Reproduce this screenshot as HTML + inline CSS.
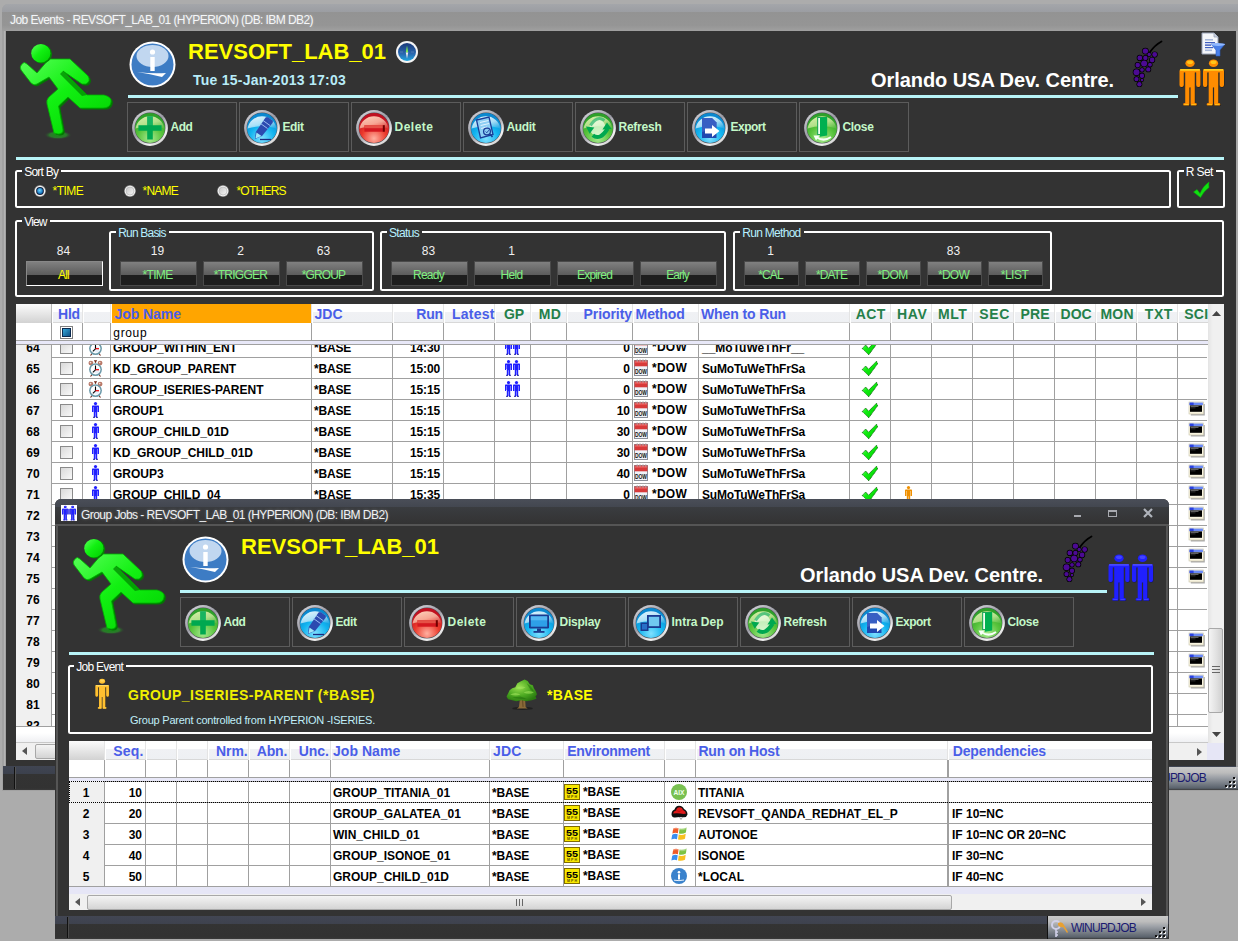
<!DOCTYPE html>
<html><head><meta charset="utf-8"><style>
html,body{margin:0;padding:0;}
body{width:1238px;height:941px;position:relative;overflow:hidden;background:#acacac;font-family:"Liberation Sans",sans-serif;}
svg{overflow:visible}
</style></head><body>
<div style="position:absolute;left:2px;top:4px;width:1240px;height:787px;background:#a2a2a2;border-radius:6px 6px 0 0;"></div>
<div style="position:absolute;left:2px;top:4px;width:1240px;height:9px;background:linear-gradient(#a4a6aa,#9a9ca1);border-radius:6px 6px 0 0;"></div>
<div style="position:absolute;left:2px;top:12px;width:1238px;height:19px;background:linear-gradient(#939393,#959595 70%,#a0a0a0);"></div>
<div style="position:absolute;left:4px;top:31px;width:1px;height:735px;background:#b4b4b4;"></div>
<div style="position:absolute;left:6px;top:31px;width:1230px;height:735px;background:#333333;"></div>
<div style="position:absolute;left:1236px;top:31px;width:2px;height:735px;background:#a8a8a8;"></div>
<div style="position:absolute;left:10.00px;top:19.84px;font:normal 12px 'Liberation Sans';line-height:0;white-space:pre;color:#f4f6f8;letter-spacing:-0.572px;text-shadow:0 0 3px rgba(255,255,255,0.35);">Job Events - REVSOFT_LAB_01 (HYPERION) (DB: IBM DB2)</div>
<svg style="position:absolute;left:16px;top:40px;" width="100" height="100" viewBox="0 0 100 100"><defs><linearGradient id="g1" x1="0" y1="0" x2="1" y2="1"><stop offset="0" stop-color="#5aff5a"/><stop offset="0.45" stop-color="#12f012"/><stop offset="1" stop-color="#00d000"/></linearGradient>
<radialGradient id="g2" cx="0.5" cy="0.5" r="0.5"><stop offset="0" stop-color="#1a8a1a"/><stop offset="0.6" stop-color="#2a7a2a"/><stop offset="1" stop-color="#333" stop-opacity="0"/></radialGradient></defs>
<ellipse cx="42" cy="95" rx="14" ry="4.5" fill="url(#g2)"/>
<path d="M6 24 Q8 21 11 24 L21 33 L33 19 L54 19 L72 36 Q75 41 70 44 L66 44 L47 31 L71 55 L88 55 Q96 57 95 62 Q94 68 87 68 L64 68 L52 57 L42.5 66 L47 90 Q47 94 42 94 L38 93 L31 64 Q30 60 33 57 L42 49 L33 37 L21 44 Q18 46 15 43 L5 30 Q3 27 6 24 Z" fill="#007a00" transform="translate(1.8,1.5)"/>
<path d="M6 24 Q8 21 11 24 L21 33 L33 19 L54 19 L72 36 Q75 41 70 44 L66 44 L47 31 L71 55 L88 55 Q96 57 95 62 Q94 68 87 68 L64 68 L52 57 L42.5 66 L47 90 Q47 94 42 94 L38 93 L31 64 Q30 60 33 57 L42 49 L33 37 L21 44 Q18 46 15 43 L5 30 Q3 27 6 24 Z" fill="url(#g1)" stroke="#00b000" stroke-width="0.8"/>
<path d="M47 31 L71 55 L66 56 L44 34 Z" fill="#008800" opacity="0.75"/>
<ellipse cx="26" cy="14" rx="10" ry="9.6" fill="#008a00"/><ellipse cx="24.8" cy="13.2" rx="9.6" ry="9.2" fill="url(#g1)"/></svg>
<svg style="position:absolute;left:128.5px;top:40.5px;" width="47" height="47" viewBox="0 0 47 47"><defs><radialGradient id="g3" cx="0.5" cy="0.3" r="0.7"><stop offset="0" stop-color="#cfe3f5"/><stop offset="0.45" stop-color="#6fa3d8"/><stop offset="1" stop-color="#2a6ab8"/></radialGradient></defs>
<circle cx="23.5" cy="23.5" r="23" fill="#fff"/><circle cx="23.5" cy="23.5" r="21" fill="#3d7cc4"/>
<ellipse cx="23.5" cy="15" rx="16" ry="11" fill="#d8e8f8" opacity="0.85"/>
<circle cx="23.5" cy="11" r="2.6" fill="#fff"/><rect x="21.3" y="16" width="4.4" height="14" fill="#fff"/>
<path d="M8 31 Q24 33 37 32 L33 36 Q22 33 8 31 Z" fill="#fff"/></svg>
<div style="position:absolute;left:188.00px;top:52.38px;font:bold 22px 'Liberation Sans';line-height:0;white-space:pre;color:#ffff00;">REVSOFT_LAB_01</div>
<svg style="position:absolute;left:396px;top:41px;" width="22" height="22" viewBox="0 0 22 22"><defs><linearGradient id="g4" x1="0" y1="0" x2="0" y2="1"><stop offset="0" stop-color="#1a3a78"/><stop offset="0.6" stop-color="#2a68b0"/><stop offset="1" stop-color="#20a8e0"/></linearGradient></defs>
<circle cx="11" cy="11" r="11" fill="#f4f4f4"/><circle cx="11" cy="11" r="9" fill="url(#g4)"/>
<path d="M4 11 H7 M15 11 H18" stroke="#6a90c0" stroke-width="0.6"/>
<path d="M11 4.5 L12.2 11.5 L9.8 11.5 Z" fill="#80f050"/><path d="M9.8 11.5 L12.2 11.5 L11 17.5 Z" fill="#f0f0f0"/></svg>
<div style="position:absolute;left:193.00px;top:80.15px;font:bold 14px 'Liberation Sans';line-height:0;white-space:pre;color:#b8ecf8;letter-spacing:0.257px;">Tue 15-Jan-2013 17:03</div>
<div style="position:absolute;left:871.00px;top:80.07px;font:bold 20px 'Liberation Sans';line-height:0;white-space:pre;color:#ffffff;letter-spacing:-0.062px;">Orlando USA Dev. Centre.</div>
<svg style="position:absolute;left:1125px;top:35px;" width="40" height="55" viewBox="0 0 40 55"><path d="M25 17 Q30 10 36.5 6.5" stroke="#000" stroke-width="1.8" fill="none" stroke-linecap="round"/><circle cx="20.4" cy="16.1" r="3.4" fill="#000"/><circle cx="24.2" cy="19.5" r="2.4" fill="#000"/><circle cx="29.7" cy="19.5" r="3.1" fill="#000"/><circle cx="14.8" cy="22.9" r="3.1" fill="#000"/><circle cx="20.4" cy="22.9" r="2.9" fill="#000"/><circle cx="27.1" cy="25" r="3.1" fill="#000"/><circle cx="12.7" cy="30.1" r="3.0" fill="#000"/><circle cx="19.1" cy="28.4" r="3.6999999999999997" fill="#000"/><circle cx="25" cy="29.7" r="2.6" fill="#000"/><circle cx="11.5" cy="37.3" r="3.6999999999999997" fill="#000"/><circle cx="17" cy="34.8" r="2.6" fill="#000"/><circle cx="23.3" cy="34.4" r="2.9" fill="#000"/><circle cx="17" cy="40.7" r="2.9" fill="#000"/><circle cx="11.5" cy="44.1" r="2.9" fill="#000"/><circle cx="17" cy="45" r="1.9" fill="#000"/><circle cx="14.4" cy="49.2" r="2.9" fill="#000"/><circle cx="20.4" cy="16.1" r="2.7" fill="#4c0a94"/><circle cx="24.2" cy="19.5" r="1.7" fill="#4c0a94"/><circle cx="29.7" cy="19.5" r="2.4000000000000004" fill="#4c0a94"/><circle cx="14.8" cy="22.9" r="2.4000000000000004" fill="#4c0a94"/><circle cx="20.4" cy="22.9" r="2.2" fill="#4c0a94"/><circle cx="27.1" cy="25" r="2.4000000000000004" fill="#4c0a94"/><circle cx="12.7" cy="30.1" r="2.3000000000000003" fill="#4c0a94"/><circle cx="19.1" cy="28.4" r="3.0" fill="#4c0a94"/><circle cx="25" cy="29.7" r="1.9000000000000001" fill="#4c0a94"/><circle cx="11.5" cy="37.3" r="3.0" fill="#4c0a94"/><circle cx="17" cy="34.8" r="1.9000000000000001" fill="#4c0a94"/><circle cx="23.3" cy="34.4" r="2.2" fill="#4c0a94"/><circle cx="17" cy="40.7" r="2.2" fill="#4c0a94"/><circle cx="11.5" cy="44.1" r="2.2" fill="#4c0a94"/><circle cx="17" cy="45" r="1.2" fill="#4c0a94"/><circle cx="14.4" cy="49.2" r="2.2" fill="#4c0a94"/></svg>
<svg style="position:absolute;left:1178.5px;top:59px;" width="46" height="47" viewBox="0 0 46 47"><g><ellipse cx="11" cy="4.2" rx="4.6" ry="3.8" fill="#ff8c00"/><ellipse cx="11" cy="3.2" rx="3" ry="1.8" fill="#ffd020" opacity="0.85"/>
<path d="M0.5 12 Q0.5 10 2.5 10 L19.5 10 Q21.5 10 21.5 12 L21.5 26 Q21.5 28 19.8 28 L19 28 Q17.2 28 17.2 26 L17.2 13.5 L15.8 13.5 L15.8 44 L17.5 44.2 Q18.5 46.5 16.5 46.5 L12 46.5 L11.6 45 L11.6 28.5 L10.4 28.5 L10.4 45 L10 46.5 L5.5 46.5 Q3.5 46.5 4.5 44.2 L6.2 44 L6.2 13.5 L4.8 13.5 L4.8 26 Q4.8 28 3 28 L2.2 28 Q0.5 28 0.5 26 Z" fill="#000" opacity="0.55" transform="translate(0.4,0.6)"/>
<path d="M0.5 12 Q0.5 10 2.5 10 L19.5 10 Q21.5 10 21.5 12 L21.5 26 Q21.5 28 19.8 28 L19 28 Q17.2 28 17.2 26 L17.2 13.5 L15.8 13.5 L15.8 44 L17.5 44.2 Q18.5 46.5 16.5 46.5 L12 46.5 L11.6 45 L11.6 28.5 L10.4 28.5 L10.4 45 L10 46.5 L5.5 46.5 Q3.5 46.5 4.5 44.2 L6.2 44 L6.2 13.5 L4.8 13.5 L4.8 26 Q4.8 28 3 28 L2.2 28 Q0.5 28 0.5 26 Z" fill="#ff8c00"/>
<path d="M1.2 10.9 L20.8 10.9" stroke="#ffd020" stroke-width="1.7"/>
<path d="M5.2 45.6 L9.5 45.6 M12.5 45.6 L16.8 45.6" stroke="#ffd020" stroke-width="1" opacity="0.8"/></g><g transform="translate(23.5,0)"><ellipse cx="11" cy="4.2" rx="4.6" ry="3.8" fill="#ff8c00"/><ellipse cx="11" cy="3.2" rx="3" ry="1.8" fill="#ffd020" opacity="0.85"/>
<path d="M0.5 12 Q0.5 10 2.5 10 L19.5 10 Q21.5 10 21.5 12 L21.5 26 Q21.5 28 19.8 28 L19 28 Q17.2 28 17.2 26 L17.2 13.5 L15.8 13.5 L15.8 44 L17.5 44.2 Q18.5 46.5 16.5 46.5 L12 46.5 L11.6 45 L11.6 28.5 L10.4 28.5 L10.4 45 L10 46.5 L5.5 46.5 Q3.5 46.5 4.5 44.2 L6.2 44 L6.2 13.5 L4.8 13.5 L4.8 26 Q4.8 28 3 28 L2.2 28 Q0.5 28 0.5 26 Z" fill="#000" opacity="0.55" transform="translate(0.4,0.6)"/>
<path d="M0.5 12 Q0.5 10 2.5 10 L19.5 10 Q21.5 10 21.5 12 L21.5 26 Q21.5 28 19.8 28 L19 28 Q17.2 28 17.2 26 L17.2 13.5 L15.8 13.5 L15.8 44 L17.5 44.2 Q18.5 46.5 16.5 46.5 L12 46.5 L11.6 45 L11.6 28.5 L10.4 28.5 L10.4 45 L10 46.5 L5.5 46.5 Q3.5 46.5 4.5 44.2 L6.2 44 L6.2 13.5 L4.8 13.5 L4.8 26 Q4.8 28 3 28 L2.2 28 Q0.5 28 0.5 26 Z" fill="#ff8c00"/>
<path d="M1.2 10.9 L20.8 10.9" stroke="#ffd020" stroke-width="1.7"/>
<path d="M5.2 45.6 L9.5 45.6 M12.5 45.6 L16.8 45.6" stroke="#ffd020" stroke-width="1" opacity="0.8"/></g></svg>
<svg style="position:absolute;left:1201px;top:32px;" width="25" height="25" viewBox="0 0 25 25"><path d="M1 1 L13 1 L17 5 L17 22 L1 22 Z" fill="#f4f6fa" stroke="#9aa4b8" stroke-width="1"/>
<path d="M13 1 L13 5 L17 5" fill="#c8d0e0" stroke="#9aa4b8" stroke-width="0.8"/>
<rect x="4" y="7" width="8" height="1.6" fill="#a8b8d8"/><rect x="4" y="10" width="10" height="1.2" fill="#4060c0"/><rect x="4" y="12.5" width="6" height="1.2" fill="#2040b0"/><rect x="4" y="15" width="8" height="1.2" fill="#4060c0"/><rect x="4" y="17.5" width="7" height="1.6" fill="#a8b8d8"/>
<path d="M10 12 L24 12 L19 18 L19 24 L15 24 L15 18 Z" fill="#4a80e8" stroke="#2a5ac0" stroke-width="0.6"/><ellipse cx="17" cy="12.5" rx="7" ry="1.5" fill="#90b8ff"/></svg>
<div style="position:absolute;left:128px;top:95px;width:1050px;height:3px;background:#b8f4f8;"></div>
<div style="position:absolute;left:127px;top:102px;width:110px;height:50px;box-sizing:border-box;border:1px solid #5c5c5c;"></div>
<svg style="position:absolute;left:132px;top:110px;" width="36" height="36" viewBox="0 0 36 36"><defs><linearGradient id="g5" x1="0.15" y1="0" x2="0.85" y2="1"><stop offset="0" stop-color="#d4d4da"/><stop offset="0.45" stop-color="#9c9ca6"/><stop offset="0.8" stop-color="#f4f4f4"/><stop offset="1" stop-color="#b8b8b8"/></linearGradient>
<radialGradient id="g6" cx="0.5" cy="0.85" r="0.75"><stop offset="0" stop-color="#a8e890"/><stop offset="0.55" stop-color="#58c43c"/><stop offset="1" stop-color="#2ea02a"/></radialGradient>
<linearGradient id="g7" x1="0.2" y1="0" x2="0.8" y2="1"><stop offset="0" stop-color="#d8f0a8" stop-opacity="1"/><stop offset="0.55" stop-color="#d8f0a8" stop-opacity="0.75"/><stop offset="1" stop-color="#d8f0a8" stop-opacity="0.15"/></linearGradient></defs>
<circle cx="18" cy="18" r="17.9" fill="url(#g5)"/><circle cx="18" cy="18" r="15.4" fill="#505058"/><circle cx="18" cy="18" r="15" fill="url(#g6)"/>
<path d="M3.6 18.5 A14.6 14.6 0 0 1 32.4 18.5 Q18 14 3.6 18.5 Z" fill="url(#g7)"/><path d="M15.2 6.2 H20.8 V15.2 H29.6 V20.8 H20.8 V29.6 H15.2 V20.8 H6.4 V15.2 H15.2 Z" fill="#00a850"/><path d="M15.2 6.2 H20.8 V15.2 H15.2 Z" fill="#30c070" opacity="0.5"/></svg>
<div style="position:absolute;left:170.50px;top:126.84px;font:bold 12px 'Liberation Sans';line-height:0;white-space:pre;color:#c4f8c8;letter-spacing:-0.443px;">Add</div>
<div style="position:absolute;left:239px;top:102px;width:110px;height:50px;box-sizing:border-box;border:1px solid #5c5c5c;"></div>
<svg style="position:absolute;left:244px;top:110px;" width="36" height="36" viewBox="0 0 36 36"><defs><linearGradient id="g9" x1="0.15" y1="0" x2="0.85" y2="1"><stop offset="0" stop-color="#d4d4da"/><stop offset="0.45" stop-color="#9c9ca6"/><stop offset="0.8" stop-color="#f4f4f4"/><stop offset="1" stop-color="#b8b8b8"/></linearGradient>
<radialGradient id="g10" cx="0.5" cy="0.85" r="0.75"><stop offset="0" stop-color="#80e0ff"/><stop offset="0.55" stop-color="#12b4f0"/><stop offset="1" stop-color="#0a88d0"/></radialGradient>
<linearGradient id="g11" x1="0.2" y1="0" x2="0.8" y2="1"><stop offset="0" stop-color="#e0f6ff" stop-opacity="1"/><stop offset="0.55" stop-color="#e0f6ff" stop-opacity="0.75"/><stop offset="1" stop-color="#e0f6ff" stop-opacity="0.15"/></linearGradient></defs>
<circle cx="18" cy="18" r="17.9" fill="url(#g9)"/><circle cx="18" cy="18" r="15.4" fill="#505058"/><circle cx="18" cy="18" r="15" fill="url(#g10)"/>
<path d="M3.6 18.5 A14.6 14.6 0 0 1 32.4 18.5 Q18 14 3.6 18.5 Z" fill="url(#g11)"/><path d="M21.5 7.5 Q23 6.5 24.5 7.5 L28.5 10.5 Q29.5 11.5 28.5 13 L18 26 L11 29 L11.8 22 Z" fill="#2c4ab0"/><path d="M19 10.5 L26 15.5 M16.5 13.5 L23.5 18.5" stroke="#a8c8f8" stroke-width="0.9"/><path d="M12.5 22.5 L17.5 26 L11.5 28.5 Z" fill="#9ee8f8"/><path d="M16 29.5 H27" stroke="#1a2a80" stroke-width="1.3"/></svg>
<div style="position:absolute;left:282.50px;top:126.84px;font:bold 12px 'Liberation Sans';line-height:0;white-space:pre;color:#c4f8c8;letter-spacing:-0.418px;">Edit</div>
<div style="position:absolute;left:351px;top:102px;width:110px;height:50px;box-sizing:border-box;border:1px solid #5c5c5c;"></div>
<svg style="position:absolute;left:356px;top:110px;" width="36" height="36" viewBox="0 0 36 36"><defs><linearGradient id="g13" x1="0.15" y1="0" x2="0.85" y2="1"><stop offset="0" stop-color="#d4d4da"/><stop offset="0.45" stop-color="#9c9ca6"/><stop offset="0.8" stop-color="#f4f4f4"/><stop offset="1" stop-color="#b8b8b8"/></linearGradient>
<radialGradient id="g14" cx="0.5" cy="0.85" r="0.75"><stop offset="0" stop-color="#ffb0a0"/><stop offset="0.55" stop-color="#ec3a2c"/><stop offset="1" stop-color="#c01020"/></radialGradient>
<linearGradient id="g15" x1="0.2" y1="0" x2="0.8" y2="1"><stop offset="0" stop-color="#ffd0b8" stop-opacity="1"/><stop offset="0.55" stop-color="#ffd0b8" stop-opacity="0.75"/><stop offset="1" stop-color="#ffd0b8" stop-opacity="0.15"/></linearGradient></defs>
<circle cx="18" cy="18" r="17.9" fill="url(#g13)"/><circle cx="18" cy="18" r="15.4" fill="#505058"/><circle cx="18" cy="18" r="15" fill="url(#g14)"/>
<path d="M3.6 18.5 A14.6 14.6 0 0 1 32.4 18.5 Q18 14 3.6 18.5 Z" fill="url(#g15)"/><rect x="8.4" y="15.2" width="20.4" height="6.5" fill="#d41820"/><rect x="8.4" y="15.2" width="20.4" height="3" fill="#e86050" opacity="0.8"/><rect x="26.8" y="15.2" width="2" height="6.5" fill="#700000"/></svg>
<div style="position:absolute;left:394.50px;top:126.84px;font:bold 12px 'Liberation Sans';line-height:0;white-space:pre;color:#c4f8c8;letter-spacing:0.495px;">Delete</div>
<div style="position:absolute;left:463px;top:102px;width:110px;height:50px;box-sizing:border-box;border:1px solid #5c5c5c;"></div>
<svg style="position:absolute;left:468px;top:110px;" width="36" height="36" viewBox="0 0 36 36"><defs><linearGradient id="g17" x1="0.15" y1="0" x2="0.85" y2="1"><stop offset="0" stop-color="#d4d4da"/><stop offset="0.45" stop-color="#9c9ca6"/><stop offset="0.8" stop-color="#f4f4f4"/><stop offset="1" stop-color="#b8b8b8"/></linearGradient>
<radialGradient id="g18" cx="0.5" cy="0.85" r="0.75"><stop offset="0" stop-color="#80e0ff"/><stop offset="0.55" stop-color="#12b4f0"/><stop offset="1" stop-color="#0a88d0"/></radialGradient>
<linearGradient id="g19" x1="0.2" y1="0" x2="0.8" y2="1"><stop offset="0" stop-color="#e0f6ff" stop-opacity="1"/><stop offset="0.55" stop-color="#e0f6ff" stop-opacity="0.75"/><stop offset="1" stop-color="#e0f6ff" stop-opacity="0.15"/></linearGradient></defs>
<circle cx="18" cy="18" r="17.9" fill="url(#g17)"/><circle cx="18" cy="18" r="15.4" fill="#505058"/><circle cx="18" cy="18" r="15" fill="url(#g18)"/>
<path d="M3.6 18.5 A14.6 14.6 0 0 1 32.4 18.5 Q18 14 3.6 18.5 Z" fill="url(#g19)"/><path d="M8.5 10 L21 7 L25 24.5 L12.5 28 Z" fill="#8ecff4" stroke="#1a3c98" stroke-width="1.3"/><path d="M12 12.5 L20.5 10.5 M12.6 15.5 L21.2 13.5 M13.2 18.5 L19 17" stroke="#e4f4ff" stroke-width="1"/><circle cx="19" cy="21.5" r="3.4" fill="#8ecff4" stroke="#1a3c98" stroke-width="1.3"/><path d="M17.6 21.5 L18.8 22.8 L20.8 20.2" stroke="#1a3c98" stroke-width="0.9" fill="none"/><path d="M21.8 24 L24.5 27" stroke="#1a3c98" stroke-width="1.6"/></svg>
<div style="position:absolute;left:506.50px;top:126.84px;font:bold 12px 'Liberation Sans';line-height:0;white-space:pre;color:#c4f8c8;letter-spacing:-0.331px;">Audit</div>
<div style="position:absolute;left:575px;top:102px;width:110px;height:50px;box-sizing:border-box;border:1px solid #5c5c5c;"></div>
<svg style="position:absolute;left:580px;top:110px;" width="36" height="36" viewBox="0 0 36 36"><defs><linearGradient id="g21" x1="0.15" y1="0" x2="0.85" y2="1"><stop offset="0" stop-color="#d4d4da"/><stop offset="0.45" stop-color="#9c9ca6"/><stop offset="0.8" stop-color="#f4f4f4"/><stop offset="1" stop-color="#b8b8b8"/></linearGradient>
<radialGradient id="g22" cx="0.5" cy="0.85" r="0.75"><stop offset="0" stop-color="#a8e890"/><stop offset="0.55" stop-color="#58c43c"/><stop offset="1" stop-color="#2ea02a"/></radialGradient>
<linearGradient id="g23" x1="0.2" y1="0" x2="0.8" y2="1"><stop offset="0" stop-color="#d8f0a8" stop-opacity="1"/><stop offset="0.55" stop-color="#d8f0a8" stop-opacity="0.75"/><stop offset="1" stop-color="#d8f0a8" stop-opacity="0.15"/></linearGradient></defs>
<circle cx="18" cy="18" r="17.9" fill="url(#g21)"/><circle cx="18" cy="18" r="15.4" fill="#505058"/><circle cx="18" cy="18" r="15" fill="url(#g22)"/>
<path d="M3.6 18.5 A14.6 14.6 0 0 1 32.4 18.5 Q18 14 3.6 18.5 Z" fill="url(#g23)"/><circle cx="17.5" cy="17.5" r="8" fill="#f4fff0" opacity="0.7"/><path d="M24.5 10.5 Q17 5 10.5 15.5" stroke="#30b870" stroke-width="3" fill="none" opacity="0.75"/><path d="M5.9 16.6 L14.3 17.6 L9.7 23.7 Z" fill="#00a850"/><path d="M12.8 25.3 Q20 31 27.6 18.6" stroke="#00a850" stroke-width="4" fill="none"/><path d="M22.4 19.6 L31.6 19.1 L27 12.5 Z" fill="#00a850"/></svg>
<div style="position:absolute;left:618.50px;top:126.84px;font:bold 12px 'Liberation Sans';line-height:0;white-space:pre;color:#c4f8c8;letter-spacing:-0.241px;">Refresh</div>
<div style="position:absolute;left:687px;top:102px;width:110px;height:50px;box-sizing:border-box;border:1px solid #5c5c5c;"></div>
<svg style="position:absolute;left:692px;top:110px;" width="36" height="36" viewBox="0 0 36 36"><defs><linearGradient id="g25" x1="0.15" y1="0" x2="0.85" y2="1"><stop offset="0" stop-color="#d4d4da"/><stop offset="0.45" stop-color="#9c9ca6"/><stop offset="0.8" stop-color="#f4f4f4"/><stop offset="1" stop-color="#b8b8b8"/></linearGradient>
<radialGradient id="g26" cx="0.5" cy="0.85" r="0.75"><stop offset="0" stop-color="#80e0ff"/><stop offset="0.55" stop-color="#12b4f0"/><stop offset="1" stop-color="#0a88d0"/></radialGradient>
<linearGradient id="g27" x1="0.2" y1="0" x2="0.8" y2="1"><stop offset="0" stop-color="#e0f6ff" stop-opacity="1"/><stop offset="0.55" stop-color="#e0f6ff" stop-opacity="0.75"/><stop offset="1" stop-color="#e0f6ff" stop-opacity="0.15"/></linearGradient></defs>
<circle cx="18" cy="18" r="17.9" fill="url(#g25)"/><circle cx="18" cy="18" r="15.4" fill="#505058"/><circle cx="18" cy="18" r="15" fill="url(#g26)"/>
<path d="M3.6 18.5 A14.6 14.6 0 0 1 32.4 18.5 Q18 14 3.6 18.5 Z" fill="url(#g27)"/><path d="M10 8 L20 8 L24.5 12.5 L24.5 28 L10 28 Z" fill="#2048b0"/><path d="M10 8 L20 8 L24.5 12.5 L24.5 18 L10 22 Z" fill="#4a70d0" opacity="0.6"/><path d="M13 18.5 L20 18.5 L20 15 L27.5 21 L20 27 L20 23.5 L13 23.5 Z" fill="#fff"/></svg>
<div style="position:absolute;left:730.50px;top:126.84px;font:bold 12px 'Liberation Sans';line-height:0;white-space:pre;color:#c4f8c8;letter-spacing:-0.503px;">Export</div>
<div style="position:absolute;left:799px;top:102px;width:110px;height:50px;box-sizing:border-box;border:1px solid #5c5c5c;"></div>
<svg style="position:absolute;left:804px;top:110px;" width="36" height="36" viewBox="0 0 36 36"><defs><linearGradient id="g29" x1="0.15" y1="0" x2="0.85" y2="1"><stop offset="0" stop-color="#d4d4da"/><stop offset="0.45" stop-color="#9c9ca6"/><stop offset="0.8" stop-color="#f4f4f4"/><stop offset="1" stop-color="#b8b8b8"/></linearGradient>
<radialGradient id="g30" cx="0.5" cy="0.85" r="0.75"><stop offset="0" stop-color="#a8e890"/><stop offset="0.55" stop-color="#58c43c"/><stop offset="1" stop-color="#2ea02a"/></radialGradient>
<linearGradient id="g31" x1="0.2" y1="0" x2="0.8" y2="1"><stop offset="0" stop-color="#d8f0a8" stop-opacity="1"/><stop offset="0.55" stop-color="#d8f0a8" stop-opacity="0.75"/><stop offset="1" stop-color="#d8f0a8" stop-opacity="0.15"/></linearGradient></defs>
<circle cx="18" cy="18" r="17.9" fill="url(#g29)"/><circle cx="18" cy="18" r="15.4" fill="#505058"/><circle cx="18" cy="18" r="15" fill="url(#g30)"/>
<path d="M3.6 18.5 A14.6 14.6 0 0 1 32.4 18.5 Q18 14 3.6 18.5 Z" fill="url(#g31)"/><path d="M13.1 7 L23.1 7 L23.1 25 L13.1 25 Z" fill="#20a858"/><path d="M14.2 8 L16 8 L16 24 L14.2 24 Z" fill="#f0fff0"/><path d="M16 7.8 L23.1 7 L23.1 25.5 L16 26.8 Z" fill="#00b050"/><path d="M27 27 Q20 32 13 27.5" stroke="#f8fff8" stroke-width="2" fill="none"/><path d="M9.5 25.5 L15.5 25.5 L12 30.5 Z" fill="#f8fff8"/></svg>
<div style="position:absolute;left:842.50px;top:126.84px;font:bold 12px 'Liberation Sans';line-height:0;white-space:pre;color:#c4f8c8;letter-spacing:-0.338px;">Close</div>
<div style="position:absolute;left:16px;top:157px;width:1208px;height:3px;background:#b8f4f8;"></div>
<div style="position:absolute;left:15px;top:170px;width:1156px;height:38px;box-sizing:border-box;border:2px solid #fff;border-radius:2.5px;"></div>
<div style="position:absolute;left:22.2px;top:169px;width:39.0px;height:4px;background:#333333;"></div>
<div style="position:absolute;left:24.20px;top:171.84px;font:normal 12px 'Liberation Sans';line-height:0;white-space:pre;color:#ffffff;letter-spacing:-0.766px;">Sort By</div>
<svg style="position:absolute;left:34px;top:185px;" width="12" height="12" viewBox="0 0 12 12"><defs><radialGradient id="g33" cx="0.45" cy="0.4" r="0.6"><stop offset="0" stop-color="#70d8ff"/><stop offset="1" stop-color="#0a68b8"/></radialGradient></defs>
<circle cx="6" cy="6" r="5.9" fill="#8a8a8a"/><circle cx="6" cy="6" r="5.3" fill="#f4f4f4"/><circle cx="6" cy="6" r="3.9" fill="#16243e"/><circle cx="6" cy="6" r="2.9" fill="url(#g33)"/></svg>
<div style="position:absolute;left:52.60px;top:191.24px;font:normal 12px 'Liberation Sans';line-height:0;white-space:pre;color:#ffff00;letter-spacing:-0.569px;">*TIME</div>
<svg style="position:absolute;left:123.6px;top:185px;" width="12" height="12" viewBox="0 0 12 12"><defs><linearGradient id="g34" x1="0" y1="0" x2="1" y2="1"><stop offset="0" stop-color="#c4c4c4"/><stop offset="1" stop-color="#f8f8f8"/></linearGradient></defs>
<circle cx="6" cy="6" r="5.9" fill="#8a8a8a"/><circle cx="6" cy="6" r="5.3" fill="#f4f4f4"/><circle cx="6" cy="6" r="4" fill="url(#g34)" stroke="#b0b0b0" stroke-width="0.6"/></svg>
<div style="position:absolute;left:142.50px;top:191.24px;font:normal 12px 'Liberation Sans';line-height:0;white-space:pre;color:#ffff00;letter-spacing:-0.769px;">*NAME</div>
<svg style="position:absolute;left:217.2px;top:185px;" width="12" height="12" viewBox="0 0 12 12"><defs><linearGradient id="g35" x1="0" y1="0" x2="1" y2="1"><stop offset="0" stop-color="#c4c4c4"/><stop offset="1" stop-color="#f8f8f8"/></linearGradient></defs>
<circle cx="6" cy="6" r="5.9" fill="#8a8a8a"/><circle cx="6" cy="6" r="5.3" fill="#f4f4f4"/><circle cx="6" cy="6" r="4" fill="url(#g35)" stroke="#b0b0b0" stroke-width="0.6"/></svg>
<div style="position:absolute;left:236.40px;top:191.24px;font:normal 12px 'Liberation Sans';line-height:0;white-space:pre;color:#ffff00;letter-spacing:-0.741px;">*OTHERS</div>
<div style="position:absolute;left:1177px;top:170px;width:48px;height:38px;box-sizing:border-box;border:2px solid #fff;border-radius:2.5px;"></div>
<div style="position:absolute;left:1183.7px;top:169px;width:32.0px;height:4px;background:#333333;"></div>
<div style="position:absolute;left:1185.70px;top:171.84px;font:normal 12px 'Liberation Sans';line-height:0;white-space:pre;color:#ffffff;letter-spacing:-0.603px;">R Set</div>
<svg style="position:absolute;left:1192px;top:181px;" width="18" height="17" viewBox="0 0 18 17"><path d="M1.5 11 L5 8.5 L8 12.5 Q11 5 17 1 Q16.5 4 17 6.5 Q12 10 8.5 16.5 Z" fill="#10e010" stroke="#08b008" stroke-width="0.5"/></svg>
<div style="position:absolute;left:15px;top:220px;width:1209px;height:77px;box-sizing:border-box;border:2px solid #fff;border-radius:2.5px;"></div>
<div style="position:absolute;left:22.2px;top:219px;width:27.500000000000004px;height:4px;background:#333333;"></div>
<div style="position:absolute;left:24.20px;top:221.84px;font:normal 12px 'Liberation Sans';line-height:0;white-space:pre;color:#ffffff;letter-spacing:-0.824px;">View</div>
<div style="position:absolute;left:109px;top:231px;width:265px;height:60px;box-sizing:border-box;border:2px solid #fff;border-radius:2.5px;"></div>
<div style="position:absolute;left:116.2px;top:230px;width:52.499999999999986px;height:4px;background:#333333;"></div>
<div style="position:absolute;left:118.20px;top:232.84px;font:normal 12px 'Liberation Sans';line-height:0;white-space:pre;color:#b8f0ff;letter-spacing:-0.800px;">Run Basis</div>
<div style="position:absolute;left:380px;top:231px;width:346px;height:60px;box-sizing:border-box;border:2px solid #fff;border-radius:2.5px;"></div>
<div style="position:absolute;left:387px;top:230px;width:35px;height:4px;background:#333333;"></div>
<div style="position:absolute;left:389.00px;top:232.84px;font:normal 12px 'Liberation Sans';line-height:0;white-space:pre;color:#b8f0ff;letter-spacing:-0.672px;">Status</div>
<div style="position:absolute;left:733px;top:231px;width:319px;height:60px;box-sizing:border-box;border:2px solid #fff;border-radius:2.5px;"></div>
<div style="position:absolute;left:740.3px;top:230px;width:63.299999999999955px;height:4px;background:#333333;"></div>
<div style="position:absolute;left:742.30px;top:232.84px;font:normal 12px 'Liberation Sans';line-height:0;white-space:pre;color:#b8f0ff;letter-spacing:-0.708px;">Run Method</div>
<div style="position:absolute;left:26px;top:261px;width:77px;height:25px;box-sizing:border-box;border:1px solid #fff;border-left-color:#888;border-top-color:#888;background:linear-gradient(#808080,#5c5c5c 56%,#1e1e1e 56%,#1e1e1e);"></div>
<div style="position:absolute;left:58.00px;top:274.84px;font:normal 12px 'Liberation Sans';line-height:0;white-space:pre;color:#ffff00;letter-spacing:-0.781px;">All</div>
<div style="position:absolute;left:56.82px;top:250.84px;font:normal 12px 'Liberation Sans';line-height:0;white-space:pre;color:#f0f0f0;">84</div>
<div style="position:absolute;left:120px;top:261px;width:77px;height:25px;box-sizing:border-box;border:1px solid #4a4a4a;background:linear-gradient(#808080,#5c5c5c 56%,#1e1e1e 56%,#1e1e1e);"></div>
<div style="position:absolute;left:142.50px;top:274.84px;font:normal 12px 'Liberation Sans';line-height:0;white-space:pre;color:#80f080;letter-spacing:-0.669px;">*TIME</div>
<div style="position:absolute;left:150.82px;top:250.84px;font:normal 12px 'Liberation Sans';line-height:0;white-space:pre;color:#f0f0f0;">19</div>
<div style="position:absolute;left:203px;top:261px;width:77px;height:25px;box-sizing:border-box;border:1px solid #4a4a4a;background:linear-gradient(#808080,#5c5c5c 56%,#1e1e1e 56%,#1e1e1e);"></div>
<div style="position:absolute;left:213.75px;top:274.84px;font:normal 12px 'Liberation Sans';line-height:0;white-space:pre;color:#80f080;letter-spacing:-0.730px;">*TRIGGER</div>
<div style="position:absolute;left:237.16px;top:250.84px;font:normal 12px 'Liberation Sans';line-height:0;white-space:pre;color:#f0f0f0;">2</div>
<div style="position:absolute;left:286px;top:261px;width:77px;height:25px;box-sizing:border-box;border:1px solid #4a4a4a;background:linear-gradient(#808080,#5c5c5c 56%,#1e1e1e 56%,#1e1e1e);"></div>
<div style="position:absolute;left:301.75px;top:274.84px;font:normal 12px 'Liberation Sans';line-height:0;white-space:pre;color:#80f080;letter-spacing:-0.865px;">*GROUP</div>
<div style="position:absolute;left:316.82px;top:250.84px;font:normal 12px 'Liberation Sans';line-height:0;white-space:pre;color:#f0f0f0;">63</div>
<div style="position:absolute;left:391px;top:261px;width:77px;height:25px;box-sizing:border-box;border:1px solid #4a4a4a;background:linear-gradient(#808080,#5c5c5c 56%,#1e1e1e 56%,#1e1e1e);"></div>
<div style="position:absolute;left:413.00px;top:274.84px;font:normal 12px 'Liberation Sans';line-height:0;white-space:pre;color:#80f080;letter-spacing:-0.738px;">Ready</div>
<div style="position:absolute;left:421.82px;top:250.84px;font:normal 12px 'Liberation Sans';line-height:0;white-space:pre;color:#f0f0f0;">83</div>
<div style="position:absolute;left:474px;top:261px;width:77px;height:25px;box-sizing:border-box;border:1px solid #4a4a4a;background:linear-gradient(#808080,#5c5c5c 56%,#1e1e1e 56%,#1e1e1e);"></div>
<div style="position:absolute;left:500.50px;top:274.84px;font:normal 12px 'Liberation Sans';line-height:0;white-space:pre;color:#80f080;letter-spacing:-0.672px;">Held</div>
<div style="position:absolute;left:508.16px;top:250.84px;font:normal 12px 'Liberation Sans';line-height:0;white-space:pre;color:#f0f0f0;">1</div>
<div style="position:absolute;left:557px;top:261px;width:77px;height:25px;box-sizing:border-box;border:1px solid #4a4a4a;background:linear-gradient(#808080,#5c5c5c 56%,#1e1e1e 56%,#1e1e1e);"></div>
<div style="position:absolute;left:577.00px;top:274.84px;font:normal 12px 'Liberation Sans';line-height:0;white-space:pre;color:#80f080;letter-spacing:-0.812px;">Expired</div>
<div style="position:absolute;left:640px;top:261px;width:77px;height:25px;box-sizing:border-box;border:1px solid #4a4a4a;background:linear-gradient(#808080,#5c5c5c 56%,#1e1e1e 56%,#1e1e1e);"></div>
<div style="position:absolute;left:666.25px;top:274.84px;font:normal 12px 'Liberation Sans';line-height:0;white-space:pre;color:#80f080;letter-spacing:-0.969px;">Early</div>
<div style="position:absolute;left:744px;top:261px;width:55px;height:25px;box-sizing:border-box;border:1px solid #4a4a4a;background:linear-gradient(#808080,#5c5c5c 56%,#1e1e1e 56%,#1e1e1e);"></div>
<div style="position:absolute;left:758.25px;top:274.84px;font:normal 12px 'Liberation Sans';line-height:0;white-space:pre;color:#80f080;letter-spacing:-0.879px;">*CAL</div>
<div style="position:absolute;left:767.16px;top:250.84px;font:normal 12px 'Liberation Sans';line-height:0;white-space:pre;color:#f0f0f0;">1</div>
<div style="position:absolute;left:805px;top:261px;width:55px;height:25px;box-sizing:border-box;border:1px solid #4a4a4a;background:linear-gradient(#808080,#5c5c5c 56%,#1e1e1e 56%,#1e1e1e);"></div>
<div style="position:absolute;left:816.00px;top:274.84px;font:normal 12px 'Liberation Sans';line-height:0;white-space:pre;color:#80f080;letter-spacing:-0.959px;">*DATE</div>
<div style="position:absolute;left:866px;top:261px;width:55px;height:25px;box-sizing:border-box;border:1px solid #4a4a4a;background:linear-gradient(#808080,#5c5c5c 56%,#1e1e1e 56%,#1e1e1e);"></div>
<div style="position:absolute;left:877.50px;top:274.84px;font:normal 12px 'Liberation Sans';line-height:0;white-space:pre;color:#80f080;letter-spacing:-0.668px;">*DOM</div>
<div style="position:absolute;left:927px;top:261px;width:55px;height:25px;box-sizing:border-box;border:1px solid #4a4a4a;background:linear-gradient(#808080,#5c5c5c 56%,#1e1e1e 56%,#1e1e1e);"></div>
<div style="position:absolute;left:938.00px;top:274.84px;font:normal 12px 'Liberation Sans';line-height:0;white-space:pre;color:#80f080;letter-spacing:-0.750px;">*DOW</div>
<div style="position:absolute;left:946.82px;top:250.84px;font:normal 12px 'Liberation Sans';line-height:0;white-space:pre;color:#f0f0f0;">83</div>
<div style="position:absolute;left:988px;top:261px;width:55px;height:25px;box-sizing:border-box;border:1px solid #4a4a4a;background:linear-gradient(#808080,#5c5c5c 56%,#1e1e1e 56%,#1e1e1e);"></div>
<div style="position:absolute;left:1000.75px;top:274.84px;font:normal 12px 'Liberation Sans';line-height:0;white-space:pre;color:#80f080;letter-spacing:-0.503px;">*LIST</div>
<div style="position:absolute;left:16px;top:304px;width:1208px;height:456px;background:#ffffff;"></div>
<div style="position:absolute;left:16px;top:304px;width:1192px;height:19px;background:linear-gradient(#ffffff,#ffffff 40%,#f0f1f4 42%,#eef0f3);"></div>
<div style="position:absolute;left:16px;top:322px;width:1192px;height:1px;background:#d8d8d8;"></div>
<div style="position:absolute;left:16px;top:304px;width:35px;height:19px;background:linear-gradient(#fbfbfb,#d2d2d2);"></div>
<div style="position:absolute;left:111px;top:304px;width:200px;height:19px;background:#ffa500;"></div>
<div style="position:absolute;left:51px;top:304px;width:1px;height:19px;background:#e4e4e4;"></div>
<div style="position:absolute;left:52px;top:304px;width:1px;height:19px;background:#ffffff;"></div>
<div style="position:absolute;left:82px;top:304px;width:1px;height:19px;background:#e4e4e4;"></div>
<div style="position:absolute;left:83px;top:304px;width:1px;height:19px;background:#ffffff;"></div>
<div style="position:absolute;left:110px;top:304px;width:1px;height:19px;background:#e4e4e4;"></div>
<div style="position:absolute;left:111px;top:304px;width:1px;height:19px;background:#ffffff;"></div>
<div style="position:absolute;left:311px;top:304px;width:1px;height:19px;background:#e4e4e4;"></div>
<div style="position:absolute;left:312px;top:304px;width:1px;height:19px;background:#ffffff;"></div>
<div style="position:absolute;left:392px;top:304px;width:1px;height:19px;background:#e4e4e4;"></div>
<div style="position:absolute;left:393px;top:304px;width:1px;height:19px;background:#ffffff;"></div>
<div style="position:absolute;left:443px;top:304px;width:1px;height:19px;background:#e4e4e4;"></div>
<div style="position:absolute;left:444px;top:304px;width:1px;height:19px;background:#ffffff;"></div>
<div style="position:absolute;left:494px;top:304px;width:1px;height:19px;background:#e4e4e4;"></div>
<div style="position:absolute;left:495px;top:304px;width:1px;height:19px;background:#ffffff;"></div>
<div style="position:absolute;left:530px;top:304px;width:1px;height:19px;background:#e4e4e4;"></div>
<div style="position:absolute;left:531px;top:304px;width:1px;height:19px;background:#ffffff;"></div>
<div style="position:absolute;left:566px;top:304px;width:1px;height:19px;background:#e4e4e4;"></div>
<div style="position:absolute;left:567px;top:304px;width:1px;height:19px;background:#ffffff;"></div>
<div style="position:absolute;left:632px;top:304px;width:1px;height:19px;background:#e4e4e4;"></div>
<div style="position:absolute;left:633px;top:304px;width:1px;height:19px;background:#ffffff;"></div>
<div style="position:absolute;left:698px;top:304px;width:1px;height:19px;background:#e4e4e4;"></div>
<div style="position:absolute;left:699px;top:304px;width:1px;height:19px;background:#ffffff;"></div>
<div style="position:absolute;left:849px;top:304px;width:1px;height:19px;background:#e4e4e4;"></div>
<div style="position:absolute;left:850px;top:304px;width:1px;height:19px;background:#ffffff;"></div>
<div style="position:absolute;left:890px;top:304px;width:1px;height:19px;background:#e4e4e4;"></div>
<div style="position:absolute;left:891px;top:304px;width:1px;height:19px;background:#ffffff;"></div>
<div style="position:absolute;left:931px;top:304px;width:1px;height:19px;background:#e4e4e4;"></div>
<div style="position:absolute;left:932px;top:304px;width:1px;height:19px;background:#ffffff;"></div>
<div style="position:absolute;left:972px;top:304px;width:1px;height:19px;background:#e4e4e4;"></div>
<div style="position:absolute;left:973px;top:304px;width:1px;height:19px;background:#ffffff;"></div>
<div style="position:absolute;left:1013px;top:304px;width:1px;height:19px;background:#e4e4e4;"></div>
<div style="position:absolute;left:1014px;top:304px;width:1px;height:19px;background:#ffffff;"></div>
<div style="position:absolute;left:1054px;top:304px;width:1px;height:19px;background:#e4e4e4;"></div>
<div style="position:absolute;left:1055px;top:304px;width:1px;height:19px;background:#ffffff;"></div>
<div style="position:absolute;left:1095px;top:304px;width:1px;height:19px;background:#e4e4e4;"></div>
<div style="position:absolute;left:1096px;top:304px;width:1px;height:19px;background:#ffffff;"></div>
<div style="position:absolute;left:1136px;top:304px;width:1px;height:19px;background:#e4e4e4;"></div>
<div style="position:absolute;left:1137px;top:304px;width:1px;height:19px;background:#ffffff;"></div>
<div style="position:absolute;left:1177px;top:304px;width:1px;height:19px;background:#e4e4e4;"></div>
<div style="position:absolute;left:1178px;top:304px;width:1px;height:19px;background:#ffffff;"></div>
<div style="position:absolute;left:51px;top:304px;width:1px;height:19px;background:#b8b8b8;"></div>
<div style="position:absolute;left:58.00px;top:314.15px;font:bold 14px 'Liberation Sans';line-height:0;white-space:pre;color:#4a5ee8;letter-spacing:-0.188px;">Hld</div>
<div style="position:absolute;left:114.50px;top:314.15px;font:bold 14px 'Liberation Sans';line-height:0;white-space:pre;color:#4a5ee8;letter-spacing:-0.053px;">Job Name</div>
<div style="position:absolute;left:314.50px;top:314.15px;font:bold 14px 'Liberation Sans';line-height:0;white-space:pre;color:#4a5ee8;">JDC</div>
<div style="position:absolute;left:416.30px;top:314.15px;font:bold 14px 'Liberation Sans';line-height:0;white-space:pre;color:#4a5ee8;letter-spacing:-0.240px;">Run</div>
<div style="position:absolute;left:452.00px;top:314.15px;font:bold 14px 'Liberation Sans';line-height:0;white-space:pre;color:#4a5ee8;letter-spacing:0.211px;">Latest</div>
<div style="position:absolute;left:504.00px;top:314.15px;font:bold 14px 'Liberation Sans';line-height:0;white-space:pre;color:#25804a;letter-spacing:-0.117px;">GP</div>
<div style="position:absolute;left:538.70px;top:314.15px;font:bold 14px 'Liberation Sans';line-height:0;white-space:pre;color:#25804a;letter-spacing:0.509px;">MD</div>
<div style="position:absolute;left:583.50px;top:314.15px;font:bold 14px 'Liberation Sans';line-height:0;white-space:pre;color:#4a5ee8;letter-spacing:-0.064px;">Priority</div>
<div style="position:absolute;left:635.60px;top:314.15px;font:bold 14px 'Liberation Sans';line-height:0;white-space:pre;color:#4a5ee8;letter-spacing:-0.128px;">Method</div>
<div style="position:absolute;left:701.00px;top:314.15px;font:bold 14px 'Liberation Sans';line-height:0;white-space:pre;color:#4a5ee8;letter-spacing:-0.119px;">When to Run</div>
<div style="position:absolute;left:855.80px;top:314.15px;font:bold 14px 'Liberation Sans';line-height:0;white-space:pre;color:#25804a;letter-spacing:0.406px;">ACT</div>
<div style="position:absolute;left:897.00px;top:314.15px;font:bold 14px 'Liberation Sans';line-height:0;white-space:pre;color:#25804a;letter-spacing:0.656px;">HAV</div>
<div style="position:absolute;left:938.00px;top:314.15px;font:bold 14px 'Liberation Sans';line-height:0;white-space:pre;color:#25804a;letter-spacing:0.589px;">MLT</div>
<div style="position:absolute;left:979.30px;top:314.15px;font:bold 14px 'Liberation Sans';line-height:0;white-space:pre;color:#25804a;letter-spacing:0.601px;">SEC</div>
<div style="position:absolute;left:1020.50px;top:314.15px;font:bold 14px 'Liberation Sans';line-height:0;white-space:pre;color:#25804a;letter-spacing:0.201px;">PRE</div>
<div style="position:absolute;left:1060.50px;top:314.15px;font:bold 14px 'Liberation Sans';line-height:0;white-space:pre;color:#25804a;letter-spacing:0.058px;">DOC</div>
<div style="position:absolute;left:1100.50px;top:314.15px;font:bold 14px 'Liberation Sans';line-height:0;white-space:pre;color:#25804a;letter-spacing:0.176px;">MON</div>
<div style="position:absolute;left:1144.80px;top:314.15px;font:bold 14px 'Liberation Sans';line-height:0;white-space:pre;color:#25804a;letter-spacing:0.582px;">TXT</div>
<div style="position:absolute;left:1184.30px;top:314.15px;font:bold 14px 'Liberation Sans';line-height:0;white-space:pre;color:#25804a;letter-spacing:0.219px;">SCI</div>
<div style="position:absolute;left:16px;top:323px;width:1192px;height:17px;background:#ffffff;"></div>
<div style="position:absolute;left:51px;top:323px;width:1px;height:17px;background:#a0a0a0;"></div>
<div style="position:absolute;left:82px;top:323px;width:1px;height:17px;background:#a0a0a0;"></div>
<div style="position:absolute;left:110px;top:323px;width:1px;height:17px;background:#a0a0a0;"></div>
<div style="position:absolute;left:311px;top:323px;width:1px;height:17px;background:#a0a0a0;"></div>
<div style="position:absolute;left:392px;top:323px;width:1px;height:17px;background:#a0a0a0;"></div>
<div style="position:absolute;left:443px;top:323px;width:1px;height:17px;background:#a0a0a0;"></div>
<div style="position:absolute;left:494px;top:323px;width:1px;height:17px;background:#a0a0a0;"></div>
<div style="position:absolute;left:530px;top:323px;width:1px;height:17px;background:#a0a0a0;"></div>
<div style="position:absolute;left:566px;top:323px;width:1px;height:17px;background:#a0a0a0;"></div>
<div style="position:absolute;left:632px;top:323px;width:1px;height:17px;background:#a0a0a0;"></div>
<div style="position:absolute;left:698px;top:323px;width:1px;height:17px;background:#a0a0a0;"></div>
<div style="position:absolute;left:849px;top:323px;width:1px;height:17px;background:#a0a0a0;"></div>
<div style="position:absolute;left:890px;top:323px;width:1px;height:17px;background:#a0a0a0;"></div>
<div style="position:absolute;left:931px;top:323px;width:1px;height:17px;background:#a0a0a0;"></div>
<div style="position:absolute;left:972px;top:323px;width:1px;height:17px;background:#a0a0a0;"></div>
<div style="position:absolute;left:1013px;top:323px;width:1px;height:17px;background:#a0a0a0;"></div>
<div style="position:absolute;left:1054px;top:323px;width:1px;height:17px;background:#a0a0a0;"></div>
<div style="position:absolute;left:1095px;top:323px;width:1px;height:17px;background:#a0a0a0;"></div>
<div style="position:absolute;left:1136px;top:323px;width:1px;height:17px;background:#a0a0a0;"></div>
<div style="position:absolute;left:1177px;top:323px;width:1px;height:17px;background:#a0a0a0;"></div>
<svg style="position:absolute;left:60px;top:326px;" width="13" height="13" viewBox="0 0 13 13"><defs><linearGradient id="g36" x1="0" y1="0" x2="1" y2="1"><stop offset="0" stop-color="#3ab0e0"/><stop offset="1" stop-color="#0a4a80"/></linearGradient></defs>
<rect x="0.5" y="0.5" width="12" height="12" fill="#fff" stroke="#808080"/><rect x="2.5" y="2.5" width="8" height="8" fill="url(#g36)" stroke="#0a2a50" stroke-width="1"/></svg>
<div style="position:absolute;left:113.30px;top:332.84px;font:normal 12px 'Liberation Sans';line-height:0;white-space:pre;color:#000;letter-spacing:0.659px;">group</div>
<div style="position:absolute;left:16px;top:340px;width:1192px;height:1px;background:#a0a0a0;"></div>
<div style="position:absolute;left:16px;top:341px;width:1192px;height:3px;background:#e8e8f8;"></div>
<div style="position:absolute;left:16px;top:344px;width:1192px;height:1px;background:#a0a0a0;"></div>
<div style="position:absolute;left:16px;top:345px;width:1192px;height:382px;overflow:hidden">
<div style="position:absolute;left:0px;top:-9px;width:35px;height:21px;background:#f0f0f0;"></div>
<div style="position:absolute;left:0px;top:12px;width:1191px;height:1px;background:#a0a0a0;"></div>
<div style="position:absolute;left:35px;top:-9px;width:1px;height:21px;background:#a0a0a0;"></div>
<div style="position:absolute;left:66px;top:-9px;width:1px;height:21px;background:#a0a0a0;"></div>
<div style="position:absolute;left:94px;top:-9px;width:1px;height:21px;background:#a0a0a0;"></div>
<div style="position:absolute;left:295px;top:-9px;width:1px;height:21px;background:#a0a0a0;"></div>
<div style="position:absolute;left:376px;top:-9px;width:1px;height:21px;background:#a0a0a0;"></div>
<div style="position:absolute;left:427px;top:-9px;width:1px;height:21px;background:#a0a0a0;"></div>
<div style="position:absolute;left:478px;top:-9px;width:1px;height:21px;background:#a0a0a0;"></div>
<div style="position:absolute;left:514px;top:-9px;width:1px;height:21px;background:#a0a0a0;"></div>
<div style="position:absolute;left:550px;top:-9px;width:1px;height:21px;background:#a0a0a0;"></div>
<div style="position:absolute;left:616px;top:-9px;width:1px;height:21px;background:#a0a0a0;"></div>
<div style="position:absolute;left:682px;top:-9px;width:1px;height:21px;background:#a0a0a0;"></div>
<div style="position:absolute;left:833px;top:-9px;width:1px;height:21px;background:#a0a0a0;"></div>
<div style="position:absolute;left:874px;top:-9px;width:1px;height:21px;background:#a0a0a0;"></div>
<div style="position:absolute;left:915px;top:-9px;width:1px;height:21px;background:#a0a0a0;"></div>
<div style="position:absolute;left:956px;top:-9px;width:1px;height:21px;background:#a0a0a0;"></div>
<div style="position:absolute;left:997px;top:-9px;width:1px;height:21px;background:#a0a0a0;"></div>
<div style="position:absolute;left:1038px;top:-9px;width:1px;height:21px;background:#a0a0a0;"></div>
<div style="position:absolute;left:1079px;top:-9px;width:1px;height:21px;background:#a0a0a0;"></div>
<div style="position:absolute;left:1120px;top:-9px;width:1px;height:21px;background:#a0a0a0;"></div>
<div style="position:absolute;left:1161px;top:-9px;width:1px;height:21px;background:#a0a0a0;"></div>
<div style="position:absolute;left:10.32px;top:2.84px;font:bold 12px 'Liberation Sans';line-height:0;white-space:pre;color:#000;">64</div>
<svg style="position:absolute;left:44px;top:-4px;" width="13" height="13" viewBox="0 0 13 13"><defs><linearGradient id="g37" x1="0" y1="0" x2="1" y2="1"><stop offset="0" stop-color="#d8d8d8"/><stop offset="1" stop-color="#fafafa"/></linearGradient></defs>
<rect x="0.5" y="0.5" width="12" height="12" fill="url(#g37)" stroke="#8a8a8a"/></svg>
<svg style="position:absolute;left:72px;top:-6px;" width="15" height="17" viewBox="0 0 15 17"><circle cx="2.9" cy="3.1" r="2.4" fill="#b87868"/><circle cx="12.1" cy="3.1" r="2.4" fill="#b87868"/><circle cx="2.5" cy="2.6" r="0.8" fill="#f0e0d8"/><circle cx="11.7" cy="2.6" r="0.8" fill="#f0e0d8"/>
<rect x="6.9" y="0.8" width="1.2" height="2" fill="#702818"/><rect x="6" y="0.3" width="3" height="1" fill="#702818"/>
<path d="M4.5 14 L2.5 16.5 M10.5 14 L12.5 16.5" stroke="#702010" stroke-width="1.1"/>
<circle cx="7.5" cy="9.6" r="6.4" fill="#6a98a8"/><circle cx="7.5" cy="9.6" r="4.9" fill="#fff"/><circle cx="8.5" cy="10.5" r="3" fill="#d8e8f8" opacity="0.6"/>
<path d="M7.5 9.8 V5.6 M7.5 9.8 L4.8 12.3" stroke="#000" stroke-width="1.1"/><path d="M7.5 9.7 H11" stroke="#f00000" stroke-width="1.2"/></svg>
<div style="position:absolute;left:97.00px;top:2.84px;font:bold 12px 'Liberation Sans';line-height:0;white-space:pre;color:#000;">GROUP_WITHIN_ENT</div>
<div style="position:absolute;left:298.00px;top:2.84px;font:bold 12px 'Liberation Sans';line-height:0;white-space:pre;color:#000;letter-spacing:-0.203px;">*BASE</div>
<div style="position:absolute;left:394.00px;top:2.84px;font:bold 12px 'Liberation Sans';line-height:0;white-space:pre;color:#000;letter-spacing:-0.141px;">14:30</div>
<svg style="position:absolute;left:489px;top:-6.5px;" width="15" height="16" viewBox="0 0 15 16"><g><circle cx="3.5" cy="1.6" r="1.6" fill="#2020ff"/>
<path d="M0 4.2 Q0 3.6 0.6 3.6 L6.4 3.6 Q7 3.6 7 4.2 L7 10 L5.6 10 L5.6 5 L5.2 5 L5.2 14.8 L6 15.6 L4 15.6 L3.7 14.8 L3.7 10.2 L3.3 10.2 L3.3 14.8 L3 15.6 L1 15.6 L1.8 14.8 L1.8 5 L1.4 5 L1.4 10 L0 10 Z" fill="#2020ff"/>
<path d="M1 15.3 H3 M4 15.3 H6" stroke="#000070" stroke-width="0.7"/></g><g transform="translate(8,0)"><circle cx="3.5" cy="1.6" r="1.6" fill="#2020ff"/>
<path d="M0 4.2 Q0 3.6 0.6 3.6 L6.4 3.6 Q7 3.6 7 4.2 L7 10 L5.6 10 L5.6 5 L5.2 5 L5.2 14.8 L6 15.6 L4 15.6 L3.7 14.8 L3.7 10.2 L3.3 10.2 L3.3 14.8 L3 15.6 L1 15.6 L1.8 14.8 L1.8 5 L1.4 5 L1.4 10 L0 10 Z" fill="#2020ff"/>
<path d="M1 15.3 H3 M4 15.3 H6" stroke="#000070" stroke-width="0.7"/></g></svg>
<div style="position:absolute;left:607.31px;top:2.84px;font:bold 12px 'Liberation Sans';line-height:0;white-space:pre;color:#000;">0</div>
<svg style="position:absolute;left:618px;top:-7px;" width="14" height="17" viewBox="0 0 14 17"><rect x="0.5" y="1.5" width="13" height="15" fill="#f0f2f8" stroke="#8a8e98" stroke-width="1"/>
<rect x="0.5" y="1.5" width="13" height="5.8" fill="#d83a3a"/><rect x="1" y="2" width="12" height="2" fill="#f06060" opacity="0.7"/>
<path d="M3.2 0 V3 M6 0 V3 M9 0 V3 M11.8 0 V3" stroke="#b0b0b0" stroke-width="0.8"/>
<text x="7" y="15.3" font-family="Liberation Sans" font-weight="bold" font-size="7.8" text-anchor="middle" fill="#111" textLength="12" lengthAdjust="spacingAndGlyphs">DOW</text></svg>
<div style="position:absolute;left:636.00px;top:1.84px;font:bold 12px 'Liberation Sans';line-height:0;white-space:pre;color:#000;letter-spacing:0.250px;">*DOW</div>
<div style="position:absolute;left:686.00px;top:2.84px;font:bold 12px 'Liberation Sans';line-height:0;white-space:pre;color:#000;">__MoTuWeThFr__</div>
<svg style="position:absolute;left:846px;top:-5px;" width="16" height="15" viewBox="0 0 16 15"><defs><linearGradient id="g38" x1="0" y1="0" x2="1" y2="1"><stop offset="0" stop-color="#a0ffa0"/><stop offset="0.4" stop-color="#10f010"/><stop offset="1" stop-color="#00c000"/></linearGradient></defs>
<path d="M0.3 8.5 L3.6 5 L6.6 8.3 L14.5 0.2 L15.6 2.8 L6.8 14.8 Z" fill="url(#g38)" stroke="#005a00" stroke-width="0.9" stroke-dasharray="1 0.6"/></svg>
<div style="position:absolute;left:0px;top:12px;width:35px;height:21px;background:#f0f0f0;"></div>
<div style="position:absolute;left:0px;top:33px;width:1191px;height:1px;background:#a0a0a0;"></div>
<div style="position:absolute;left:35px;top:12px;width:1px;height:21px;background:#a0a0a0;"></div>
<div style="position:absolute;left:66px;top:12px;width:1px;height:21px;background:#a0a0a0;"></div>
<div style="position:absolute;left:94px;top:12px;width:1px;height:21px;background:#a0a0a0;"></div>
<div style="position:absolute;left:295px;top:12px;width:1px;height:21px;background:#a0a0a0;"></div>
<div style="position:absolute;left:376px;top:12px;width:1px;height:21px;background:#a0a0a0;"></div>
<div style="position:absolute;left:427px;top:12px;width:1px;height:21px;background:#a0a0a0;"></div>
<div style="position:absolute;left:478px;top:12px;width:1px;height:21px;background:#a0a0a0;"></div>
<div style="position:absolute;left:514px;top:12px;width:1px;height:21px;background:#a0a0a0;"></div>
<div style="position:absolute;left:550px;top:12px;width:1px;height:21px;background:#a0a0a0;"></div>
<div style="position:absolute;left:616px;top:12px;width:1px;height:21px;background:#a0a0a0;"></div>
<div style="position:absolute;left:682px;top:12px;width:1px;height:21px;background:#a0a0a0;"></div>
<div style="position:absolute;left:833px;top:12px;width:1px;height:21px;background:#a0a0a0;"></div>
<div style="position:absolute;left:874px;top:12px;width:1px;height:21px;background:#a0a0a0;"></div>
<div style="position:absolute;left:915px;top:12px;width:1px;height:21px;background:#a0a0a0;"></div>
<div style="position:absolute;left:956px;top:12px;width:1px;height:21px;background:#a0a0a0;"></div>
<div style="position:absolute;left:997px;top:12px;width:1px;height:21px;background:#a0a0a0;"></div>
<div style="position:absolute;left:1038px;top:12px;width:1px;height:21px;background:#a0a0a0;"></div>
<div style="position:absolute;left:1079px;top:12px;width:1px;height:21px;background:#a0a0a0;"></div>
<div style="position:absolute;left:1120px;top:12px;width:1px;height:21px;background:#a0a0a0;"></div>
<div style="position:absolute;left:1161px;top:12px;width:1px;height:21px;background:#a0a0a0;"></div>
<div style="position:absolute;left:10.32px;top:23.84px;font:bold 12px 'Liberation Sans';line-height:0;white-space:pre;color:#000;">65</div>
<svg style="position:absolute;left:44px;top:17px;" width="13" height="13" viewBox="0 0 13 13"><defs><linearGradient id="g39" x1="0" y1="0" x2="1" y2="1"><stop offset="0" stop-color="#d8d8d8"/><stop offset="1" stop-color="#fafafa"/></linearGradient></defs>
<rect x="0.5" y="0.5" width="12" height="12" fill="url(#g39)" stroke="#8a8a8a"/></svg>
<svg style="position:absolute;left:72px;top:15px;" width="15" height="17" viewBox="0 0 15 17"><circle cx="2.9" cy="3.1" r="2.4" fill="#b87868"/><circle cx="12.1" cy="3.1" r="2.4" fill="#b87868"/><circle cx="2.5" cy="2.6" r="0.8" fill="#f0e0d8"/><circle cx="11.7" cy="2.6" r="0.8" fill="#f0e0d8"/>
<rect x="6.9" y="0.8" width="1.2" height="2" fill="#702818"/><rect x="6" y="0.3" width="3" height="1" fill="#702818"/>
<path d="M4.5 14 L2.5 16.5 M10.5 14 L12.5 16.5" stroke="#702010" stroke-width="1.1"/>
<circle cx="7.5" cy="9.6" r="6.4" fill="#6a98a8"/><circle cx="7.5" cy="9.6" r="4.9" fill="#fff"/><circle cx="8.5" cy="10.5" r="3" fill="#d8e8f8" opacity="0.6"/>
<path d="M7.5 9.8 V5.6 M7.5 9.8 L4.8 12.3" stroke="#000" stroke-width="1.1"/><path d="M7.5 9.7 H11" stroke="#f00000" stroke-width="1.2"/></svg>
<div style="position:absolute;left:97.00px;top:23.84px;font:bold 12px 'Liberation Sans';line-height:0;white-space:pre;color:#000;">KD_GROUP_PARENT</div>
<div style="position:absolute;left:298.00px;top:23.84px;font:bold 12px 'Liberation Sans';line-height:0;white-space:pre;color:#000;letter-spacing:-0.203px;">*BASE</div>
<div style="position:absolute;left:394.00px;top:23.84px;font:bold 12px 'Liberation Sans';line-height:0;white-space:pre;color:#000;letter-spacing:-0.141px;">15:00</div>
<svg style="position:absolute;left:489px;top:14.5px;" width="15" height="16" viewBox="0 0 15 16"><g><circle cx="3.5" cy="1.6" r="1.6" fill="#2020ff"/>
<path d="M0 4.2 Q0 3.6 0.6 3.6 L6.4 3.6 Q7 3.6 7 4.2 L7 10 L5.6 10 L5.6 5 L5.2 5 L5.2 14.8 L6 15.6 L4 15.6 L3.7 14.8 L3.7 10.2 L3.3 10.2 L3.3 14.8 L3 15.6 L1 15.6 L1.8 14.8 L1.8 5 L1.4 5 L1.4 10 L0 10 Z" fill="#2020ff"/>
<path d="M1 15.3 H3 M4 15.3 H6" stroke="#000070" stroke-width="0.7"/></g><g transform="translate(8,0)"><circle cx="3.5" cy="1.6" r="1.6" fill="#2020ff"/>
<path d="M0 4.2 Q0 3.6 0.6 3.6 L6.4 3.6 Q7 3.6 7 4.2 L7 10 L5.6 10 L5.6 5 L5.2 5 L5.2 14.8 L6 15.6 L4 15.6 L3.7 14.8 L3.7 10.2 L3.3 10.2 L3.3 14.8 L3 15.6 L1 15.6 L1.8 14.8 L1.8 5 L1.4 5 L1.4 10 L0 10 Z" fill="#2020ff"/>
<path d="M1 15.3 H3 M4 15.3 H6" stroke="#000070" stroke-width="0.7"/></g></svg>
<div style="position:absolute;left:607.31px;top:23.84px;font:bold 12px 'Liberation Sans';line-height:0;white-space:pre;color:#000;">0</div>
<svg style="position:absolute;left:618px;top:14px;" width="14" height="17" viewBox="0 0 14 17"><rect x="0.5" y="1.5" width="13" height="15" fill="#f0f2f8" stroke="#8a8e98" stroke-width="1"/>
<rect x="0.5" y="1.5" width="13" height="5.8" fill="#d83a3a"/><rect x="1" y="2" width="12" height="2" fill="#f06060" opacity="0.7"/>
<path d="M3.2 0 V3 M6 0 V3 M9 0 V3 M11.8 0 V3" stroke="#b0b0b0" stroke-width="0.8"/>
<text x="7" y="15.3" font-family="Liberation Sans" font-weight="bold" font-size="7.8" text-anchor="middle" fill="#111" textLength="12" lengthAdjust="spacingAndGlyphs">DOW</text></svg>
<div style="position:absolute;left:636.00px;top:22.84px;font:bold 12px 'Liberation Sans';line-height:0;white-space:pre;color:#000;letter-spacing:0.250px;">*DOW</div>
<div style="position:absolute;left:686.00px;top:23.84px;font:bold 12px 'Liberation Sans';line-height:0;white-space:pre;color:#000;letter-spacing:-0.183px;">SuMoTuWeThFrSa</div>
<svg style="position:absolute;left:846px;top:16px;" width="16" height="15" viewBox="0 0 16 15"><defs><linearGradient id="g40" x1="0" y1="0" x2="1" y2="1"><stop offset="0" stop-color="#a0ffa0"/><stop offset="0.4" stop-color="#10f010"/><stop offset="1" stop-color="#00c000"/></linearGradient></defs>
<path d="M0.3 8.5 L3.6 5 L6.6 8.3 L14.5 0.2 L15.6 2.8 L6.8 14.8 Z" fill="url(#g40)" stroke="#005a00" stroke-width="0.9" stroke-dasharray="1 0.6"/></svg>
<div style="position:absolute;left:0px;top:33px;width:35px;height:21px;background:#f0f0f0;"></div>
<div style="position:absolute;left:0px;top:54px;width:1191px;height:1px;background:#a0a0a0;"></div>
<div style="position:absolute;left:35px;top:33px;width:1px;height:21px;background:#a0a0a0;"></div>
<div style="position:absolute;left:66px;top:33px;width:1px;height:21px;background:#a0a0a0;"></div>
<div style="position:absolute;left:94px;top:33px;width:1px;height:21px;background:#a0a0a0;"></div>
<div style="position:absolute;left:295px;top:33px;width:1px;height:21px;background:#a0a0a0;"></div>
<div style="position:absolute;left:376px;top:33px;width:1px;height:21px;background:#a0a0a0;"></div>
<div style="position:absolute;left:427px;top:33px;width:1px;height:21px;background:#a0a0a0;"></div>
<div style="position:absolute;left:478px;top:33px;width:1px;height:21px;background:#a0a0a0;"></div>
<div style="position:absolute;left:514px;top:33px;width:1px;height:21px;background:#a0a0a0;"></div>
<div style="position:absolute;left:550px;top:33px;width:1px;height:21px;background:#a0a0a0;"></div>
<div style="position:absolute;left:616px;top:33px;width:1px;height:21px;background:#a0a0a0;"></div>
<div style="position:absolute;left:682px;top:33px;width:1px;height:21px;background:#a0a0a0;"></div>
<div style="position:absolute;left:833px;top:33px;width:1px;height:21px;background:#a0a0a0;"></div>
<div style="position:absolute;left:874px;top:33px;width:1px;height:21px;background:#a0a0a0;"></div>
<div style="position:absolute;left:915px;top:33px;width:1px;height:21px;background:#a0a0a0;"></div>
<div style="position:absolute;left:956px;top:33px;width:1px;height:21px;background:#a0a0a0;"></div>
<div style="position:absolute;left:997px;top:33px;width:1px;height:21px;background:#a0a0a0;"></div>
<div style="position:absolute;left:1038px;top:33px;width:1px;height:21px;background:#a0a0a0;"></div>
<div style="position:absolute;left:1079px;top:33px;width:1px;height:21px;background:#a0a0a0;"></div>
<div style="position:absolute;left:1120px;top:33px;width:1px;height:21px;background:#a0a0a0;"></div>
<div style="position:absolute;left:1161px;top:33px;width:1px;height:21px;background:#a0a0a0;"></div>
<div style="position:absolute;left:10.32px;top:44.84px;font:bold 12px 'Liberation Sans';line-height:0;white-space:pre;color:#000;">66</div>
<svg style="position:absolute;left:44px;top:38px;" width="13" height="13" viewBox="0 0 13 13"><defs><linearGradient id="g41" x1="0" y1="0" x2="1" y2="1"><stop offset="0" stop-color="#d8d8d8"/><stop offset="1" stop-color="#fafafa"/></linearGradient></defs>
<rect x="0.5" y="0.5" width="12" height="12" fill="url(#g41)" stroke="#8a8a8a"/></svg>
<svg style="position:absolute;left:72px;top:36px;" width="15" height="17" viewBox="0 0 15 17"><circle cx="2.9" cy="3.1" r="2.4" fill="#b87868"/><circle cx="12.1" cy="3.1" r="2.4" fill="#b87868"/><circle cx="2.5" cy="2.6" r="0.8" fill="#f0e0d8"/><circle cx="11.7" cy="2.6" r="0.8" fill="#f0e0d8"/>
<rect x="6.9" y="0.8" width="1.2" height="2" fill="#702818"/><rect x="6" y="0.3" width="3" height="1" fill="#702818"/>
<path d="M4.5 14 L2.5 16.5 M10.5 14 L12.5 16.5" stroke="#702010" stroke-width="1.1"/>
<circle cx="7.5" cy="9.6" r="6.4" fill="#6a98a8"/><circle cx="7.5" cy="9.6" r="4.9" fill="#fff"/><circle cx="8.5" cy="10.5" r="3" fill="#d8e8f8" opacity="0.6"/>
<path d="M7.5 9.8 V5.6 M7.5 9.8 L4.8 12.3" stroke="#000" stroke-width="1.1"/><path d="M7.5 9.7 H11" stroke="#f00000" stroke-width="1.2"/></svg>
<div style="position:absolute;left:97.00px;top:44.84px;font:bold 12px 'Liberation Sans';line-height:0;white-space:pre;color:#000;">GROUP_ISERIES-PARENT</div>
<div style="position:absolute;left:298.00px;top:44.84px;font:bold 12px 'Liberation Sans';line-height:0;white-space:pre;color:#000;letter-spacing:-0.203px;">*BASE</div>
<div style="position:absolute;left:394.00px;top:44.84px;font:bold 12px 'Liberation Sans';line-height:0;white-space:pre;color:#000;letter-spacing:-0.141px;">15:15</div>
<svg style="position:absolute;left:489px;top:35.5px;" width="15" height="16" viewBox="0 0 15 16"><g><circle cx="3.5" cy="1.6" r="1.6" fill="#2020ff"/>
<path d="M0 4.2 Q0 3.6 0.6 3.6 L6.4 3.6 Q7 3.6 7 4.2 L7 10 L5.6 10 L5.6 5 L5.2 5 L5.2 14.8 L6 15.6 L4 15.6 L3.7 14.8 L3.7 10.2 L3.3 10.2 L3.3 14.8 L3 15.6 L1 15.6 L1.8 14.8 L1.8 5 L1.4 5 L1.4 10 L0 10 Z" fill="#2020ff"/>
<path d="M1 15.3 H3 M4 15.3 H6" stroke="#000070" stroke-width="0.7"/></g><g transform="translate(8,0)"><circle cx="3.5" cy="1.6" r="1.6" fill="#2020ff"/>
<path d="M0 4.2 Q0 3.6 0.6 3.6 L6.4 3.6 Q7 3.6 7 4.2 L7 10 L5.6 10 L5.6 5 L5.2 5 L5.2 14.8 L6 15.6 L4 15.6 L3.7 14.8 L3.7 10.2 L3.3 10.2 L3.3 14.8 L3 15.6 L1 15.6 L1.8 14.8 L1.8 5 L1.4 5 L1.4 10 L0 10 Z" fill="#2020ff"/>
<path d="M1 15.3 H3 M4 15.3 H6" stroke="#000070" stroke-width="0.7"/></g></svg>
<div style="position:absolute;left:607.31px;top:44.84px;font:bold 12px 'Liberation Sans';line-height:0;white-space:pre;color:#000;">0</div>
<svg style="position:absolute;left:618px;top:35px;" width="14" height="17" viewBox="0 0 14 17"><rect x="0.5" y="1.5" width="13" height="15" fill="#f0f2f8" stroke="#8a8e98" stroke-width="1"/>
<rect x="0.5" y="1.5" width="13" height="5.8" fill="#d83a3a"/><rect x="1" y="2" width="12" height="2" fill="#f06060" opacity="0.7"/>
<path d="M3.2 0 V3 M6 0 V3 M9 0 V3 M11.8 0 V3" stroke="#b0b0b0" stroke-width="0.8"/>
<text x="7" y="15.3" font-family="Liberation Sans" font-weight="bold" font-size="7.8" text-anchor="middle" fill="#111" textLength="12" lengthAdjust="spacingAndGlyphs">DOW</text></svg>
<div style="position:absolute;left:636.00px;top:43.84px;font:bold 12px 'Liberation Sans';line-height:0;white-space:pre;color:#000;letter-spacing:0.250px;">*DOW</div>
<div style="position:absolute;left:686.00px;top:44.84px;font:bold 12px 'Liberation Sans';line-height:0;white-space:pre;color:#000;letter-spacing:-0.183px;">SuMoTuWeThFrSa</div>
<svg style="position:absolute;left:846px;top:37px;" width="16" height="15" viewBox="0 0 16 15"><defs><linearGradient id="g42" x1="0" y1="0" x2="1" y2="1"><stop offset="0" stop-color="#a0ffa0"/><stop offset="0.4" stop-color="#10f010"/><stop offset="1" stop-color="#00c000"/></linearGradient></defs>
<path d="M0.3 8.5 L3.6 5 L6.6 8.3 L14.5 0.2 L15.6 2.8 L6.8 14.8 Z" fill="url(#g42)" stroke="#005a00" stroke-width="0.9" stroke-dasharray="1 0.6"/></svg>
<div style="position:absolute;left:0px;top:54px;width:35px;height:21px;background:#f0f0f0;"></div>
<div style="position:absolute;left:0px;top:75px;width:1191px;height:1px;background:#a0a0a0;"></div>
<div style="position:absolute;left:35px;top:54px;width:1px;height:21px;background:#a0a0a0;"></div>
<div style="position:absolute;left:66px;top:54px;width:1px;height:21px;background:#a0a0a0;"></div>
<div style="position:absolute;left:94px;top:54px;width:1px;height:21px;background:#a0a0a0;"></div>
<div style="position:absolute;left:295px;top:54px;width:1px;height:21px;background:#a0a0a0;"></div>
<div style="position:absolute;left:376px;top:54px;width:1px;height:21px;background:#a0a0a0;"></div>
<div style="position:absolute;left:427px;top:54px;width:1px;height:21px;background:#a0a0a0;"></div>
<div style="position:absolute;left:478px;top:54px;width:1px;height:21px;background:#a0a0a0;"></div>
<div style="position:absolute;left:514px;top:54px;width:1px;height:21px;background:#a0a0a0;"></div>
<div style="position:absolute;left:550px;top:54px;width:1px;height:21px;background:#a0a0a0;"></div>
<div style="position:absolute;left:616px;top:54px;width:1px;height:21px;background:#a0a0a0;"></div>
<div style="position:absolute;left:682px;top:54px;width:1px;height:21px;background:#a0a0a0;"></div>
<div style="position:absolute;left:833px;top:54px;width:1px;height:21px;background:#a0a0a0;"></div>
<div style="position:absolute;left:874px;top:54px;width:1px;height:21px;background:#a0a0a0;"></div>
<div style="position:absolute;left:915px;top:54px;width:1px;height:21px;background:#a0a0a0;"></div>
<div style="position:absolute;left:956px;top:54px;width:1px;height:21px;background:#a0a0a0;"></div>
<div style="position:absolute;left:997px;top:54px;width:1px;height:21px;background:#a0a0a0;"></div>
<div style="position:absolute;left:1038px;top:54px;width:1px;height:21px;background:#a0a0a0;"></div>
<div style="position:absolute;left:1079px;top:54px;width:1px;height:21px;background:#a0a0a0;"></div>
<div style="position:absolute;left:1120px;top:54px;width:1px;height:21px;background:#a0a0a0;"></div>
<div style="position:absolute;left:1161px;top:54px;width:1px;height:21px;background:#a0a0a0;"></div>
<div style="position:absolute;left:10.32px;top:65.84px;font:bold 12px 'Liberation Sans';line-height:0;white-space:pre;color:#000;">67</div>
<svg style="position:absolute;left:44px;top:59px;" width="13" height="13" viewBox="0 0 13 13"><defs><linearGradient id="g43" x1="0" y1="0" x2="1" y2="1"><stop offset="0" stop-color="#d8d8d8"/><stop offset="1" stop-color="#fafafa"/></linearGradient></defs>
<rect x="0.5" y="0.5" width="12" height="12" fill="url(#g43)" stroke="#8a8a8a"/></svg>
<svg style="position:absolute;left:76px;top:56.5px;" width="7" height="16" viewBox="0 0 7 16"><circle cx="3.5" cy="1.6" r="1.6" fill="#2020ff"/>
<path d="M0 4.2 Q0 3.6 0.6 3.6 L6.4 3.6 Q7 3.6 7 4.2 L7 10 L5.6 10 L5.6 5 L5.2 5 L5.2 14.8 L6 15.6 L4 15.6 L3.7 14.8 L3.7 10.2 L3.3 10.2 L3.3 14.8 L3 15.6 L1 15.6 L1.8 14.8 L1.8 5 L1.4 5 L1.4 10 L0 10 Z" fill="#2020ff"/>
<path d="M1 15.3 H3 M4 15.3 H6" stroke="#000070" stroke-width="0.7"/></svg>
<div style="position:absolute;left:97.00px;top:65.84px;font:bold 12px 'Liberation Sans';line-height:0;white-space:pre;color:#000;">GROUP1</div>
<div style="position:absolute;left:298.00px;top:65.84px;font:bold 12px 'Liberation Sans';line-height:0;white-space:pre;color:#000;letter-spacing:-0.203px;">*BASE</div>
<div style="position:absolute;left:394.00px;top:65.84px;font:bold 12px 'Liberation Sans';line-height:0;white-space:pre;color:#000;letter-spacing:-0.141px;">15:15</div>
<div style="position:absolute;left:600.64px;top:65.84px;font:bold 12px 'Liberation Sans';line-height:0;white-space:pre;color:#000;">10</div>
<svg style="position:absolute;left:618px;top:56px;" width="14" height="17" viewBox="0 0 14 17"><rect x="0.5" y="1.5" width="13" height="15" fill="#f0f2f8" stroke="#8a8e98" stroke-width="1"/>
<rect x="0.5" y="1.5" width="13" height="5.8" fill="#d83a3a"/><rect x="1" y="2" width="12" height="2" fill="#f06060" opacity="0.7"/>
<path d="M3.2 0 V3 M6 0 V3 M9 0 V3 M11.8 0 V3" stroke="#b0b0b0" stroke-width="0.8"/>
<text x="7" y="15.3" font-family="Liberation Sans" font-weight="bold" font-size="7.8" text-anchor="middle" fill="#111" textLength="12" lengthAdjust="spacingAndGlyphs">DOW</text></svg>
<div style="position:absolute;left:636.00px;top:64.84px;font:bold 12px 'Liberation Sans';line-height:0;white-space:pre;color:#000;letter-spacing:0.250px;">*DOW</div>
<div style="position:absolute;left:686.00px;top:65.84px;font:bold 12px 'Liberation Sans';line-height:0;white-space:pre;color:#000;letter-spacing:-0.183px;">SuMoTuWeThFrSa</div>
<svg style="position:absolute;left:846px;top:58px;" width="16" height="15" viewBox="0 0 16 15"><defs><linearGradient id="g44" x1="0" y1="0" x2="1" y2="1"><stop offset="0" stop-color="#a0ffa0"/><stop offset="0.4" stop-color="#10f010"/><stop offset="1" stop-color="#00c000"/></linearGradient></defs>
<path d="M0.3 8.5 L3.6 5 L6.6 8.3 L14.5 0.2 L15.6 2.8 L6.8 14.8 Z" fill="url(#g44)" stroke="#005a00" stroke-width="0.9" stroke-dasharray="1 0.6"/></svg>
<svg style="position:absolute;left:1173px;top:57px;" width="16" height="14" viewBox="0 0 16 14"><rect x="1.8" y="2" width="14" height="11.5" fill="#888" opacity="0.7"/>
<rect x="0" y="0" width="14.5" height="12" fill="#f8f4e0" stroke="#c8c4a8" stroke-width="0.6"/>
<rect x="0.6" y="0.6" width="13.3" height="2.6" fill="#6a8af8"/><rect x="0.6" y="0.6" width="4" height="2.6" fill="#2a40e0"/>
<rect x="1" y="3.4" width="12" height="6.4" fill="#000"/><rect x="1.5" y="4.2" width="8" height="0.8" fill="#777"/><rect x="1.5" y="5.6" width="5" height="0.6" fill="#555"/></svg>
<div style="position:absolute;left:0px;top:75px;width:35px;height:21px;background:#f0f0f0;"></div>
<div style="position:absolute;left:0px;top:96px;width:1191px;height:1px;background:#a0a0a0;"></div>
<div style="position:absolute;left:35px;top:75px;width:1px;height:21px;background:#a0a0a0;"></div>
<div style="position:absolute;left:66px;top:75px;width:1px;height:21px;background:#a0a0a0;"></div>
<div style="position:absolute;left:94px;top:75px;width:1px;height:21px;background:#a0a0a0;"></div>
<div style="position:absolute;left:295px;top:75px;width:1px;height:21px;background:#a0a0a0;"></div>
<div style="position:absolute;left:376px;top:75px;width:1px;height:21px;background:#a0a0a0;"></div>
<div style="position:absolute;left:427px;top:75px;width:1px;height:21px;background:#a0a0a0;"></div>
<div style="position:absolute;left:478px;top:75px;width:1px;height:21px;background:#a0a0a0;"></div>
<div style="position:absolute;left:514px;top:75px;width:1px;height:21px;background:#a0a0a0;"></div>
<div style="position:absolute;left:550px;top:75px;width:1px;height:21px;background:#a0a0a0;"></div>
<div style="position:absolute;left:616px;top:75px;width:1px;height:21px;background:#a0a0a0;"></div>
<div style="position:absolute;left:682px;top:75px;width:1px;height:21px;background:#a0a0a0;"></div>
<div style="position:absolute;left:833px;top:75px;width:1px;height:21px;background:#a0a0a0;"></div>
<div style="position:absolute;left:874px;top:75px;width:1px;height:21px;background:#a0a0a0;"></div>
<div style="position:absolute;left:915px;top:75px;width:1px;height:21px;background:#a0a0a0;"></div>
<div style="position:absolute;left:956px;top:75px;width:1px;height:21px;background:#a0a0a0;"></div>
<div style="position:absolute;left:997px;top:75px;width:1px;height:21px;background:#a0a0a0;"></div>
<div style="position:absolute;left:1038px;top:75px;width:1px;height:21px;background:#a0a0a0;"></div>
<div style="position:absolute;left:1079px;top:75px;width:1px;height:21px;background:#a0a0a0;"></div>
<div style="position:absolute;left:1120px;top:75px;width:1px;height:21px;background:#a0a0a0;"></div>
<div style="position:absolute;left:1161px;top:75px;width:1px;height:21px;background:#a0a0a0;"></div>
<div style="position:absolute;left:10.32px;top:86.84px;font:bold 12px 'Liberation Sans';line-height:0;white-space:pre;color:#000;">68</div>
<svg style="position:absolute;left:44px;top:80px;" width="13" height="13" viewBox="0 0 13 13"><defs><linearGradient id="g45" x1="0" y1="0" x2="1" y2="1"><stop offset="0" stop-color="#d8d8d8"/><stop offset="1" stop-color="#fafafa"/></linearGradient></defs>
<rect x="0.5" y="0.5" width="12" height="12" fill="url(#g45)" stroke="#8a8a8a"/></svg>
<svg style="position:absolute;left:76px;top:77.5px;" width="7" height="16" viewBox="0 0 7 16"><circle cx="3.5" cy="1.6" r="1.6" fill="#2020ff"/>
<path d="M0 4.2 Q0 3.6 0.6 3.6 L6.4 3.6 Q7 3.6 7 4.2 L7 10 L5.6 10 L5.6 5 L5.2 5 L5.2 14.8 L6 15.6 L4 15.6 L3.7 14.8 L3.7 10.2 L3.3 10.2 L3.3 14.8 L3 15.6 L1 15.6 L1.8 14.8 L1.8 5 L1.4 5 L1.4 10 L0 10 Z" fill="#2020ff"/>
<path d="M1 15.3 H3 M4 15.3 H6" stroke="#000070" stroke-width="0.7"/></svg>
<div style="position:absolute;left:97.00px;top:86.84px;font:bold 12px 'Liberation Sans';line-height:0;white-space:pre;color:#000;">GROUP_CHILD_01D</div>
<div style="position:absolute;left:298.00px;top:86.84px;font:bold 12px 'Liberation Sans';line-height:0;white-space:pre;color:#000;letter-spacing:-0.203px;">*BASE</div>
<div style="position:absolute;left:394.00px;top:86.84px;font:bold 12px 'Liberation Sans';line-height:0;white-space:pre;color:#000;letter-spacing:-0.141px;">15:15</div>
<div style="position:absolute;left:600.64px;top:86.84px;font:bold 12px 'Liberation Sans';line-height:0;white-space:pre;color:#000;">30</div>
<svg style="position:absolute;left:618px;top:77px;" width="14" height="17" viewBox="0 0 14 17"><rect x="0.5" y="1.5" width="13" height="15" fill="#f0f2f8" stroke="#8a8e98" stroke-width="1"/>
<rect x="0.5" y="1.5" width="13" height="5.8" fill="#d83a3a"/><rect x="1" y="2" width="12" height="2" fill="#f06060" opacity="0.7"/>
<path d="M3.2 0 V3 M6 0 V3 M9 0 V3 M11.8 0 V3" stroke="#b0b0b0" stroke-width="0.8"/>
<text x="7" y="15.3" font-family="Liberation Sans" font-weight="bold" font-size="7.8" text-anchor="middle" fill="#111" textLength="12" lengthAdjust="spacingAndGlyphs">DOW</text></svg>
<div style="position:absolute;left:636.00px;top:85.84px;font:bold 12px 'Liberation Sans';line-height:0;white-space:pre;color:#000;letter-spacing:0.250px;">*DOW</div>
<div style="position:absolute;left:686.00px;top:86.84px;font:bold 12px 'Liberation Sans';line-height:0;white-space:pre;color:#000;letter-spacing:-0.183px;">SuMoTuWeThFrSa</div>
<svg style="position:absolute;left:846px;top:79px;" width="16" height="15" viewBox="0 0 16 15"><defs><linearGradient id="g46" x1="0" y1="0" x2="1" y2="1"><stop offset="0" stop-color="#a0ffa0"/><stop offset="0.4" stop-color="#10f010"/><stop offset="1" stop-color="#00c000"/></linearGradient></defs>
<path d="M0.3 8.5 L3.6 5 L6.6 8.3 L14.5 0.2 L15.6 2.8 L6.8 14.8 Z" fill="url(#g46)" stroke="#005a00" stroke-width="0.9" stroke-dasharray="1 0.6"/></svg>
<svg style="position:absolute;left:1173px;top:78px;" width="16" height="14" viewBox="0 0 16 14"><rect x="1.8" y="2" width="14" height="11.5" fill="#888" opacity="0.7"/>
<rect x="0" y="0" width="14.5" height="12" fill="#f8f4e0" stroke="#c8c4a8" stroke-width="0.6"/>
<rect x="0.6" y="0.6" width="13.3" height="2.6" fill="#6a8af8"/><rect x="0.6" y="0.6" width="4" height="2.6" fill="#2a40e0"/>
<rect x="1" y="3.4" width="12" height="6.4" fill="#000"/><rect x="1.5" y="4.2" width="8" height="0.8" fill="#777"/><rect x="1.5" y="5.6" width="5" height="0.6" fill="#555"/></svg>
<div style="position:absolute;left:0px;top:96px;width:35px;height:21px;background:#f0f0f0;"></div>
<div style="position:absolute;left:0px;top:117px;width:1191px;height:1px;background:#a0a0a0;"></div>
<div style="position:absolute;left:35px;top:96px;width:1px;height:21px;background:#a0a0a0;"></div>
<div style="position:absolute;left:66px;top:96px;width:1px;height:21px;background:#a0a0a0;"></div>
<div style="position:absolute;left:94px;top:96px;width:1px;height:21px;background:#a0a0a0;"></div>
<div style="position:absolute;left:295px;top:96px;width:1px;height:21px;background:#a0a0a0;"></div>
<div style="position:absolute;left:376px;top:96px;width:1px;height:21px;background:#a0a0a0;"></div>
<div style="position:absolute;left:427px;top:96px;width:1px;height:21px;background:#a0a0a0;"></div>
<div style="position:absolute;left:478px;top:96px;width:1px;height:21px;background:#a0a0a0;"></div>
<div style="position:absolute;left:514px;top:96px;width:1px;height:21px;background:#a0a0a0;"></div>
<div style="position:absolute;left:550px;top:96px;width:1px;height:21px;background:#a0a0a0;"></div>
<div style="position:absolute;left:616px;top:96px;width:1px;height:21px;background:#a0a0a0;"></div>
<div style="position:absolute;left:682px;top:96px;width:1px;height:21px;background:#a0a0a0;"></div>
<div style="position:absolute;left:833px;top:96px;width:1px;height:21px;background:#a0a0a0;"></div>
<div style="position:absolute;left:874px;top:96px;width:1px;height:21px;background:#a0a0a0;"></div>
<div style="position:absolute;left:915px;top:96px;width:1px;height:21px;background:#a0a0a0;"></div>
<div style="position:absolute;left:956px;top:96px;width:1px;height:21px;background:#a0a0a0;"></div>
<div style="position:absolute;left:997px;top:96px;width:1px;height:21px;background:#a0a0a0;"></div>
<div style="position:absolute;left:1038px;top:96px;width:1px;height:21px;background:#a0a0a0;"></div>
<div style="position:absolute;left:1079px;top:96px;width:1px;height:21px;background:#a0a0a0;"></div>
<div style="position:absolute;left:1120px;top:96px;width:1px;height:21px;background:#a0a0a0;"></div>
<div style="position:absolute;left:1161px;top:96px;width:1px;height:21px;background:#a0a0a0;"></div>
<div style="position:absolute;left:10.32px;top:107.84px;font:bold 12px 'Liberation Sans';line-height:0;white-space:pre;color:#000;">69</div>
<svg style="position:absolute;left:44px;top:101px;" width="13" height="13" viewBox="0 0 13 13"><defs><linearGradient id="g47" x1="0" y1="0" x2="1" y2="1"><stop offset="0" stop-color="#d8d8d8"/><stop offset="1" stop-color="#fafafa"/></linearGradient></defs>
<rect x="0.5" y="0.5" width="12" height="12" fill="url(#g47)" stroke="#8a8a8a"/></svg>
<svg style="position:absolute;left:76px;top:98.5px;" width="7" height="16" viewBox="0 0 7 16"><circle cx="3.5" cy="1.6" r="1.6" fill="#2020ff"/>
<path d="M0 4.2 Q0 3.6 0.6 3.6 L6.4 3.6 Q7 3.6 7 4.2 L7 10 L5.6 10 L5.6 5 L5.2 5 L5.2 14.8 L6 15.6 L4 15.6 L3.7 14.8 L3.7 10.2 L3.3 10.2 L3.3 14.8 L3 15.6 L1 15.6 L1.8 14.8 L1.8 5 L1.4 5 L1.4 10 L0 10 Z" fill="#2020ff"/>
<path d="M1 15.3 H3 M4 15.3 H6" stroke="#000070" stroke-width="0.7"/></svg>
<div style="position:absolute;left:97.00px;top:107.84px;font:bold 12px 'Liberation Sans';line-height:0;white-space:pre;color:#000;">KD_GROUP_CHILD_01D</div>
<div style="position:absolute;left:298.00px;top:107.84px;font:bold 12px 'Liberation Sans';line-height:0;white-space:pre;color:#000;letter-spacing:-0.203px;">*BASE</div>
<div style="position:absolute;left:394.00px;top:107.84px;font:bold 12px 'Liberation Sans';line-height:0;white-space:pre;color:#000;letter-spacing:-0.141px;">15:15</div>
<div style="position:absolute;left:600.64px;top:107.84px;font:bold 12px 'Liberation Sans';line-height:0;white-space:pre;color:#000;">30</div>
<svg style="position:absolute;left:618px;top:98px;" width="14" height="17" viewBox="0 0 14 17"><rect x="0.5" y="1.5" width="13" height="15" fill="#f0f2f8" stroke="#8a8e98" stroke-width="1"/>
<rect x="0.5" y="1.5" width="13" height="5.8" fill="#d83a3a"/><rect x="1" y="2" width="12" height="2" fill="#f06060" opacity="0.7"/>
<path d="M3.2 0 V3 M6 0 V3 M9 0 V3 M11.8 0 V3" stroke="#b0b0b0" stroke-width="0.8"/>
<text x="7" y="15.3" font-family="Liberation Sans" font-weight="bold" font-size="7.8" text-anchor="middle" fill="#111" textLength="12" lengthAdjust="spacingAndGlyphs">DOW</text></svg>
<div style="position:absolute;left:636.00px;top:106.84px;font:bold 12px 'Liberation Sans';line-height:0;white-space:pre;color:#000;letter-spacing:0.250px;">*DOW</div>
<div style="position:absolute;left:686.00px;top:107.84px;font:bold 12px 'Liberation Sans';line-height:0;white-space:pre;color:#000;letter-spacing:-0.183px;">SuMoTuWeThFrSa</div>
<svg style="position:absolute;left:846px;top:100px;" width="16" height="15" viewBox="0 0 16 15"><defs><linearGradient id="g48" x1="0" y1="0" x2="1" y2="1"><stop offset="0" stop-color="#a0ffa0"/><stop offset="0.4" stop-color="#10f010"/><stop offset="1" stop-color="#00c000"/></linearGradient></defs>
<path d="M0.3 8.5 L3.6 5 L6.6 8.3 L14.5 0.2 L15.6 2.8 L6.8 14.8 Z" fill="url(#g48)" stroke="#005a00" stroke-width="0.9" stroke-dasharray="1 0.6"/></svg>
<svg style="position:absolute;left:1173px;top:99px;" width="16" height="14" viewBox="0 0 16 14"><rect x="1.8" y="2" width="14" height="11.5" fill="#888" opacity="0.7"/>
<rect x="0" y="0" width="14.5" height="12" fill="#f8f4e0" stroke="#c8c4a8" stroke-width="0.6"/>
<rect x="0.6" y="0.6" width="13.3" height="2.6" fill="#6a8af8"/><rect x="0.6" y="0.6" width="4" height="2.6" fill="#2a40e0"/>
<rect x="1" y="3.4" width="12" height="6.4" fill="#000"/><rect x="1.5" y="4.2" width="8" height="0.8" fill="#777"/><rect x="1.5" y="5.6" width="5" height="0.6" fill="#555"/></svg>
<div style="position:absolute;left:0px;top:117px;width:35px;height:21px;background:#f0f0f0;"></div>
<div style="position:absolute;left:0px;top:138px;width:1191px;height:1px;background:#a0a0a0;"></div>
<div style="position:absolute;left:35px;top:117px;width:1px;height:21px;background:#a0a0a0;"></div>
<div style="position:absolute;left:66px;top:117px;width:1px;height:21px;background:#a0a0a0;"></div>
<div style="position:absolute;left:94px;top:117px;width:1px;height:21px;background:#a0a0a0;"></div>
<div style="position:absolute;left:295px;top:117px;width:1px;height:21px;background:#a0a0a0;"></div>
<div style="position:absolute;left:376px;top:117px;width:1px;height:21px;background:#a0a0a0;"></div>
<div style="position:absolute;left:427px;top:117px;width:1px;height:21px;background:#a0a0a0;"></div>
<div style="position:absolute;left:478px;top:117px;width:1px;height:21px;background:#a0a0a0;"></div>
<div style="position:absolute;left:514px;top:117px;width:1px;height:21px;background:#a0a0a0;"></div>
<div style="position:absolute;left:550px;top:117px;width:1px;height:21px;background:#a0a0a0;"></div>
<div style="position:absolute;left:616px;top:117px;width:1px;height:21px;background:#a0a0a0;"></div>
<div style="position:absolute;left:682px;top:117px;width:1px;height:21px;background:#a0a0a0;"></div>
<div style="position:absolute;left:833px;top:117px;width:1px;height:21px;background:#a0a0a0;"></div>
<div style="position:absolute;left:874px;top:117px;width:1px;height:21px;background:#a0a0a0;"></div>
<div style="position:absolute;left:915px;top:117px;width:1px;height:21px;background:#a0a0a0;"></div>
<div style="position:absolute;left:956px;top:117px;width:1px;height:21px;background:#a0a0a0;"></div>
<div style="position:absolute;left:997px;top:117px;width:1px;height:21px;background:#a0a0a0;"></div>
<div style="position:absolute;left:1038px;top:117px;width:1px;height:21px;background:#a0a0a0;"></div>
<div style="position:absolute;left:1079px;top:117px;width:1px;height:21px;background:#a0a0a0;"></div>
<div style="position:absolute;left:1120px;top:117px;width:1px;height:21px;background:#a0a0a0;"></div>
<div style="position:absolute;left:1161px;top:117px;width:1px;height:21px;background:#a0a0a0;"></div>
<div style="position:absolute;left:10.32px;top:128.84px;font:bold 12px 'Liberation Sans';line-height:0;white-space:pre;color:#000;">70</div>
<svg style="position:absolute;left:44px;top:122px;" width="13" height="13" viewBox="0 0 13 13"><defs><linearGradient id="g49" x1="0" y1="0" x2="1" y2="1"><stop offset="0" stop-color="#d8d8d8"/><stop offset="1" stop-color="#fafafa"/></linearGradient></defs>
<rect x="0.5" y="0.5" width="12" height="12" fill="url(#g49)" stroke="#8a8a8a"/></svg>
<svg style="position:absolute;left:76px;top:119.5px;" width="7" height="16" viewBox="0 0 7 16"><circle cx="3.5" cy="1.6" r="1.6" fill="#2020ff"/>
<path d="M0 4.2 Q0 3.6 0.6 3.6 L6.4 3.6 Q7 3.6 7 4.2 L7 10 L5.6 10 L5.6 5 L5.2 5 L5.2 14.8 L6 15.6 L4 15.6 L3.7 14.8 L3.7 10.2 L3.3 10.2 L3.3 14.8 L3 15.6 L1 15.6 L1.8 14.8 L1.8 5 L1.4 5 L1.4 10 L0 10 Z" fill="#2020ff"/>
<path d="M1 15.3 H3 M4 15.3 H6" stroke="#000070" stroke-width="0.7"/></svg>
<div style="position:absolute;left:97.00px;top:128.84px;font:bold 12px 'Liberation Sans';line-height:0;white-space:pre;color:#000;">GROUP3</div>
<div style="position:absolute;left:298.00px;top:128.84px;font:bold 12px 'Liberation Sans';line-height:0;white-space:pre;color:#000;letter-spacing:-0.203px;">*BASE</div>
<div style="position:absolute;left:394.00px;top:128.84px;font:bold 12px 'Liberation Sans';line-height:0;white-space:pre;color:#000;letter-spacing:-0.141px;">15:15</div>
<div style="position:absolute;left:600.64px;top:128.84px;font:bold 12px 'Liberation Sans';line-height:0;white-space:pre;color:#000;">40</div>
<svg style="position:absolute;left:618px;top:119px;" width="14" height="17" viewBox="0 0 14 17"><rect x="0.5" y="1.5" width="13" height="15" fill="#f0f2f8" stroke="#8a8e98" stroke-width="1"/>
<rect x="0.5" y="1.5" width="13" height="5.8" fill="#d83a3a"/><rect x="1" y="2" width="12" height="2" fill="#f06060" opacity="0.7"/>
<path d="M3.2 0 V3 M6 0 V3 M9 0 V3 M11.8 0 V3" stroke="#b0b0b0" stroke-width="0.8"/>
<text x="7" y="15.3" font-family="Liberation Sans" font-weight="bold" font-size="7.8" text-anchor="middle" fill="#111" textLength="12" lengthAdjust="spacingAndGlyphs">DOW</text></svg>
<div style="position:absolute;left:636.00px;top:127.84px;font:bold 12px 'Liberation Sans';line-height:0;white-space:pre;color:#000;letter-spacing:0.250px;">*DOW</div>
<div style="position:absolute;left:686.00px;top:128.84px;font:bold 12px 'Liberation Sans';line-height:0;white-space:pre;color:#000;letter-spacing:-0.183px;">SuMoTuWeThFrSa</div>
<svg style="position:absolute;left:846px;top:121px;" width="16" height="15" viewBox="0 0 16 15"><defs><linearGradient id="g50" x1="0" y1="0" x2="1" y2="1"><stop offset="0" stop-color="#a0ffa0"/><stop offset="0.4" stop-color="#10f010"/><stop offset="1" stop-color="#00c000"/></linearGradient></defs>
<path d="M0.3 8.5 L3.6 5 L6.6 8.3 L14.5 0.2 L15.6 2.8 L6.8 14.8 Z" fill="url(#g50)" stroke="#005a00" stroke-width="0.9" stroke-dasharray="1 0.6"/></svg>
<svg style="position:absolute;left:1173px;top:120px;" width="16" height="14" viewBox="0 0 16 14"><rect x="1.8" y="2" width="14" height="11.5" fill="#888" opacity="0.7"/>
<rect x="0" y="0" width="14.5" height="12" fill="#f8f4e0" stroke="#c8c4a8" stroke-width="0.6"/>
<rect x="0.6" y="0.6" width="13.3" height="2.6" fill="#6a8af8"/><rect x="0.6" y="0.6" width="4" height="2.6" fill="#2a40e0"/>
<rect x="1" y="3.4" width="12" height="6.4" fill="#000"/><rect x="1.5" y="4.2" width="8" height="0.8" fill="#777"/><rect x="1.5" y="5.6" width="5" height="0.6" fill="#555"/></svg>
<div style="position:absolute;left:0px;top:138px;width:35px;height:21px;background:#f0f0f0;"></div>
<div style="position:absolute;left:0px;top:159px;width:1191px;height:1px;background:#a0a0a0;"></div>
<div style="position:absolute;left:35px;top:138px;width:1px;height:21px;background:#a0a0a0;"></div>
<div style="position:absolute;left:66px;top:138px;width:1px;height:21px;background:#a0a0a0;"></div>
<div style="position:absolute;left:94px;top:138px;width:1px;height:21px;background:#a0a0a0;"></div>
<div style="position:absolute;left:295px;top:138px;width:1px;height:21px;background:#a0a0a0;"></div>
<div style="position:absolute;left:376px;top:138px;width:1px;height:21px;background:#a0a0a0;"></div>
<div style="position:absolute;left:427px;top:138px;width:1px;height:21px;background:#a0a0a0;"></div>
<div style="position:absolute;left:478px;top:138px;width:1px;height:21px;background:#a0a0a0;"></div>
<div style="position:absolute;left:514px;top:138px;width:1px;height:21px;background:#a0a0a0;"></div>
<div style="position:absolute;left:550px;top:138px;width:1px;height:21px;background:#a0a0a0;"></div>
<div style="position:absolute;left:616px;top:138px;width:1px;height:21px;background:#a0a0a0;"></div>
<div style="position:absolute;left:682px;top:138px;width:1px;height:21px;background:#a0a0a0;"></div>
<div style="position:absolute;left:833px;top:138px;width:1px;height:21px;background:#a0a0a0;"></div>
<div style="position:absolute;left:874px;top:138px;width:1px;height:21px;background:#a0a0a0;"></div>
<div style="position:absolute;left:915px;top:138px;width:1px;height:21px;background:#a0a0a0;"></div>
<div style="position:absolute;left:956px;top:138px;width:1px;height:21px;background:#a0a0a0;"></div>
<div style="position:absolute;left:997px;top:138px;width:1px;height:21px;background:#a0a0a0;"></div>
<div style="position:absolute;left:1038px;top:138px;width:1px;height:21px;background:#a0a0a0;"></div>
<div style="position:absolute;left:1079px;top:138px;width:1px;height:21px;background:#a0a0a0;"></div>
<div style="position:absolute;left:1120px;top:138px;width:1px;height:21px;background:#a0a0a0;"></div>
<div style="position:absolute;left:1161px;top:138px;width:1px;height:21px;background:#a0a0a0;"></div>
<div style="position:absolute;left:10.32px;top:149.84px;font:bold 12px 'Liberation Sans';line-height:0;white-space:pre;color:#000;">71</div>
<svg style="position:absolute;left:44px;top:143px;" width="13" height="13" viewBox="0 0 13 13"><defs><linearGradient id="g51" x1="0" y1="0" x2="1" y2="1"><stop offset="0" stop-color="#d8d8d8"/><stop offset="1" stop-color="#fafafa"/></linearGradient></defs>
<rect x="0.5" y="0.5" width="12" height="12" fill="url(#g51)" stroke="#8a8a8a"/></svg>
<svg style="position:absolute;left:76px;top:140.5px;" width="7" height="16" viewBox="0 0 7 16"><circle cx="3.5" cy="1.6" r="1.6" fill="#2020ff"/>
<path d="M0 4.2 Q0 3.6 0.6 3.6 L6.4 3.6 Q7 3.6 7 4.2 L7 10 L5.6 10 L5.6 5 L5.2 5 L5.2 14.8 L6 15.6 L4 15.6 L3.7 14.8 L3.7 10.2 L3.3 10.2 L3.3 14.8 L3 15.6 L1 15.6 L1.8 14.8 L1.8 5 L1.4 5 L1.4 10 L0 10 Z" fill="#2020ff"/>
<path d="M1 15.3 H3 M4 15.3 H6" stroke="#000070" stroke-width="0.7"/></svg>
<div style="position:absolute;left:97.00px;top:149.84px;font:bold 12px 'Liberation Sans';line-height:0;white-space:pre;color:#000;">GROUP_CHILD_04</div>
<div style="position:absolute;left:298.00px;top:149.84px;font:bold 12px 'Liberation Sans';line-height:0;white-space:pre;color:#000;letter-spacing:-0.203px;">*BASE</div>
<div style="position:absolute;left:394.00px;top:149.84px;font:bold 12px 'Liberation Sans';line-height:0;white-space:pre;color:#000;letter-spacing:-0.141px;">15:35</div>
<div style="position:absolute;left:607.31px;top:149.84px;font:bold 12px 'Liberation Sans';line-height:0;white-space:pre;color:#000;">0</div>
<svg style="position:absolute;left:618px;top:140px;" width="14" height="17" viewBox="0 0 14 17"><rect x="0.5" y="1.5" width="13" height="15" fill="#f0f2f8" stroke="#8a8e98" stroke-width="1"/>
<rect x="0.5" y="1.5" width="13" height="5.8" fill="#d83a3a"/><rect x="1" y="2" width="12" height="2" fill="#f06060" opacity="0.7"/>
<path d="M3.2 0 V3 M6 0 V3 M9 0 V3 M11.8 0 V3" stroke="#b0b0b0" stroke-width="0.8"/>
<text x="7" y="15.3" font-family="Liberation Sans" font-weight="bold" font-size="7.8" text-anchor="middle" fill="#111" textLength="12" lengthAdjust="spacingAndGlyphs">DOW</text></svg>
<div style="position:absolute;left:636.00px;top:148.84px;font:bold 12px 'Liberation Sans';line-height:0;white-space:pre;color:#000;letter-spacing:0.250px;">*DOW</div>
<div style="position:absolute;left:686.00px;top:149.84px;font:bold 12px 'Liberation Sans';line-height:0;white-space:pre;color:#000;letter-spacing:-0.183px;">SuMoTuWeThFrSa</div>
<svg style="position:absolute;left:846px;top:142px;" width="16" height="15" viewBox="0 0 16 15"><defs><linearGradient id="g52" x1="0" y1="0" x2="1" y2="1"><stop offset="0" stop-color="#a0ffa0"/><stop offset="0.4" stop-color="#10f010"/><stop offset="1" stop-color="#00c000"/></linearGradient></defs>
<path d="M0.3 8.5 L3.6 5 L6.6 8.3 L14.5 0.2 L15.6 2.8 L6.8 14.8 Z" fill="url(#g52)" stroke="#005a00" stroke-width="0.9" stroke-dasharray="1 0.6"/></svg>
<svg style="position:absolute;left:889px;top:140.5px;" width="7" height="16" viewBox="0 0 7 16"><circle cx="3.5" cy="1.6" r="1.6" fill="#f09000"/>
<path d="M0 4.2 Q0 3.6 0.6 3.6 L6.4 3.6 Q7 3.6 7 4.2 L7 10 L5.6 10 L5.6 5 L5.2 5 L5.2 14.8 L6 15.6 L4 15.6 L3.7 14.8 L3.7 10.2 L3.3 10.2 L3.3 14.8 L3 15.6 L1 15.6 L1.8 14.8 L1.8 5 L1.4 5 L1.4 10 L0 10 Z" fill="#f09000"/>
<path d="M1 15.3 H3 M4 15.3 H6" stroke="#000070" stroke-width="0.7"/></svg>
<svg style="position:absolute;left:1173px;top:141px;" width="16" height="14" viewBox="0 0 16 14"><rect x="1.8" y="2" width="14" height="11.5" fill="#888" opacity="0.7"/>
<rect x="0" y="0" width="14.5" height="12" fill="#f8f4e0" stroke="#c8c4a8" stroke-width="0.6"/>
<rect x="0.6" y="0.6" width="13.3" height="2.6" fill="#6a8af8"/><rect x="0.6" y="0.6" width="4" height="2.6" fill="#2a40e0"/>
<rect x="1" y="3.4" width="12" height="6.4" fill="#000"/><rect x="1.5" y="4.2" width="8" height="0.8" fill="#777"/><rect x="1.5" y="5.6" width="5" height="0.6" fill="#555"/></svg>
<div style="position:absolute;left:0px;top:159px;width:35px;height:21px;background:#f0f0f0;"></div>
<div style="position:absolute;left:0px;top:180px;width:1191px;height:1px;background:#a0a0a0;"></div>
<div style="position:absolute;left:35px;top:159px;width:1px;height:21px;background:#a0a0a0;"></div>
<div style="position:absolute;left:66px;top:159px;width:1px;height:21px;background:#a0a0a0;"></div>
<div style="position:absolute;left:94px;top:159px;width:1px;height:21px;background:#a0a0a0;"></div>
<div style="position:absolute;left:295px;top:159px;width:1px;height:21px;background:#a0a0a0;"></div>
<div style="position:absolute;left:376px;top:159px;width:1px;height:21px;background:#a0a0a0;"></div>
<div style="position:absolute;left:427px;top:159px;width:1px;height:21px;background:#a0a0a0;"></div>
<div style="position:absolute;left:478px;top:159px;width:1px;height:21px;background:#a0a0a0;"></div>
<div style="position:absolute;left:514px;top:159px;width:1px;height:21px;background:#a0a0a0;"></div>
<div style="position:absolute;left:550px;top:159px;width:1px;height:21px;background:#a0a0a0;"></div>
<div style="position:absolute;left:616px;top:159px;width:1px;height:21px;background:#a0a0a0;"></div>
<div style="position:absolute;left:682px;top:159px;width:1px;height:21px;background:#a0a0a0;"></div>
<div style="position:absolute;left:833px;top:159px;width:1px;height:21px;background:#a0a0a0;"></div>
<div style="position:absolute;left:874px;top:159px;width:1px;height:21px;background:#a0a0a0;"></div>
<div style="position:absolute;left:915px;top:159px;width:1px;height:21px;background:#a0a0a0;"></div>
<div style="position:absolute;left:956px;top:159px;width:1px;height:21px;background:#a0a0a0;"></div>
<div style="position:absolute;left:997px;top:159px;width:1px;height:21px;background:#a0a0a0;"></div>
<div style="position:absolute;left:1038px;top:159px;width:1px;height:21px;background:#a0a0a0;"></div>
<div style="position:absolute;left:1079px;top:159px;width:1px;height:21px;background:#a0a0a0;"></div>
<div style="position:absolute;left:1120px;top:159px;width:1px;height:21px;background:#a0a0a0;"></div>
<div style="position:absolute;left:1161px;top:159px;width:1px;height:21px;background:#a0a0a0;"></div>
<div style="position:absolute;left:10.32px;top:170.84px;font:bold 12px 'Liberation Sans';line-height:0;white-space:pre;color:#000;">72</div>
<svg style="position:absolute;left:1173px;top:162px;" width="16" height="14" viewBox="0 0 16 14"><rect x="1.8" y="2" width="14" height="11.5" fill="#888" opacity="0.7"/>
<rect x="0" y="0" width="14.5" height="12" fill="#f8f4e0" stroke="#c8c4a8" stroke-width="0.6"/>
<rect x="0.6" y="0.6" width="13.3" height="2.6" fill="#6a8af8"/><rect x="0.6" y="0.6" width="4" height="2.6" fill="#2a40e0"/>
<rect x="1" y="3.4" width="12" height="6.4" fill="#000"/><rect x="1.5" y="4.2" width="8" height="0.8" fill="#777"/><rect x="1.5" y="5.6" width="5" height="0.6" fill="#555"/></svg>
<div style="position:absolute;left:0px;top:180px;width:35px;height:21px;background:#f0f0f0;"></div>
<div style="position:absolute;left:0px;top:201px;width:1191px;height:1px;background:#a0a0a0;"></div>
<div style="position:absolute;left:35px;top:180px;width:1px;height:21px;background:#a0a0a0;"></div>
<div style="position:absolute;left:66px;top:180px;width:1px;height:21px;background:#a0a0a0;"></div>
<div style="position:absolute;left:94px;top:180px;width:1px;height:21px;background:#a0a0a0;"></div>
<div style="position:absolute;left:295px;top:180px;width:1px;height:21px;background:#a0a0a0;"></div>
<div style="position:absolute;left:376px;top:180px;width:1px;height:21px;background:#a0a0a0;"></div>
<div style="position:absolute;left:427px;top:180px;width:1px;height:21px;background:#a0a0a0;"></div>
<div style="position:absolute;left:478px;top:180px;width:1px;height:21px;background:#a0a0a0;"></div>
<div style="position:absolute;left:514px;top:180px;width:1px;height:21px;background:#a0a0a0;"></div>
<div style="position:absolute;left:550px;top:180px;width:1px;height:21px;background:#a0a0a0;"></div>
<div style="position:absolute;left:616px;top:180px;width:1px;height:21px;background:#a0a0a0;"></div>
<div style="position:absolute;left:682px;top:180px;width:1px;height:21px;background:#a0a0a0;"></div>
<div style="position:absolute;left:833px;top:180px;width:1px;height:21px;background:#a0a0a0;"></div>
<div style="position:absolute;left:874px;top:180px;width:1px;height:21px;background:#a0a0a0;"></div>
<div style="position:absolute;left:915px;top:180px;width:1px;height:21px;background:#a0a0a0;"></div>
<div style="position:absolute;left:956px;top:180px;width:1px;height:21px;background:#a0a0a0;"></div>
<div style="position:absolute;left:997px;top:180px;width:1px;height:21px;background:#a0a0a0;"></div>
<div style="position:absolute;left:1038px;top:180px;width:1px;height:21px;background:#a0a0a0;"></div>
<div style="position:absolute;left:1079px;top:180px;width:1px;height:21px;background:#a0a0a0;"></div>
<div style="position:absolute;left:1120px;top:180px;width:1px;height:21px;background:#a0a0a0;"></div>
<div style="position:absolute;left:1161px;top:180px;width:1px;height:21px;background:#a0a0a0;"></div>
<div style="position:absolute;left:10.32px;top:191.84px;font:bold 12px 'Liberation Sans';line-height:0;white-space:pre;color:#000;">73</div>
<svg style="position:absolute;left:1173px;top:183px;" width="16" height="14" viewBox="0 0 16 14"><rect x="1.8" y="2" width="14" height="11.5" fill="#888" opacity="0.7"/>
<rect x="0" y="0" width="14.5" height="12" fill="#f8f4e0" stroke="#c8c4a8" stroke-width="0.6"/>
<rect x="0.6" y="0.6" width="13.3" height="2.6" fill="#6a8af8"/><rect x="0.6" y="0.6" width="4" height="2.6" fill="#2a40e0"/>
<rect x="1" y="3.4" width="12" height="6.4" fill="#000"/><rect x="1.5" y="4.2" width="8" height="0.8" fill="#777"/><rect x="1.5" y="5.6" width="5" height="0.6" fill="#555"/></svg>
<div style="position:absolute;left:0px;top:201px;width:35px;height:21px;background:#f0f0f0;"></div>
<div style="position:absolute;left:0px;top:222px;width:1191px;height:1px;background:#a0a0a0;"></div>
<div style="position:absolute;left:35px;top:201px;width:1px;height:21px;background:#a0a0a0;"></div>
<div style="position:absolute;left:66px;top:201px;width:1px;height:21px;background:#a0a0a0;"></div>
<div style="position:absolute;left:94px;top:201px;width:1px;height:21px;background:#a0a0a0;"></div>
<div style="position:absolute;left:295px;top:201px;width:1px;height:21px;background:#a0a0a0;"></div>
<div style="position:absolute;left:376px;top:201px;width:1px;height:21px;background:#a0a0a0;"></div>
<div style="position:absolute;left:427px;top:201px;width:1px;height:21px;background:#a0a0a0;"></div>
<div style="position:absolute;left:478px;top:201px;width:1px;height:21px;background:#a0a0a0;"></div>
<div style="position:absolute;left:514px;top:201px;width:1px;height:21px;background:#a0a0a0;"></div>
<div style="position:absolute;left:550px;top:201px;width:1px;height:21px;background:#a0a0a0;"></div>
<div style="position:absolute;left:616px;top:201px;width:1px;height:21px;background:#a0a0a0;"></div>
<div style="position:absolute;left:682px;top:201px;width:1px;height:21px;background:#a0a0a0;"></div>
<div style="position:absolute;left:833px;top:201px;width:1px;height:21px;background:#a0a0a0;"></div>
<div style="position:absolute;left:874px;top:201px;width:1px;height:21px;background:#a0a0a0;"></div>
<div style="position:absolute;left:915px;top:201px;width:1px;height:21px;background:#a0a0a0;"></div>
<div style="position:absolute;left:956px;top:201px;width:1px;height:21px;background:#a0a0a0;"></div>
<div style="position:absolute;left:997px;top:201px;width:1px;height:21px;background:#a0a0a0;"></div>
<div style="position:absolute;left:1038px;top:201px;width:1px;height:21px;background:#a0a0a0;"></div>
<div style="position:absolute;left:1079px;top:201px;width:1px;height:21px;background:#a0a0a0;"></div>
<div style="position:absolute;left:1120px;top:201px;width:1px;height:21px;background:#a0a0a0;"></div>
<div style="position:absolute;left:1161px;top:201px;width:1px;height:21px;background:#a0a0a0;"></div>
<div style="position:absolute;left:10.32px;top:212.84px;font:bold 12px 'Liberation Sans';line-height:0;white-space:pre;color:#000;">74</div>
<svg style="position:absolute;left:1173px;top:204px;" width="16" height="14" viewBox="0 0 16 14"><rect x="1.8" y="2" width="14" height="11.5" fill="#888" opacity="0.7"/>
<rect x="0" y="0" width="14.5" height="12" fill="#f8f4e0" stroke="#c8c4a8" stroke-width="0.6"/>
<rect x="0.6" y="0.6" width="13.3" height="2.6" fill="#6a8af8"/><rect x="0.6" y="0.6" width="4" height="2.6" fill="#2a40e0"/>
<rect x="1" y="3.4" width="12" height="6.4" fill="#000"/><rect x="1.5" y="4.2" width="8" height="0.8" fill="#777"/><rect x="1.5" y="5.6" width="5" height="0.6" fill="#555"/></svg>
<div style="position:absolute;left:0px;top:222px;width:35px;height:21px;background:#f0f0f0;"></div>
<div style="position:absolute;left:0px;top:243px;width:1191px;height:1px;background:#a0a0a0;"></div>
<div style="position:absolute;left:35px;top:222px;width:1px;height:21px;background:#a0a0a0;"></div>
<div style="position:absolute;left:66px;top:222px;width:1px;height:21px;background:#a0a0a0;"></div>
<div style="position:absolute;left:94px;top:222px;width:1px;height:21px;background:#a0a0a0;"></div>
<div style="position:absolute;left:295px;top:222px;width:1px;height:21px;background:#a0a0a0;"></div>
<div style="position:absolute;left:376px;top:222px;width:1px;height:21px;background:#a0a0a0;"></div>
<div style="position:absolute;left:427px;top:222px;width:1px;height:21px;background:#a0a0a0;"></div>
<div style="position:absolute;left:478px;top:222px;width:1px;height:21px;background:#a0a0a0;"></div>
<div style="position:absolute;left:514px;top:222px;width:1px;height:21px;background:#a0a0a0;"></div>
<div style="position:absolute;left:550px;top:222px;width:1px;height:21px;background:#a0a0a0;"></div>
<div style="position:absolute;left:616px;top:222px;width:1px;height:21px;background:#a0a0a0;"></div>
<div style="position:absolute;left:682px;top:222px;width:1px;height:21px;background:#a0a0a0;"></div>
<div style="position:absolute;left:833px;top:222px;width:1px;height:21px;background:#a0a0a0;"></div>
<div style="position:absolute;left:874px;top:222px;width:1px;height:21px;background:#a0a0a0;"></div>
<div style="position:absolute;left:915px;top:222px;width:1px;height:21px;background:#a0a0a0;"></div>
<div style="position:absolute;left:956px;top:222px;width:1px;height:21px;background:#a0a0a0;"></div>
<div style="position:absolute;left:997px;top:222px;width:1px;height:21px;background:#a0a0a0;"></div>
<div style="position:absolute;left:1038px;top:222px;width:1px;height:21px;background:#a0a0a0;"></div>
<div style="position:absolute;left:1079px;top:222px;width:1px;height:21px;background:#a0a0a0;"></div>
<div style="position:absolute;left:1120px;top:222px;width:1px;height:21px;background:#a0a0a0;"></div>
<div style="position:absolute;left:1161px;top:222px;width:1px;height:21px;background:#a0a0a0;"></div>
<div style="position:absolute;left:10.32px;top:233.84px;font:bold 12px 'Liberation Sans';line-height:0;white-space:pre;color:#000;">75</div>
<svg style="position:absolute;left:1173px;top:225px;" width="16" height="14" viewBox="0 0 16 14"><rect x="1.8" y="2" width="14" height="11.5" fill="#888" opacity="0.7"/>
<rect x="0" y="0" width="14.5" height="12" fill="#f8f4e0" stroke="#c8c4a8" stroke-width="0.6"/>
<rect x="0.6" y="0.6" width="13.3" height="2.6" fill="#6a8af8"/><rect x="0.6" y="0.6" width="4" height="2.6" fill="#2a40e0"/>
<rect x="1" y="3.4" width="12" height="6.4" fill="#000"/><rect x="1.5" y="4.2" width="8" height="0.8" fill="#777"/><rect x="1.5" y="5.6" width="5" height="0.6" fill="#555"/></svg>
<div style="position:absolute;left:0px;top:243px;width:35px;height:21px;background:#f0f0f0;"></div>
<div style="position:absolute;left:0px;top:264px;width:1191px;height:1px;background:#a0a0a0;"></div>
<div style="position:absolute;left:35px;top:243px;width:1px;height:21px;background:#a0a0a0;"></div>
<div style="position:absolute;left:66px;top:243px;width:1px;height:21px;background:#a0a0a0;"></div>
<div style="position:absolute;left:94px;top:243px;width:1px;height:21px;background:#a0a0a0;"></div>
<div style="position:absolute;left:295px;top:243px;width:1px;height:21px;background:#a0a0a0;"></div>
<div style="position:absolute;left:376px;top:243px;width:1px;height:21px;background:#a0a0a0;"></div>
<div style="position:absolute;left:427px;top:243px;width:1px;height:21px;background:#a0a0a0;"></div>
<div style="position:absolute;left:478px;top:243px;width:1px;height:21px;background:#a0a0a0;"></div>
<div style="position:absolute;left:514px;top:243px;width:1px;height:21px;background:#a0a0a0;"></div>
<div style="position:absolute;left:550px;top:243px;width:1px;height:21px;background:#a0a0a0;"></div>
<div style="position:absolute;left:616px;top:243px;width:1px;height:21px;background:#a0a0a0;"></div>
<div style="position:absolute;left:682px;top:243px;width:1px;height:21px;background:#a0a0a0;"></div>
<div style="position:absolute;left:833px;top:243px;width:1px;height:21px;background:#a0a0a0;"></div>
<div style="position:absolute;left:874px;top:243px;width:1px;height:21px;background:#a0a0a0;"></div>
<div style="position:absolute;left:915px;top:243px;width:1px;height:21px;background:#a0a0a0;"></div>
<div style="position:absolute;left:956px;top:243px;width:1px;height:21px;background:#a0a0a0;"></div>
<div style="position:absolute;left:997px;top:243px;width:1px;height:21px;background:#a0a0a0;"></div>
<div style="position:absolute;left:1038px;top:243px;width:1px;height:21px;background:#a0a0a0;"></div>
<div style="position:absolute;left:1079px;top:243px;width:1px;height:21px;background:#a0a0a0;"></div>
<div style="position:absolute;left:1120px;top:243px;width:1px;height:21px;background:#a0a0a0;"></div>
<div style="position:absolute;left:1161px;top:243px;width:1px;height:21px;background:#a0a0a0;"></div>
<div style="position:absolute;left:10.32px;top:254.84px;font:bold 12px 'Liberation Sans';line-height:0;white-space:pre;color:#000;">76</div>
<div style="position:absolute;left:0px;top:264px;width:35px;height:21px;background:#f0f0f0;"></div>
<div style="position:absolute;left:0px;top:285px;width:1191px;height:1px;background:#a0a0a0;"></div>
<div style="position:absolute;left:35px;top:264px;width:1px;height:21px;background:#a0a0a0;"></div>
<div style="position:absolute;left:66px;top:264px;width:1px;height:21px;background:#a0a0a0;"></div>
<div style="position:absolute;left:94px;top:264px;width:1px;height:21px;background:#a0a0a0;"></div>
<div style="position:absolute;left:295px;top:264px;width:1px;height:21px;background:#a0a0a0;"></div>
<div style="position:absolute;left:376px;top:264px;width:1px;height:21px;background:#a0a0a0;"></div>
<div style="position:absolute;left:427px;top:264px;width:1px;height:21px;background:#a0a0a0;"></div>
<div style="position:absolute;left:478px;top:264px;width:1px;height:21px;background:#a0a0a0;"></div>
<div style="position:absolute;left:514px;top:264px;width:1px;height:21px;background:#a0a0a0;"></div>
<div style="position:absolute;left:550px;top:264px;width:1px;height:21px;background:#a0a0a0;"></div>
<div style="position:absolute;left:616px;top:264px;width:1px;height:21px;background:#a0a0a0;"></div>
<div style="position:absolute;left:682px;top:264px;width:1px;height:21px;background:#a0a0a0;"></div>
<div style="position:absolute;left:833px;top:264px;width:1px;height:21px;background:#a0a0a0;"></div>
<div style="position:absolute;left:874px;top:264px;width:1px;height:21px;background:#a0a0a0;"></div>
<div style="position:absolute;left:915px;top:264px;width:1px;height:21px;background:#a0a0a0;"></div>
<div style="position:absolute;left:956px;top:264px;width:1px;height:21px;background:#a0a0a0;"></div>
<div style="position:absolute;left:997px;top:264px;width:1px;height:21px;background:#a0a0a0;"></div>
<div style="position:absolute;left:1038px;top:264px;width:1px;height:21px;background:#a0a0a0;"></div>
<div style="position:absolute;left:1079px;top:264px;width:1px;height:21px;background:#a0a0a0;"></div>
<div style="position:absolute;left:1120px;top:264px;width:1px;height:21px;background:#a0a0a0;"></div>
<div style="position:absolute;left:1161px;top:264px;width:1px;height:21px;background:#a0a0a0;"></div>
<div style="position:absolute;left:10.32px;top:275.84px;font:bold 12px 'Liberation Sans';line-height:0;white-space:pre;color:#000;">77</div>
<div style="position:absolute;left:0px;top:285px;width:35px;height:21px;background:#f0f0f0;"></div>
<div style="position:absolute;left:0px;top:306px;width:1191px;height:1px;background:#a0a0a0;"></div>
<div style="position:absolute;left:35px;top:285px;width:1px;height:21px;background:#a0a0a0;"></div>
<div style="position:absolute;left:66px;top:285px;width:1px;height:21px;background:#a0a0a0;"></div>
<div style="position:absolute;left:94px;top:285px;width:1px;height:21px;background:#a0a0a0;"></div>
<div style="position:absolute;left:295px;top:285px;width:1px;height:21px;background:#a0a0a0;"></div>
<div style="position:absolute;left:376px;top:285px;width:1px;height:21px;background:#a0a0a0;"></div>
<div style="position:absolute;left:427px;top:285px;width:1px;height:21px;background:#a0a0a0;"></div>
<div style="position:absolute;left:478px;top:285px;width:1px;height:21px;background:#a0a0a0;"></div>
<div style="position:absolute;left:514px;top:285px;width:1px;height:21px;background:#a0a0a0;"></div>
<div style="position:absolute;left:550px;top:285px;width:1px;height:21px;background:#a0a0a0;"></div>
<div style="position:absolute;left:616px;top:285px;width:1px;height:21px;background:#a0a0a0;"></div>
<div style="position:absolute;left:682px;top:285px;width:1px;height:21px;background:#a0a0a0;"></div>
<div style="position:absolute;left:833px;top:285px;width:1px;height:21px;background:#a0a0a0;"></div>
<div style="position:absolute;left:874px;top:285px;width:1px;height:21px;background:#a0a0a0;"></div>
<div style="position:absolute;left:915px;top:285px;width:1px;height:21px;background:#a0a0a0;"></div>
<div style="position:absolute;left:956px;top:285px;width:1px;height:21px;background:#a0a0a0;"></div>
<div style="position:absolute;left:997px;top:285px;width:1px;height:21px;background:#a0a0a0;"></div>
<div style="position:absolute;left:1038px;top:285px;width:1px;height:21px;background:#a0a0a0;"></div>
<div style="position:absolute;left:1079px;top:285px;width:1px;height:21px;background:#a0a0a0;"></div>
<div style="position:absolute;left:1120px;top:285px;width:1px;height:21px;background:#a0a0a0;"></div>
<div style="position:absolute;left:1161px;top:285px;width:1px;height:21px;background:#a0a0a0;"></div>
<div style="position:absolute;left:10.32px;top:296.84px;font:bold 12px 'Liberation Sans';line-height:0;white-space:pre;color:#000;">78</div>
<svg style="position:absolute;left:1173px;top:288px;" width="16" height="14" viewBox="0 0 16 14"><rect x="1.8" y="2" width="14" height="11.5" fill="#888" opacity="0.7"/>
<rect x="0" y="0" width="14.5" height="12" fill="#f8f4e0" stroke="#c8c4a8" stroke-width="0.6"/>
<rect x="0.6" y="0.6" width="13.3" height="2.6" fill="#6a8af8"/><rect x="0.6" y="0.6" width="4" height="2.6" fill="#2a40e0"/>
<rect x="1" y="3.4" width="12" height="6.4" fill="#000"/><rect x="1.5" y="4.2" width="8" height="0.8" fill="#777"/><rect x="1.5" y="5.6" width="5" height="0.6" fill="#555"/></svg>
<div style="position:absolute;left:0px;top:306px;width:35px;height:21px;background:#f0f0f0;"></div>
<div style="position:absolute;left:0px;top:327px;width:1191px;height:1px;background:#a0a0a0;"></div>
<div style="position:absolute;left:35px;top:306px;width:1px;height:21px;background:#a0a0a0;"></div>
<div style="position:absolute;left:66px;top:306px;width:1px;height:21px;background:#a0a0a0;"></div>
<div style="position:absolute;left:94px;top:306px;width:1px;height:21px;background:#a0a0a0;"></div>
<div style="position:absolute;left:295px;top:306px;width:1px;height:21px;background:#a0a0a0;"></div>
<div style="position:absolute;left:376px;top:306px;width:1px;height:21px;background:#a0a0a0;"></div>
<div style="position:absolute;left:427px;top:306px;width:1px;height:21px;background:#a0a0a0;"></div>
<div style="position:absolute;left:478px;top:306px;width:1px;height:21px;background:#a0a0a0;"></div>
<div style="position:absolute;left:514px;top:306px;width:1px;height:21px;background:#a0a0a0;"></div>
<div style="position:absolute;left:550px;top:306px;width:1px;height:21px;background:#a0a0a0;"></div>
<div style="position:absolute;left:616px;top:306px;width:1px;height:21px;background:#a0a0a0;"></div>
<div style="position:absolute;left:682px;top:306px;width:1px;height:21px;background:#a0a0a0;"></div>
<div style="position:absolute;left:833px;top:306px;width:1px;height:21px;background:#a0a0a0;"></div>
<div style="position:absolute;left:874px;top:306px;width:1px;height:21px;background:#a0a0a0;"></div>
<div style="position:absolute;left:915px;top:306px;width:1px;height:21px;background:#a0a0a0;"></div>
<div style="position:absolute;left:956px;top:306px;width:1px;height:21px;background:#a0a0a0;"></div>
<div style="position:absolute;left:997px;top:306px;width:1px;height:21px;background:#a0a0a0;"></div>
<div style="position:absolute;left:1038px;top:306px;width:1px;height:21px;background:#a0a0a0;"></div>
<div style="position:absolute;left:1079px;top:306px;width:1px;height:21px;background:#a0a0a0;"></div>
<div style="position:absolute;left:1120px;top:306px;width:1px;height:21px;background:#a0a0a0;"></div>
<div style="position:absolute;left:1161px;top:306px;width:1px;height:21px;background:#a0a0a0;"></div>
<div style="position:absolute;left:10.32px;top:317.84px;font:bold 12px 'Liberation Sans';line-height:0;white-space:pre;color:#000;">79</div>
<svg style="position:absolute;left:1173px;top:309px;" width="16" height="14" viewBox="0 0 16 14"><rect x="1.8" y="2" width="14" height="11.5" fill="#888" opacity="0.7"/>
<rect x="0" y="0" width="14.5" height="12" fill="#f8f4e0" stroke="#c8c4a8" stroke-width="0.6"/>
<rect x="0.6" y="0.6" width="13.3" height="2.6" fill="#6a8af8"/><rect x="0.6" y="0.6" width="4" height="2.6" fill="#2a40e0"/>
<rect x="1" y="3.4" width="12" height="6.4" fill="#000"/><rect x="1.5" y="4.2" width="8" height="0.8" fill="#777"/><rect x="1.5" y="5.6" width="5" height="0.6" fill="#555"/></svg>
<div style="position:absolute;left:0px;top:327px;width:35px;height:21px;background:#f0f0f0;"></div>
<div style="position:absolute;left:0px;top:348px;width:1191px;height:1px;background:#a0a0a0;"></div>
<div style="position:absolute;left:35px;top:327px;width:1px;height:21px;background:#a0a0a0;"></div>
<div style="position:absolute;left:66px;top:327px;width:1px;height:21px;background:#a0a0a0;"></div>
<div style="position:absolute;left:94px;top:327px;width:1px;height:21px;background:#a0a0a0;"></div>
<div style="position:absolute;left:295px;top:327px;width:1px;height:21px;background:#a0a0a0;"></div>
<div style="position:absolute;left:376px;top:327px;width:1px;height:21px;background:#a0a0a0;"></div>
<div style="position:absolute;left:427px;top:327px;width:1px;height:21px;background:#a0a0a0;"></div>
<div style="position:absolute;left:478px;top:327px;width:1px;height:21px;background:#a0a0a0;"></div>
<div style="position:absolute;left:514px;top:327px;width:1px;height:21px;background:#a0a0a0;"></div>
<div style="position:absolute;left:550px;top:327px;width:1px;height:21px;background:#a0a0a0;"></div>
<div style="position:absolute;left:616px;top:327px;width:1px;height:21px;background:#a0a0a0;"></div>
<div style="position:absolute;left:682px;top:327px;width:1px;height:21px;background:#a0a0a0;"></div>
<div style="position:absolute;left:833px;top:327px;width:1px;height:21px;background:#a0a0a0;"></div>
<div style="position:absolute;left:874px;top:327px;width:1px;height:21px;background:#a0a0a0;"></div>
<div style="position:absolute;left:915px;top:327px;width:1px;height:21px;background:#a0a0a0;"></div>
<div style="position:absolute;left:956px;top:327px;width:1px;height:21px;background:#a0a0a0;"></div>
<div style="position:absolute;left:997px;top:327px;width:1px;height:21px;background:#a0a0a0;"></div>
<div style="position:absolute;left:1038px;top:327px;width:1px;height:21px;background:#a0a0a0;"></div>
<div style="position:absolute;left:1079px;top:327px;width:1px;height:21px;background:#a0a0a0;"></div>
<div style="position:absolute;left:1120px;top:327px;width:1px;height:21px;background:#a0a0a0;"></div>
<div style="position:absolute;left:1161px;top:327px;width:1px;height:21px;background:#a0a0a0;"></div>
<div style="position:absolute;left:10.32px;top:338.84px;font:bold 12px 'Liberation Sans';line-height:0;white-space:pre;color:#000;">80</div>
<svg style="position:absolute;left:1173px;top:330px;" width="16" height="14" viewBox="0 0 16 14"><rect x="1.8" y="2" width="14" height="11.5" fill="#888" opacity="0.7"/>
<rect x="0" y="0" width="14.5" height="12" fill="#f8f4e0" stroke="#c8c4a8" stroke-width="0.6"/>
<rect x="0.6" y="0.6" width="13.3" height="2.6" fill="#6a8af8"/><rect x="0.6" y="0.6" width="4" height="2.6" fill="#2a40e0"/>
<rect x="1" y="3.4" width="12" height="6.4" fill="#000"/><rect x="1.5" y="4.2" width="8" height="0.8" fill="#777"/><rect x="1.5" y="5.6" width="5" height="0.6" fill="#555"/></svg>
<div style="position:absolute;left:0px;top:348px;width:35px;height:21px;background:#f0f0f0;"></div>
<div style="position:absolute;left:0px;top:369px;width:1191px;height:1px;background:#a0a0a0;"></div>
<div style="position:absolute;left:35px;top:348px;width:1px;height:21px;background:#a0a0a0;"></div>
<div style="position:absolute;left:66px;top:348px;width:1px;height:21px;background:#a0a0a0;"></div>
<div style="position:absolute;left:94px;top:348px;width:1px;height:21px;background:#a0a0a0;"></div>
<div style="position:absolute;left:295px;top:348px;width:1px;height:21px;background:#a0a0a0;"></div>
<div style="position:absolute;left:376px;top:348px;width:1px;height:21px;background:#a0a0a0;"></div>
<div style="position:absolute;left:427px;top:348px;width:1px;height:21px;background:#a0a0a0;"></div>
<div style="position:absolute;left:478px;top:348px;width:1px;height:21px;background:#a0a0a0;"></div>
<div style="position:absolute;left:514px;top:348px;width:1px;height:21px;background:#a0a0a0;"></div>
<div style="position:absolute;left:550px;top:348px;width:1px;height:21px;background:#a0a0a0;"></div>
<div style="position:absolute;left:616px;top:348px;width:1px;height:21px;background:#a0a0a0;"></div>
<div style="position:absolute;left:682px;top:348px;width:1px;height:21px;background:#a0a0a0;"></div>
<div style="position:absolute;left:833px;top:348px;width:1px;height:21px;background:#a0a0a0;"></div>
<div style="position:absolute;left:874px;top:348px;width:1px;height:21px;background:#a0a0a0;"></div>
<div style="position:absolute;left:915px;top:348px;width:1px;height:21px;background:#a0a0a0;"></div>
<div style="position:absolute;left:956px;top:348px;width:1px;height:21px;background:#a0a0a0;"></div>
<div style="position:absolute;left:997px;top:348px;width:1px;height:21px;background:#a0a0a0;"></div>
<div style="position:absolute;left:1038px;top:348px;width:1px;height:21px;background:#a0a0a0;"></div>
<div style="position:absolute;left:1079px;top:348px;width:1px;height:21px;background:#a0a0a0;"></div>
<div style="position:absolute;left:1120px;top:348px;width:1px;height:21px;background:#a0a0a0;"></div>
<div style="position:absolute;left:1161px;top:348px;width:1px;height:21px;background:#a0a0a0;"></div>
<div style="position:absolute;left:10.32px;top:359.84px;font:bold 12px 'Liberation Sans';line-height:0;white-space:pre;color:#000;">81</div>
<div style="position:absolute;left:0px;top:369px;width:35px;height:21px;background:#f0f0f0;"></div>
<div style="position:absolute;left:0px;top:390px;width:1191px;height:1px;background:#a0a0a0;"></div>
<div style="position:absolute;left:35px;top:369px;width:1px;height:21px;background:#a0a0a0;"></div>
<div style="position:absolute;left:66px;top:369px;width:1px;height:21px;background:#a0a0a0;"></div>
<div style="position:absolute;left:94px;top:369px;width:1px;height:21px;background:#a0a0a0;"></div>
<div style="position:absolute;left:295px;top:369px;width:1px;height:21px;background:#a0a0a0;"></div>
<div style="position:absolute;left:376px;top:369px;width:1px;height:21px;background:#a0a0a0;"></div>
<div style="position:absolute;left:427px;top:369px;width:1px;height:21px;background:#a0a0a0;"></div>
<div style="position:absolute;left:478px;top:369px;width:1px;height:21px;background:#a0a0a0;"></div>
<div style="position:absolute;left:514px;top:369px;width:1px;height:21px;background:#a0a0a0;"></div>
<div style="position:absolute;left:550px;top:369px;width:1px;height:21px;background:#a0a0a0;"></div>
<div style="position:absolute;left:616px;top:369px;width:1px;height:21px;background:#a0a0a0;"></div>
<div style="position:absolute;left:682px;top:369px;width:1px;height:21px;background:#a0a0a0;"></div>
<div style="position:absolute;left:833px;top:369px;width:1px;height:21px;background:#a0a0a0;"></div>
<div style="position:absolute;left:874px;top:369px;width:1px;height:21px;background:#a0a0a0;"></div>
<div style="position:absolute;left:915px;top:369px;width:1px;height:21px;background:#a0a0a0;"></div>
<div style="position:absolute;left:956px;top:369px;width:1px;height:21px;background:#a0a0a0;"></div>
<div style="position:absolute;left:997px;top:369px;width:1px;height:21px;background:#a0a0a0;"></div>
<div style="position:absolute;left:1038px;top:369px;width:1px;height:21px;background:#a0a0a0;"></div>
<div style="position:absolute;left:1079px;top:369px;width:1px;height:21px;background:#a0a0a0;"></div>
<div style="position:absolute;left:1120px;top:369px;width:1px;height:21px;background:#a0a0a0;"></div>
<div style="position:absolute;left:1161px;top:369px;width:1px;height:21px;background:#a0a0a0;"></div>
<div style="position:absolute;left:10.32px;top:380.84px;font:bold 12px 'Liberation Sans';line-height:0;white-space:pre;color:#000;">82</div>
</div>
<div style="position:absolute;left:16px;top:726px;width:1192px;height:1px;background:#a0a0a0;"></div>
<div style="position:absolute;left:16px;top:727px;width:1192px;height:15px;background:linear-gradient(#ffffff,#ffffff 40%,#eff0f3);"></div>
<div style="position:absolute;left:16px;top:742px;width:1192px;height:1px;background:#c8c8c8;"></div>
<div style="position:absolute;left:16px;top:743px;width:1191px;height:17px;background:#f0f0f0;"></div>
<svg style="position:absolute;left:22px;top:747px;" width="5" height="8" viewBox="0 0 5 8"><path d="M5 0 L0 4 L5 8 Z" fill="#555"/></svg>
<div style="position:absolute;left:35px;top:744px;width:400px;height:15px;box-sizing:border-box;border:1px solid #a8a8a8;border-radius:2px;background:linear-gradient(#f4f4f4,#e4e4e4 50%,#d4d4d4);"></div>
<svg style="position:absolute;left:1197px;top:748px;" width="5" height="8" viewBox="0 0 5 8"><path d="M0 0 L5 4 L0 8 Z" fill="#555"/></svg>
<div style="position:absolute;left:1207px;top:743px;width:17px;height:17px;background:#e6e6f6;"></div>
<div style="position:absolute;left:1208px;top:304px;width:16px;height:439px;background:linear-gradient(90deg,#e4e4e4,#f0f0f0 30%,#f0f0f0);"></div>
<svg style="position:absolute;left:1212px;top:311px;" width="9" height="5" viewBox="0 0 9 5"><path d="M0 5 L4.5 0 L9 5 Z" fill="#444"/></svg>
<svg style="position:absolute;left:1212px;top:732px;" width="9" height="5" viewBox="0 0 9 5"><path d="M0 0 L4.5 5 L9 0 Z" fill="#444"/></svg>
<div style="position:absolute;left:1208px;top:628px;width:15px;height:85px;box-sizing:border-box;border:1px solid #a8a8a8;border-radius:2px;background:linear-gradient(90deg,#f4f4f4,#e0e0e0 60%,#d0d0d0);"></div>
<svg style="position:absolute;left:1212px;top:666px;" width="8" height="7" viewBox="0 0 8 7"><path d="M0 0.5 H8 M0 3.5 H8 M0 6.5 H8" stroke="#666" stroke-width="1"/></svg>
<div style="position:absolute;left:3px;top:766px;width:1233px;height:24px;background:linear-gradient(#404552,#3c414d 33%,#333333 35%,#323232 92%,#3a3a3a);"></div>
<div style="position:absolute;left:14px;top:767px;width:1px;height:22px;background:#111;"></div>
<div style="position:absolute;left:15px;top:767px;width:1px;height:22px;background:#555;"></div>
<div style="position:absolute;left:1117px;top:767px;width:121px;height:23px;box-sizing:border-box;background:linear-gradient(#cacaca,#bcbcbc 25%,#9ea2a8 45%,#5a626c 92%,#3a3a3a);border-left:1px solid #111;"></div>
<div style="position:absolute;left:1141.00px;top:777.84px;font:normal 12px 'Liberation Sans';line-height:0;white-space:pre;color:#1a1a70;letter-spacing:-0.778px;">WINUPDJOB</div>
<svg style="position:absolute;left:1224px;top:776px;" width="13" height="13" viewBox="0 0 13 13"><rect x="10" y="2" width="2" height="2" fill="#f0f0f0"/><rect x="9" y="1" width="2" height="2" fill="#111"/><rect x="6" y="6" width="2" height="2" fill="#f0f0f0"/><rect x="5" y="5" width="2" height="2" fill="#111"/><rect x="10" y="6" width="2" height="2" fill="#f0f0f0"/><rect x="9" y="5" width="2" height="2" fill="#111"/><rect x="2" y="10" width="2" height="2" fill="#f0f0f0"/><rect x="1" y="9" width="2" height="2" fill="#111"/><rect x="6" y="10" width="2" height="2" fill="#f0f0f0"/><rect x="5" y="9" width="2" height="2" fill="#111"/><rect x="10" y="10" width="2" height="2" fill="#f0f0f0"/><rect x="9" y="9" width="2" height="2" fill="#111"/></svg>
<div style="position:absolute;left:55px;top:499px;width:1114px;height:440px;background:#333;border-radius:6px 6px 0 0;"></div>
<div style="position:absolute;left:55px;top:499px;width:1114px;height:9px;background:linear-gradient(#4a4e58,#42464f);border-radius:6px 6px 0 0;"></div>
<div style="position:absolute;left:55px;top:507px;width:1114px;height:17px;background:linear-gradient(#3a3c40,#333333);"></div>
<div style="position:absolute;left:55px;top:524px;width:1114px;height:2px;background:#555555;"></div>
<div style="position:absolute;left:56px;top:526px;width:2px;height:390px;background:#555555;"></div>
<div style="position:absolute;left:1166px;top:526px;width:2px;height:390px;background:#555555;"></div>
<svg style="position:absolute;left:61px;top:505px;" width="16" height="16" viewBox="0 0 16 16"><rect x="0" y="0" width="16" height="16" fill="#fff"/><g transform="translate(0.8,0.6) scale(0.315)"><g><ellipse cx="11" cy="4.2" rx="4.6" ry="3.8" fill="#2020ff"/><ellipse cx="11" cy="3.2" rx="3" ry="1.8" fill="#4a4aff" opacity="0.85"/>
<path d="M0.5 12 Q0.5 10 2.5 10 L19.5 10 Q21.5 10 21.5 12 L21.5 26 Q21.5 28 19.8 28 L19 28 Q17.2 28 17.2 26 L17.2 13.5 L15.8 13.5 L15.8 44 L17.5 44.2 Q18.5 46.5 16.5 46.5 L12 46.5 L11.6 45 L11.6 28.5 L10.4 28.5 L10.4 45 L10 46.5 L5.5 46.5 Q3.5 46.5 4.5 44.2 L6.2 44 L6.2 13.5 L4.8 13.5 L4.8 26 Q4.8 28 3 28 L2.2 28 Q0.5 28 0.5 26 Z" fill="#000060" opacity="0.55" transform="translate(0.4,0.6)"/>
<path d="M0.5 12 Q0.5 10 2.5 10 L19.5 10 Q21.5 10 21.5 12 L21.5 26 Q21.5 28 19.8 28 L19 28 Q17.2 28 17.2 26 L17.2 13.5 L15.8 13.5 L15.8 44 L17.5 44.2 Q18.5 46.5 16.5 46.5 L12 46.5 L11.6 45 L11.6 28.5 L10.4 28.5 L10.4 45 L10 46.5 L5.5 46.5 Q3.5 46.5 4.5 44.2 L6.2 44 L6.2 13.5 L4.8 13.5 L4.8 26 Q4.8 28 3 28 L2.2 28 Q0.5 28 0.5 26 Z" fill="#2020ff"/>
<path d="M1.2 10.9 L20.8 10.9" stroke="#4a4aff" stroke-width="1.7"/>
<path d="M5.2 45.6 L9.5 45.6 M12.5 45.6 L16.8 45.6" stroke="#4a4aff" stroke-width="1" opacity="0.8"/></g><g transform="translate(23.5,0)"><ellipse cx="11" cy="4.2" rx="4.6" ry="3.8" fill="#2020ff"/><ellipse cx="11" cy="3.2" rx="3" ry="1.8" fill="#4a4aff" opacity="0.85"/>
<path d="M0.5 12 Q0.5 10 2.5 10 L19.5 10 Q21.5 10 21.5 12 L21.5 26 Q21.5 28 19.8 28 L19 28 Q17.2 28 17.2 26 L17.2 13.5 L15.8 13.5 L15.8 44 L17.5 44.2 Q18.5 46.5 16.5 46.5 L12 46.5 L11.6 45 L11.6 28.5 L10.4 28.5 L10.4 45 L10 46.5 L5.5 46.5 Q3.5 46.5 4.5 44.2 L6.2 44 L6.2 13.5 L4.8 13.5 L4.8 26 Q4.8 28 3 28 L2.2 28 Q0.5 28 0.5 26 Z" fill="#000060" opacity="0.55" transform="translate(0.4,0.6)"/>
<path d="M0.5 12 Q0.5 10 2.5 10 L19.5 10 Q21.5 10 21.5 12 L21.5 26 Q21.5 28 19.8 28 L19 28 Q17.2 28 17.2 26 L17.2 13.5 L15.8 13.5 L15.8 44 L17.5 44.2 Q18.5 46.5 16.5 46.5 L12 46.5 L11.6 45 L11.6 28.5 L10.4 28.5 L10.4 45 L10 46.5 L5.5 46.5 Q3.5 46.5 4.5 44.2 L6.2 44 L6.2 13.5 L4.8 13.5 L4.8 26 Q4.8 28 3 28 L2.2 28 Q0.5 28 0.5 26 Z" fill="#2020ff"/>
<path d="M1.2 10.9 L20.8 10.9" stroke="#4a4aff" stroke-width="1.7"/>
<path d="M5.2 45.6 L9.5 45.6 M12.5 45.6 L16.8 45.6" stroke="#4a4aff" stroke-width="1" opacity="0.8"/></g></g></svg>
<div style="position:absolute;left:81.00px;top:514.84px;font:normal 12px 'Liberation Sans';line-height:0;white-space:pre;color:#f0f2f4;letter-spacing:-0.547px;text-shadow:0 0 3px rgba(255,255,255,0.3);">Group Jobs - REVSOFT_LAB_01 (HYPERION) (DB: IBM DB2)</div>
<div style="position:absolute;left:1074px;top:515px;width:7px;height:2px;background:#a8aab0;"></div>
<div style="position:absolute;left:1108px;top:510px;width:9px;height:7px;box-sizing:border-box;border:1px solid #a8aab0;border-top-width:2px;"></div>
<svg style="position:absolute;left:1143px;top:508px;" width="10" height="10" viewBox="0 0 10 10"><path d="M1 1 L9 9 M9 1 L1 9" stroke="#b0b4bc" stroke-width="2.2"/></svg>
<svg style="position:absolute;left:69px;top:535px;" width="100" height="100" viewBox="0 0 100 100"><defs><linearGradient id="g53" x1="0" y1="0" x2="1" y2="1"><stop offset="0" stop-color="#5aff5a"/><stop offset="0.45" stop-color="#12f012"/><stop offset="1" stop-color="#00d000"/></linearGradient>
<radialGradient id="g54" cx="0.5" cy="0.5" r="0.5"><stop offset="0" stop-color="#1a8a1a"/><stop offset="0.6" stop-color="#2a7a2a"/><stop offset="1" stop-color="#333" stop-opacity="0"/></radialGradient></defs>
<ellipse cx="42" cy="95" rx="14" ry="4.5" fill="url(#g54)"/>
<path d="M6 24 Q8 21 11 24 L21 33 L33 19 L54 19 L72 36 Q75 41 70 44 L66 44 L47 31 L71 55 L88 55 Q96 57 95 62 Q94 68 87 68 L64 68 L52 57 L42.5 66 L47 90 Q47 94 42 94 L38 93 L31 64 Q30 60 33 57 L42 49 L33 37 L21 44 Q18 46 15 43 L5 30 Q3 27 6 24 Z" fill="#007a00" transform="translate(1.8,1.5)"/>
<path d="M6 24 Q8 21 11 24 L21 33 L33 19 L54 19 L72 36 Q75 41 70 44 L66 44 L47 31 L71 55 L88 55 Q96 57 95 62 Q94 68 87 68 L64 68 L52 57 L42.5 66 L47 90 Q47 94 42 94 L38 93 L31 64 Q30 60 33 57 L42 49 L33 37 L21 44 Q18 46 15 43 L5 30 Q3 27 6 24 Z" fill="url(#g53)" stroke="#00b000" stroke-width="0.8"/>
<path d="M47 31 L71 55 L66 56 L44 34 Z" fill="#008800" opacity="0.75"/>
<ellipse cx="26" cy="14" rx="10" ry="9.6" fill="#008a00"/><ellipse cx="24.8" cy="13.2" rx="9.6" ry="9.2" fill="url(#g53)"/></svg>
<svg style="position:absolute;left:181.5px;top:535.5px;" width="47" height="47" viewBox="0 0 47 47"><defs><radialGradient id="g55" cx="0.5" cy="0.3" r="0.7"><stop offset="0" stop-color="#cfe3f5"/><stop offset="0.45" stop-color="#6fa3d8"/><stop offset="1" stop-color="#2a6ab8"/></radialGradient></defs>
<circle cx="23.5" cy="23.5" r="23" fill="#fff"/><circle cx="23.5" cy="23.5" r="21" fill="#3d7cc4"/>
<ellipse cx="23.5" cy="15" rx="16" ry="11" fill="#d8e8f8" opacity="0.85"/>
<circle cx="23.5" cy="11" r="2.6" fill="#fff"/><rect x="21.3" y="16" width="4.4" height="14" fill="#fff"/>
<path d="M8 31 Q24 33 37 32 L33 36 Q22 33 8 31 Z" fill="#fff"/></svg>
<div style="position:absolute;left:241.00px;top:547.38px;font:bold 22px 'Liberation Sans';line-height:0;white-space:pre;color:#ffff00;">REVSOFT_LAB_01</div>
<div style="position:absolute;left:800.00px;top:575.07px;font:bold 20px 'Liberation Sans';line-height:0;white-space:pre;color:#ffffff;letter-spacing:-0.062px;">Orlando USA Dev. Centre.</div>
<svg style="position:absolute;left:1054.5px;top:530px;" width="40" height="55" viewBox="0 0 40 55"><path d="M25 17 Q30 10 36.5 6.5" stroke="#000" stroke-width="1.8" fill="none" stroke-linecap="round"/><circle cx="20.4" cy="16.1" r="3.4" fill="#000"/><circle cx="24.2" cy="19.5" r="2.4" fill="#000"/><circle cx="29.7" cy="19.5" r="3.1" fill="#000"/><circle cx="14.8" cy="22.9" r="3.1" fill="#000"/><circle cx="20.4" cy="22.9" r="2.9" fill="#000"/><circle cx="27.1" cy="25" r="3.1" fill="#000"/><circle cx="12.7" cy="30.1" r="3.0" fill="#000"/><circle cx="19.1" cy="28.4" r="3.6999999999999997" fill="#000"/><circle cx="25" cy="29.7" r="2.6" fill="#000"/><circle cx="11.5" cy="37.3" r="3.6999999999999997" fill="#000"/><circle cx="17" cy="34.8" r="2.6" fill="#000"/><circle cx="23.3" cy="34.4" r="2.9" fill="#000"/><circle cx="17" cy="40.7" r="2.9" fill="#000"/><circle cx="11.5" cy="44.1" r="2.9" fill="#000"/><circle cx="17" cy="45" r="1.9" fill="#000"/><circle cx="14.4" cy="49.2" r="2.9" fill="#000"/><circle cx="20.4" cy="16.1" r="2.7" fill="#4c0a94"/><circle cx="24.2" cy="19.5" r="1.7" fill="#4c0a94"/><circle cx="29.7" cy="19.5" r="2.4000000000000004" fill="#4c0a94"/><circle cx="14.8" cy="22.9" r="2.4000000000000004" fill="#4c0a94"/><circle cx="20.4" cy="22.9" r="2.2" fill="#4c0a94"/><circle cx="27.1" cy="25" r="2.4000000000000004" fill="#4c0a94"/><circle cx="12.7" cy="30.1" r="2.3000000000000003" fill="#4c0a94"/><circle cx="19.1" cy="28.4" r="3.0" fill="#4c0a94"/><circle cx="25" cy="29.7" r="1.9000000000000001" fill="#4c0a94"/><circle cx="11.5" cy="37.3" r="3.0" fill="#4c0a94"/><circle cx="17" cy="34.8" r="1.9000000000000001" fill="#4c0a94"/><circle cx="23.3" cy="34.4" r="2.2" fill="#4c0a94"/><circle cx="17" cy="40.7" r="2.2" fill="#4c0a94"/><circle cx="11.5" cy="44.1" r="2.2" fill="#4c0a94"/><circle cx="17" cy="45" r="1.2" fill="#4c0a94"/><circle cx="14.4" cy="49.2" r="2.2" fill="#4c0a94"/></svg>
<svg style="position:absolute;left:1107.5px;top:554px;" width="46" height="47" viewBox="0 0 46 47"><g><ellipse cx="11" cy="4.2" rx="4.6" ry="3.8" fill="#2020ff"/><ellipse cx="11" cy="3.2" rx="3" ry="1.8" fill="#4a4aff" opacity="0.85"/>
<path d="M0.5 12 Q0.5 10 2.5 10 L19.5 10 Q21.5 10 21.5 12 L21.5 26 Q21.5 28 19.8 28 L19 28 Q17.2 28 17.2 26 L17.2 13.5 L15.8 13.5 L15.8 44 L17.5 44.2 Q18.5 46.5 16.5 46.5 L12 46.5 L11.6 45 L11.6 28.5 L10.4 28.5 L10.4 45 L10 46.5 L5.5 46.5 Q3.5 46.5 4.5 44.2 L6.2 44 L6.2 13.5 L4.8 13.5 L4.8 26 Q4.8 28 3 28 L2.2 28 Q0.5 28 0.5 26 Z" fill="#000060" opacity="0.55" transform="translate(0.4,0.6)"/>
<path d="M0.5 12 Q0.5 10 2.5 10 L19.5 10 Q21.5 10 21.5 12 L21.5 26 Q21.5 28 19.8 28 L19 28 Q17.2 28 17.2 26 L17.2 13.5 L15.8 13.5 L15.8 44 L17.5 44.2 Q18.5 46.5 16.5 46.5 L12 46.5 L11.6 45 L11.6 28.5 L10.4 28.5 L10.4 45 L10 46.5 L5.5 46.5 Q3.5 46.5 4.5 44.2 L6.2 44 L6.2 13.5 L4.8 13.5 L4.8 26 Q4.8 28 3 28 L2.2 28 Q0.5 28 0.5 26 Z" fill="#2020ff"/>
<path d="M1.2 10.9 L20.8 10.9" stroke="#4a4aff" stroke-width="1.7"/>
<path d="M5.2 45.6 L9.5 45.6 M12.5 45.6 L16.8 45.6" stroke="#4a4aff" stroke-width="1" opacity="0.8"/></g><g transform="translate(23.5,0)"><ellipse cx="11" cy="4.2" rx="4.6" ry="3.8" fill="#2020ff"/><ellipse cx="11" cy="3.2" rx="3" ry="1.8" fill="#4a4aff" opacity="0.85"/>
<path d="M0.5 12 Q0.5 10 2.5 10 L19.5 10 Q21.5 10 21.5 12 L21.5 26 Q21.5 28 19.8 28 L19 28 Q17.2 28 17.2 26 L17.2 13.5 L15.8 13.5 L15.8 44 L17.5 44.2 Q18.5 46.5 16.5 46.5 L12 46.5 L11.6 45 L11.6 28.5 L10.4 28.5 L10.4 45 L10 46.5 L5.5 46.5 Q3.5 46.5 4.5 44.2 L6.2 44 L6.2 13.5 L4.8 13.5 L4.8 26 Q4.8 28 3 28 L2.2 28 Q0.5 28 0.5 26 Z" fill="#000060" opacity="0.55" transform="translate(0.4,0.6)"/>
<path d="M0.5 12 Q0.5 10 2.5 10 L19.5 10 Q21.5 10 21.5 12 L21.5 26 Q21.5 28 19.8 28 L19 28 Q17.2 28 17.2 26 L17.2 13.5 L15.8 13.5 L15.8 44 L17.5 44.2 Q18.5 46.5 16.5 46.5 L12 46.5 L11.6 45 L11.6 28.5 L10.4 28.5 L10.4 45 L10 46.5 L5.5 46.5 Q3.5 46.5 4.5 44.2 L6.2 44 L6.2 13.5 L4.8 13.5 L4.8 26 Q4.8 28 3 28 L2.2 28 Q0.5 28 0.5 26 Z" fill="#2020ff"/>
<path d="M1.2 10.9 L20.8 10.9" stroke="#4a4aff" stroke-width="1.7"/>
<path d="M5.2 45.6 L9.5 45.6 M12.5 45.6 L16.8 45.6" stroke="#4a4aff" stroke-width="1" opacity="0.8"/></g></svg>
<div style="position:absolute;left:180px;top:590px;width:927px;height:3px;background:#b8f4f8;"></div>
<div style="position:absolute;left:180px;top:597px;width:110px;height:50px;box-sizing:border-box;border:1px solid #5c5c5c;"></div>
<svg style="position:absolute;left:185px;top:605px;" width="36" height="36" viewBox="0 0 36 36"><defs><linearGradient id="g56" x1="0.15" y1="0" x2="0.85" y2="1"><stop offset="0" stop-color="#d4d4da"/><stop offset="0.45" stop-color="#9c9ca6"/><stop offset="0.8" stop-color="#f4f4f4"/><stop offset="1" stop-color="#b8b8b8"/></linearGradient>
<radialGradient id="g57" cx="0.5" cy="0.85" r="0.75"><stop offset="0" stop-color="#a8e890"/><stop offset="0.55" stop-color="#58c43c"/><stop offset="1" stop-color="#2ea02a"/></radialGradient>
<linearGradient id="g58" x1="0.2" y1="0" x2="0.8" y2="1"><stop offset="0" stop-color="#d8f0a8" stop-opacity="1"/><stop offset="0.55" stop-color="#d8f0a8" stop-opacity="0.75"/><stop offset="1" stop-color="#d8f0a8" stop-opacity="0.15"/></linearGradient></defs>
<circle cx="18" cy="18" r="17.9" fill="url(#g56)"/><circle cx="18" cy="18" r="15.4" fill="#505058"/><circle cx="18" cy="18" r="15" fill="url(#g57)"/>
<path d="M3.6 18.5 A14.6 14.6 0 0 1 32.4 18.5 Q18 14 3.6 18.5 Z" fill="url(#g58)"/><path d="M15.2 6.2 H20.8 V15.2 H29.6 V20.8 H20.8 V29.6 H15.2 V20.8 H6.4 V15.2 H15.2 Z" fill="#00a850"/><path d="M15.2 6.2 H20.8 V15.2 H15.2 Z" fill="#30c070" opacity="0.5"/></svg>
<div style="position:absolute;left:223.50px;top:621.84px;font:bold 12px 'Liberation Sans';line-height:0;white-space:pre;color:#c4f8c8;letter-spacing:-0.443px;">Add</div>
<div style="position:absolute;left:292px;top:597px;width:110px;height:50px;box-sizing:border-box;border:1px solid #5c5c5c;"></div>
<svg style="position:absolute;left:297px;top:605px;" width="36" height="36" viewBox="0 0 36 36"><defs><linearGradient id="g60" x1="0.15" y1="0" x2="0.85" y2="1"><stop offset="0" stop-color="#d4d4da"/><stop offset="0.45" stop-color="#9c9ca6"/><stop offset="0.8" stop-color="#f4f4f4"/><stop offset="1" stop-color="#b8b8b8"/></linearGradient>
<radialGradient id="g61" cx="0.5" cy="0.85" r="0.75"><stop offset="0" stop-color="#80e0ff"/><stop offset="0.55" stop-color="#12b4f0"/><stop offset="1" stop-color="#0a88d0"/></radialGradient>
<linearGradient id="g62" x1="0.2" y1="0" x2="0.8" y2="1"><stop offset="0" stop-color="#e0f6ff" stop-opacity="1"/><stop offset="0.55" stop-color="#e0f6ff" stop-opacity="0.75"/><stop offset="1" stop-color="#e0f6ff" stop-opacity="0.15"/></linearGradient></defs>
<circle cx="18" cy="18" r="17.9" fill="url(#g60)"/><circle cx="18" cy="18" r="15.4" fill="#505058"/><circle cx="18" cy="18" r="15" fill="url(#g61)"/>
<path d="M3.6 18.5 A14.6 14.6 0 0 1 32.4 18.5 Q18 14 3.6 18.5 Z" fill="url(#g62)"/><path d="M21.5 7.5 Q23 6.5 24.5 7.5 L28.5 10.5 Q29.5 11.5 28.5 13 L18 26 L11 29 L11.8 22 Z" fill="#2c4ab0"/><path d="M19 10.5 L26 15.5 M16.5 13.5 L23.5 18.5" stroke="#a8c8f8" stroke-width="0.9"/><path d="M12.5 22.5 L17.5 26 L11.5 28.5 Z" fill="#9ee8f8"/><path d="M16 29.5 H27" stroke="#1a2a80" stroke-width="1.3"/></svg>
<div style="position:absolute;left:335.50px;top:621.84px;font:bold 12px 'Liberation Sans';line-height:0;white-space:pre;color:#c4f8c8;letter-spacing:-0.418px;">Edit</div>
<div style="position:absolute;left:404px;top:597px;width:110px;height:50px;box-sizing:border-box;border:1px solid #5c5c5c;"></div>
<svg style="position:absolute;left:409px;top:605px;" width="36" height="36" viewBox="0 0 36 36"><defs><linearGradient id="g64" x1="0.15" y1="0" x2="0.85" y2="1"><stop offset="0" stop-color="#d4d4da"/><stop offset="0.45" stop-color="#9c9ca6"/><stop offset="0.8" stop-color="#f4f4f4"/><stop offset="1" stop-color="#b8b8b8"/></linearGradient>
<radialGradient id="g65" cx="0.5" cy="0.85" r="0.75"><stop offset="0" stop-color="#ffb0a0"/><stop offset="0.55" stop-color="#ec3a2c"/><stop offset="1" stop-color="#c01020"/></radialGradient>
<linearGradient id="g66" x1="0.2" y1="0" x2="0.8" y2="1"><stop offset="0" stop-color="#ffd0b8" stop-opacity="1"/><stop offset="0.55" stop-color="#ffd0b8" stop-opacity="0.75"/><stop offset="1" stop-color="#ffd0b8" stop-opacity="0.15"/></linearGradient></defs>
<circle cx="18" cy="18" r="17.9" fill="url(#g64)"/><circle cx="18" cy="18" r="15.4" fill="#505058"/><circle cx="18" cy="18" r="15" fill="url(#g65)"/>
<path d="M3.6 18.5 A14.6 14.6 0 0 1 32.4 18.5 Q18 14 3.6 18.5 Z" fill="url(#g66)"/><rect x="8.4" y="15.2" width="20.4" height="6.5" fill="#d41820"/><rect x="8.4" y="15.2" width="20.4" height="3" fill="#e86050" opacity="0.8"/><rect x="26.8" y="15.2" width="2" height="6.5" fill="#700000"/></svg>
<div style="position:absolute;left:447.50px;top:621.84px;font:bold 12px 'Liberation Sans';line-height:0;white-space:pre;color:#c4f8c8;letter-spacing:0.495px;">Delete</div>
<div style="position:absolute;left:516px;top:597px;width:110px;height:50px;box-sizing:border-box;border:1px solid #5c5c5c;"></div>
<svg style="position:absolute;left:521px;top:605px;" width="36" height="36" viewBox="0 0 36 36"><defs><linearGradient id="g68" x1="0.15" y1="0" x2="0.85" y2="1"><stop offset="0" stop-color="#d4d4da"/><stop offset="0.45" stop-color="#9c9ca6"/><stop offset="0.8" stop-color="#f4f4f4"/><stop offset="1" stop-color="#b8b8b8"/></linearGradient>
<radialGradient id="g69" cx="0.5" cy="0.85" r="0.75"><stop offset="0" stop-color="#80e0ff"/><stop offset="0.55" stop-color="#12b4f0"/><stop offset="1" stop-color="#0a88d0"/></radialGradient>
<linearGradient id="g70" x1="0.2" y1="0" x2="0.8" y2="1"><stop offset="0" stop-color="#e0f6ff" stop-opacity="1"/><stop offset="0.55" stop-color="#e0f6ff" stop-opacity="0.75"/><stop offset="1" stop-color="#e0f6ff" stop-opacity="0.15"/></linearGradient></defs>
<circle cx="18" cy="18" r="17.9" fill="url(#g68)"/><circle cx="18" cy="18" r="15.4" fill="#505058"/><circle cx="18" cy="18" r="15" fill="url(#g69)"/>
<path d="M3.6 18.5 A14.6 14.6 0 0 1 32.4 18.5 Q18 14 3.6 18.5 Z" fill="url(#g70)"/><rect x="8" y="9.5" width="20" height="14" rx="1.2" fill="#1a3a90"/><rect x="9.8" y="11.3" width="16.4" height="10.4" fill="#2ea0e8"/><rect x="9.8" y="11.3" width="16.4" height="4" fill="#70c8f8" opacity="0.6"/><rect x="16" y="23.5" width="4" height="2.5" fill="#1a3a90"/><rect x="12.5" y="26" width="11" height="1.8" fill="#1a3a90"/></svg>
<div style="position:absolute;left:559.50px;top:621.84px;font:bold 12px 'Liberation Sans';line-height:0;white-space:pre;color:#c4f8c8;letter-spacing:-0.241px;">Display</div>
<div style="position:absolute;left:628px;top:597px;width:110px;height:50px;box-sizing:border-box;border:1px solid #5c5c5c;"></div>
<svg style="position:absolute;left:633px;top:605px;" width="36" height="36" viewBox="0 0 36 36"><defs><linearGradient id="g72" x1="0.15" y1="0" x2="0.85" y2="1"><stop offset="0" stop-color="#d4d4da"/><stop offset="0.45" stop-color="#9c9ca6"/><stop offset="0.8" stop-color="#f4f4f4"/><stop offset="1" stop-color="#b8b8b8"/></linearGradient>
<radialGradient id="g73" cx="0.5" cy="0.85" r="0.75"><stop offset="0" stop-color="#80e0ff"/><stop offset="0.55" stop-color="#12b4f0"/><stop offset="1" stop-color="#0a88d0"/></radialGradient>
<linearGradient id="g74" x1="0.2" y1="0" x2="0.8" y2="1"><stop offset="0" stop-color="#e0f6ff" stop-opacity="1"/><stop offset="0.55" stop-color="#e0f6ff" stop-opacity="0.75"/><stop offset="1" stop-color="#e0f6ff" stop-opacity="0.15"/></linearGradient></defs>
<circle cx="18" cy="18" r="17.9" fill="url(#g72)"/><circle cx="18" cy="18" r="15.4" fill="#505058"/><circle cx="18" cy="18" r="15" fill="url(#g73)"/>
<path d="M3.6 18.5 A14.6 14.6 0 0 1 32.4 18.5 Q18 14 3.6 18.5 Z" fill="url(#g74)"/><rect x="14" y="10" width="14" height="13" fill="#1a3a90"/><rect x="15.8" y="11.8" width="10.4" height="9.4" fill="#70c8f0"/><rect x="7.5" y="17.5" width="8" height="8.5" fill="#1a3a90"/><rect x="9" y="19" width="5" height="5.5" fill="#2870c8"/></svg>
<div style="position:absolute;left:671.50px;top:621.84px;font:bold 12px 'Liberation Sans';line-height:0;white-space:pre;color:#c4f8c8;">Intra Dep</div>
<div style="position:absolute;left:740px;top:597px;width:110px;height:50px;box-sizing:border-box;border:1px solid #5c5c5c;"></div>
<svg style="position:absolute;left:745px;top:605px;" width="36" height="36" viewBox="0 0 36 36"><defs><linearGradient id="g76" x1="0.15" y1="0" x2="0.85" y2="1"><stop offset="0" stop-color="#d4d4da"/><stop offset="0.45" stop-color="#9c9ca6"/><stop offset="0.8" stop-color="#f4f4f4"/><stop offset="1" stop-color="#b8b8b8"/></linearGradient>
<radialGradient id="g77" cx="0.5" cy="0.85" r="0.75"><stop offset="0" stop-color="#a8e890"/><stop offset="0.55" stop-color="#58c43c"/><stop offset="1" stop-color="#2ea02a"/></radialGradient>
<linearGradient id="g78" x1="0.2" y1="0" x2="0.8" y2="1"><stop offset="0" stop-color="#d8f0a8" stop-opacity="1"/><stop offset="0.55" stop-color="#d8f0a8" stop-opacity="0.75"/><stop offset="1" stop-color="#d8f0a8" stop-opacity="0.15"/></linearGradient></defs>
<circle cx="18" cy="18" r="17.9" fill="url(#g76)"/><circle cx="18" cy="18" r="15.4" fill="#505058"/><circle cx="18" cy="18" r="15" fill="url(#g77)"/>
<path d="M3.6 18.5 A14.6 14.6 0 0 1 32.4 18.5 Q18 14 3.6 18.5 Z" fill="url(#g78)"/><circle cx="17.5" cy="17.5" r="8" fill="#f4fff0" opacity="0.7"/><path d="M24.5 10.5 Q17 5 10.5 15.5" stroke="#30b870" stroke-width="3" fill="none" opacity="0.75"/><path d="M5.9 16.6 L14.3 17.6 L9.7 23.7 Z" fill="#00a850"/><path d="M12.8 25.3 Q20 31 27.6 18.6" stroke="#00a850" stroke-width="4" fill="none"/><path d="M22.4 19.6 L31.6 19.1 L27 12.5 Z" fill="#00a850"/></svg>
<div style="position:absolute;left:783.50px;top:621.84px;font:bold 12px 'Liberation Sans';line-height:0;white-space:pre;color:#c4f8c8;letter-spacing:-0.241px;">Refresh</div>
<div style="position:absolute;left:852px;top:597px;width:110px;height:50px;box-sizing:border-box;border:1px solid #5c5c5c;"></div>
<svg style="position:absolute;left:857px;top:605px;" width="36" height="36" viewBox="0 0 36 36"><defs><linearGradient id="g80" x1="0.15" y1="0" x2="0.85" y2="1"><stop offset="0" stop-color="#d4d4da"/><stop offset="0.45" stop-color="#9c9ca6"/><stop offset="0.8" stop-color="#f4f4f4"/><stop offset="1" stop-color="#b8b8b8"/></linearGradient>
<radialGradient id="g81" cx="0.5" cy="0.85" r="0.75"><stop offset="0" stop-color="#80e0ff"/><stop offset="0.55" stop-color="#12b4f0"/><stop offset="1" stop-color="#0a88d0"/></radialGradient>
<linearGradient id="g82" x1="0.2" y1="0" x2="0.8" y2="1"><stop offset="0" stop-color="#e0f6ff" stop-opacity="1"/><stop offset="0.55" stop-color="#e0f6ff" stop-opacity="0.75"/><stop offset="1" stop-color="#e0f6ff" stop-opacity="0.15"/></linearGradient></defs>
<circle cx="18" cy="18" r="17.9" fill="url(#g80)"/><circle cx="18" cy="18" r="15.4" fill="#505058"/><circle cx="18" cy="18" r="15" fill="url(#g81)"/>
<path d="M3.6 18.5 A14.6 14.6 0 0 1 32.4 18.5 Q18 14 3.6 18.5 Z" fill="url(#g82)"/><path d="M10 8 L20 8 L24.5 12.5 L24.5 28 L10 28 Z" fill="#2048b0"/><path d="M10 8 L20 8 L24.5 12.5 L24.5 18 L10 22 Z" fill="#4a70d0" opacity="0.6"/><path d="M13 18.5 L20 18.5 L20 15 L27.5 21 L20 27 L20 23.5 L13 23.5 Z" fill="#fff"/></svg>
<div style="position:absolute;left:895.50px;top:621.84px;font:bold 12px 'Liberation Sans';line-height:0;white-space:pre;color:#c4f8c8;letter-spacing:-0.503px;">Export</div>
<div style="position:absolute;left:964px;top:597px;width:110px;height:50px;box-sizing:border-box;border:1px solid #5c5c5c;"></div>
<svg style="position:absolute;left:969px;top:605px;" width="36" height="36" viewBox="0 0 36 36"><defs><linearGradient id="g84" x1="0.15" y1="0" x2="0.85" y2="1"><stop offset="0" stop-color="#d4d4da"/><stop offset="0.45" stop-color="#9c9ca6"/><stop offset="0.8" stop-color="#f4f4f4"/><stop offset="1" stop-color="#b8b8b8"/></linearGradient>
<radialGradient id="g85" cx="0.5" cy="0.85" r="0.75"><stop offset="0" stop-color="#a8e890"/><stop offset="0.55" stop-color="#58c43c"/><stop offset="1" stop-color="#2ea02a"/></radialGradient>
<linearGradient id="g86" x1="0.2" y1="0" x2="0.8" y2="1"><stop offset="0" stop-color="#d8f0a8" stop-opacity="1"/><stop offset="0.55" stop-color="#d8f0a8" stop-opacity="0.75"/><stop offset="1" stop-color="#d8f0a8" stop-opacity="0.15"/></linearGradient></defs>
<circle cx="18" cy="18" r="17.9" fill="url(#g84)"/><circle cx="18" cy="18" r="15.4" fill="#505058"/><circle cx="18" cy="18" r="15" fill="url(#g85)"/>
<path d="M3.6 18.5 A14.6 14.6 0 0 1 32.4 18.5 Q18 14 3.6 18.5 Z" fill="url(#g86)"/><path d="M13.1 7 L23.1 7 L23.1 25 L13.1 25 Z" fill="#20a858"/><path d="M14.2 8 L16 8 L16 24 L14.2 24 Z" fill="#f0fff0"/><path d="M16 7.8 L23.1 7 L23.1 25.5 L16 26.8 Z" fill="#00b050"/><path d="M27 27 Q20 32 13 27.5" stroke="#f8fff8" stroke-width="2" fill="none"/><path d="M9.5 25.5 L15.5 25.5 L12 30.5 Z" fill="#f8fff8"/></svg>
<div style="position:absolute;left:1007.50px;top:621.84px;font:bold 12px 'Liberation Sans';line-height:0;white-space:pre;color:#c4f8c8;letter-spacing:-0.338px;">Close</div>
<div style="position:absolute;left:69px;top:652px;width:1085px;height:3px;background:#b8f4f8;"></div>
<div style="position:absolute;left:68px;top:665px;width:1085px;height:69px;box-sizing:border-box;border:2px solid #fff;border-radius:2.5px;"></div>
<div style="position:absolute;left:74.2px;top:664px;width:52.0px;height:4px;background:#333333;"></div>
<div style="position:absolute;left:76.20px;top:666.84px;font:normal 12px 'Liberation Sans';line-height:0;white-space:pre;color:#ffffff;letter-spacing:-0.708px;">Job Event</div>
<svg style="position:absolute;left:95px;top:677.5px;" width="14.3" height="31.5" viewBox="0 0 22 47"><ellipse cx="11" cy="4.2" rx="4.6" ry="3.8" fill="#ffc030"/><ellipse cx="11" cy="3.2" rx="3" ry="1.8" fill="#ffd860" opacity="0.85"/>
<path d="M0.5 12 Q0.5 10 2.5 10 L19.5 10 Q21.5 10 21.5 12 L21.5 26 Q21.5 28 19.8 28 L19 28 Q17.2 28 17.2 26 L17.2 13.5 L15.8 13.5 L15.8 44 L17.5 44.2 Q18.5 46.5 16.5 46.5 L12 46.5 L11.6 45 L11.6 28.5 L10.4 28.5 L10.4 45 L10 46.5 L5.5 46.5 Q3.5 46.5 4.5 44.2 L6.2 44 L6.2 13.5 L4.8 13.5 L4.8 26 Q4.8 28 3 28 L2.2 28 Q0.5 28 0.5 26 Z" fill="#604000" opacity="0.55" transform="translate(0.4,0.6)"/>
<path d="M0.5 12 Q0.5 10 2.5 10 L19.5 10 Q21.5 10 21.5 12 L21.5 26 Q21.5 28 19.8 28 L19 28 Q17.2 28 17.2 26 L17.2 13.5 L15.8 13.5 L15.8 44 L17.5 44.2 Q18.5 46.5 16.5 46.5 L12 46.5 L11.6 45 L11.6 28.5 L10.4 28.5 L10.4 45 L10 46.5 L5.5 46.5 Q3.5 46.5 4.5 44.2 L6.2 44 L6.2 13.5 L4.8 13.5 L4.8 26 Q4.8 28 3 28 L2.2 28 Q0.5 28 0.5 26 Z" fill="#ffc030"/>
<path d="M1.2 10.9 L20.8 10.9" stroke="#ffd860" stroke-width="1.7"/>
<path d="M5.2 45.6 L9.5 45.6 M12.5 45.6 L16.8 45.6" stroke="#ffd860" stroke-width="1" opacity="0.8"/></svg>
<div style="position:absolute;left:128.00px;top:695.15px;font:bold 14px 'Liberation Sans';line-height:0;white-space:pre;color:#f0f000;letter-spacing:0.496px;">GROUP_ISERIES-PARENT (*BASE)</div>
<div style="position:absolute;left:130.00px;top:720.19px;font:normal 11px 'Liberation Sans';line-height:0;white-space:pre;color:#c0eef8;letter-spacing:-0.224px;">Group Parent controlled from HYPERION -ISERIES.</div>
<svg style="position:absolute;left:506px;top:679px;" width="31" height="31" viewBox="0 0 30 30"><defs><radialGradient id="g88" cx="0.4" cy="0.35" r="0.7"><stop offset="0" stop-color="#9ae050"/><stop offset="0.6" stop-color="#4aa820"/><stop offset="1" stop-color="#2a7a10"/></radialGradient></defs>
<ellipse cx="16" cy="28.5" rx="10" ry="1.6" fill="#111" opacity="0.55"/>
<path d="M13.5 19 L12.5 27 L10.5 28.5 L21 28.5 L19 27 L18.5 19 Z" fill="#8a6a38"/><path d="M16 19 L16.5 27" stroke="#5a4020" stroke-width="0.8"/>
<path d="M18 0.5 L21 2 L23 5 L26 6 L27 9 L29 12 L30 15 L28.5 17 L29.5 19 L25 20.5 L20 21.5 L15 20.5 L10 21.5 L6 20.5 L2 19.5 L0.5 17 L2 14 L3.5 11 L6 9 L9 8 L11 4 L14 2.5 Z" fill="url(#g88)"/>
<path d="M9 9 Q14 6 19 8 Q15 11 9 9 Z M4 15 Q9 12 14 15 Q9 17 4 15 Z M17 13 Q22 10 27 13 Q22 15.5 17 13 Z" fill="#a8e860" opacity="0.55"/>
<path d="M20 4 Q25 7 27 12 L24 11 Z M6 18 Q12 20 20 19 L14 17 Z" fill="#1e6a0a" opacity="0.5"/></svg>
<div style="position:absolute;left:547.00px;top:695.15px;font:bold 14px 'Liberation Sans';line-height:0;white-space:pre;color:#ffff00;letter-spacing:0.328px;">*BASE</div>
<div style="position:absolute;left:69px;top:741px;width:1083px;height:169px;background:#ffffff;"></div>
<div style="position:absolute;left:69px;top:741px;width:1083px;height:19px;background:linear-gradient(#ffffff,#ffffff 40%,#f0f1f4 42%,#eef0f3);"></div>
<div style="position:absolute;left:69px;top:759px;width:1083px;height:1px;background:#d8d8d8;"></div>
<div style="position:absolute;left:69px;top:741px;width:35px;height:19px;background:linear-gradient(#fbfbfb,#d2d2d2);"></div>
<div style="position:absolute;left:104px;top:741px;width:1px;height:19px;background:#e4e4e4;"></div>
<div style="position:absolute;left:105px;top:741px;width:1px;height:19px;background:#ffffff;"></div>
<div style="position:absolute;left:145px;top:741px;width:1px;height:19px;background:#e4e4e4;"></div>
<div style="position:absolute;left:146px;top:741px;width:1px;height:19px;background:#ffffff;"></div>
<div style="position:absolute;left:176px;top:741px;width:1px;height:19px;background:#e4e4e4;"></div>
<div style="position:absolute;left:177px;top:741px;width:1px;height:19px;background:#ffffff;"></div>
<div style="position:absolute;left:207px;top:741px;width:1px;height:19px;background:#e4e4e4;"></div>
<div style="position:absolute;left:208px;top:741px;width:1px;height:19px;background:#ffffff;"></div>
<div style="position:absolute;left:248px;top:741px;width:1px;height:19px;background:#e4e4e4;"></div>
<div style="position:absolute;left:249px;top:741px;width:1px;height:19px;background:#ffffff;"></div>
<div style="position:absolute;left:289px;top:741px;width:1px;height:19px;background:#e4e4e4;"></div>
<div style="position:absolute;left:290px;top:741px;width:1px;height:19px;background:#ffffff;"></div>
<div style="position:absolute;left:330px;top:741px;width:1px;height:19px;background:#e4e4e4;"></div>
<div style="position:absolute;left:331px;top:741px;width:1px;height:19px;background:#ffffff;"></div>
<div style="position:absolute;left:489px;top:741px;width:1px;height:19px;background:#e4e4e4;"></div>
<div style="position:absolute;left:490px;top:741px;width:1px;height:19px;background:#ffffff;"></div>
<div style="position:absolute;left:563px;top:741px;width:1px;height:19px;background:#e4e4e4;"></div>
<div style="position:absolute;left:564px;top:741px;width:1px;height:19px;background:#ffffff;"></div>
<div style="position:absolute;left:664px;top:741px;width:1px;height:19px;background:#e4e4e4;"></div>
<div style="position:absolute;left:665px;top:741px;width:1px;height:19px;background:#ffffff;"></div>
<div style="position:absolute;left:695px;top:741px;width:1px;height:19px;background:#e4e4e4;"></div>
<div style="position:absolute;left:696px;top:741px;width:1px;height:19px;background:#ffffff;"></div>
<div style="position:absolute;left:947px;top:741px;width:1px;height:19px;background:#e4e4e4;"></div>
<div style="position:absolute;left:948px;top:741px;width:1px;height:19px;background:#ffffff;"></div>
<div style="position:absolute;left:113.20px;top:751.15px;font:bold 14px 'Liberation Sans';line-height:0;white-space:pre;color:#4a5ee8;letter-spacing:0.205px;">Seq.</div>
<div style="position:absolute;left:216.00px;top:751.15px;font:bold 14px 'Liberation Sans';line-height:0;white-space:pre;color:#4a5ee8;letter-spacing:-0.077px;">Nrm.</div>
<div style="position:absolute;left:256.80px;top:751.15px;font:bold 14px 'Liberation Sans';line-height:0;white-space:pre;color:#4a5ee8;letter-spacing:-0.177px;">Abn.</div>
<div style="position:absolute;left:298.70px;top:751.15px;font:bold 14px 'Liberation Sans';line-height:0;white-space:pre;color:#4a5ee8;letter-spacing:-0.011px;">Unc.</div>
<div style="position:absolute;left:333.00px;top:751.15px;font:bold 14px 'Liberation Sans';line-height:0;white-space:pre;color:#4a5ee8;letter-spacing:0.047px;">Job Name</div>
<div style="position:absolute;left:493.00px;top:751.15px;font:bold 14px 'Liberation Sans';line-height:0;white-space:pre;color:#4a5ee8;letter-spacing:0.128px;">JDC</div>
<div style="position:absolute;left:567.20px;top:751.15px;font:bold 14px 'Liberation Sans';line-height:0;white-space:pre;color:#4a5ee8;letter-spacing:-0.262px;">Environment</div>
<div style="position:absolute;left:698.40px;top:751.15px;font:bold 14px 'Liberation Sans';line-height:0;white-space:pre;color:#4a5ee8;letter-spacing:-0.202px;">Run on Host</div>
<div style="position:absolute;left:952.70px;top:751.15px;font:bold 14px 'Liberation Sans';line-height:0;white-space:pre;color:#4a5ee8;letter-spacing:-0.136px;">Dependencies</div>
<div style="position:absolute;left:69px;top:760px;width:1083px;height:17px;background:#ffffff;"></div>
<div style="position:absolute;left:104px;top:760px;width:1px;height:17px;background:#a0a0a0;"></div>
<div style="position:absolute;left:145px;top:760px;width:1px;height:17px;background:#a0a0a0;"></div>
<div style="position:absolute;left:176px;top:760px;width:1px;height:17px;background:#a0a0a0;"></div>
<div style="position:absolute;left:207px;top:760px;width:1px;height:17px;background:#a0a0a0;"></div>
<div style="position:absolute;left:248px;top:760px;width:1px;height:17px;background:#a0a0a0;"></div>
<div style="position:absolute;left:289px;top:760px;width:1px;height:17px;background:#a0a0a0;"></div>
<div style="position:absolute;left:330px;top:760px;width:1px;height:17px;background:#a0a0a0;"></div>
<div style="position:absolute;left:489px;top:760px;width:1px;height:17px;background:#a0a0a0;"></div>
<div style="position:absolute;left:563px;top:760px;width:1px;height:17px;background:#a0a0a0;"></div>
<div style="position:absolute;left:664px;top:760px;width:1px;height:17px;background:#a0a0a0;"></div>
<div style="position:absolute;left:695px;top:760px;width:1px;height:17px;background:#a0a0a0;"></div>
<div style="position:absolute;left:947px;top:760px;width:1px;height:17px;background:#a0a0a0;"></div>
<div style="position:absolute;left:948px;top:760px;width:1px;height:17px;background:#a0a0a0;"></div>
<div style="position:absolute;left:69px;top:777px;width:1083px;height:1px;background:#a0a0a0;"></div>
<div style="position:absolute;left:69px;top:778px;width:1083px;height:3px;background:#e8e8f8;"></div>
<div style="position:absolute;left:69px;top:781px;width:1083px;height:1px;background:#a0a0a0;"></div>
<div style="position:absolute;left:69px;top:781px;width:35px;height:21px;background:#f0f0f0;"></div>
<div style="position:absolute;left:69px;top:802px;width:1083px;height:1px;background:#a0a0a0;"></div>
<div style="position:absolute;left:104px;top:781px;width:1px;height:21px;background:#a0a0a0;"></div>
<div style="position:absolute;left:145px;top:781px;width:1px;height:21px;background:#a0a0a0;"></div>
<div style="position:absolute;left:176px;top:781px;width:1px;height:21px;background:#a0a0a0;"></div>
<div style="position:absolute;left:207px;top:781px;width:1px;height:21px;background:#a0a0a0;"></div>
<div style="position:absolute;left:248px;top:781px;width:1px;height:21px;background:#a0a0a0;"></div>
<div style="position:absolute;left:289px;top:781px;width:1px;height:21px;background:#a0a0a0;"></div>
<div style="position:absolute;left:330px;top:781px;width:1px;height:21px;background:#a0a0a0;"></div>
<div style="position:absolute;left:489px;top:781px;width:1px;height:21px;background:#a0a0a0;"></div>
<div style="position:absolute;left:563px;top:781px;width:1px;height:21px;background:#a0a0a0;"></div>
<div style="position:absolute;left:664px;top:781px;width:1px;height:21px;background:#a0a0a0;"></div>
<div style="position:absolute;left:695px;top:781px;width:1px;height:21px;background:#a0a0a0;"></div>
<div style="position:absolute;left:947px;top:781px;width:1px;height:21px;background:#a0a0a0;"></div>
<div style="position:absolute;left:948px;top:781px;width:1px;height:21px;background:#a0a0a0;"></div>
<div style="position:absolute;left:82.66px;top:792.84px;font:bold 12px 'Liberation Sans';line-height:0;white-space:pre;color:#000;">1</div>
<div style="position:absolute;left:128.64px;top:792.84px;font:bold 12px 'Liberation Sans';line-height:0;white-space:pre;color:#000;">10</div>
<div style="position:absolute;left:333.00px;top:792.84px;font:bold 12px 'Liberation Sans';line-height:0;white-space:pre;color:#000;">GROUP_TITANIA_01</div>
<div style="position:absolute;left:492.00px;top:792.84px;font:bold 12px 'Liberation Sans';line-height:0;white-space:pre;color:#000;letter-spacing:-0.203px;">*BASE</div>
<svg style="position:absolute;left:564px;top:784px;" width="16" height="16" viewBox="0 0 16 16"><rect x="0.5" y="0.5" width="15" height="15" fill="#f8e800" stroke="#806c00" stroke-width="1"/>
<text x="8" y="9.6" font-family="Liberation Sans" font-weight="bold" font-size="9.5" text-anchor="middle" fill="#000" textLength="12" lengthAdjust="spacingAndGlyphs">55</text>
<text x="8" y="14" font-family="Liberation Sans" font-weight="bold" font-size="3.6" text-anchor="middle" fill="#5a5000" textLength="10" lengthAdjust="spacing">MPH</text></svg>
<div style="position:absolute;left:583.00px;top:791.84px;font:bold 12px 'Liberation Sans';line-height:0;white-space:pre;color:#000;letter-spacing:-0.203px;">*BASE</div>
<svg style="position:absolute;left:671px;top:784px;" width="16" height="16" viewBox="0 0 16 16"><circle cx="8" cy="8" r="8" fill="#78c050"/><text x="8" y="10.6" font-family="Liberation Sans" font-weight="bold" font-size="7" text-anchor="middle" fill="#f0fff0" textLength="11" lengthAdjust="spacingAndGlyphs">AIX</text></svg>
<div style="position:absolute;left:698.00px;top:792.84px;font:bold 12px 'Liberation Sans';line-height:0;white-space:pre;color:#000;">TITANIA</div>
<div style="position:absolute;left:69px;top:802px;width:35px;height:21px;background:#f0f0f0;"></div>
<div style="position:absolute;left:69px;top:823px;width:1083px;height:1px;background:#a0a0a0;"></div>
<div style="position:absolute;left:104px;top:802px;width:1px;height:21px;background:#a0a0a0;"></div>
<div style="position:absolute;left:145px;top:802px;width:1px;height:21px;background:#a0a0a0;"></div>
<div style="position:absolute;left:176px;top:802px;width:1px;height:21px;background:#a0a0a0;"></div>
<div style="position:absolute;left:207px;top:802px;width:1px;height:21px;background:#a0a0a0;"></div>
<div style="position:absolute;left:248px;top:802px;width:1px;height:21px;background:#a0a0a0;"></div>
<div style="position:absolute;left:289px;top:802px;width:1px;height:21px;background:#a0a0a0;"></div>
<div style="position:absolute;left:330px;top:802px;width:1px;height:21px;background:#a0a0a0;"></div>
<div style="position:absolute;left:489px;top:802px;width:1px;height:21px;background:#a0a0a0;"></div>
<div style="position:absolute;left:563px;top:802px;width:1px;height:21px;background:#a0a0a0;"></div>
<div style="position:absolute;left:664px;top:802px;width:1px;height:21px;background:#a0a0a0;"></div>
<div style="position:absolute;left:695px;top:802px;width:1px;height:21px;background:#a0a0a0;"></div>
<div style="position:absolute;left:947px;top:802px;width:1px;height:21px;background:#a0a0a0;"></div>
<div style="position:absolute;left:948px;top:802px;width:1px;height:21px;background:#a0a0a0;"></div>
<div style="position:absolute;left:82.66px;top:813.84px;font:bold 12px 'Liberation Sans';line-height:0;white-space:pre;color:#000;">2</div>
<div style="position:absolute;left:128.64px;top:813.84px;font:bold 12px 'Liberation Sans';line-height:0;white-space:pre;color:#000;">20</div>
<div style="position:absolute;left:333.00px;top:813.84px;font:bold 12px 'Liberation Sans';line-height:0;white-space:pre;color:#000;">GROUP_GALATEA_01</div>
<div style="position:absolute;left:492.00px;top:813.84px;font:bold 12px 'Liberation Sans';line-height:0;white-space:pre;color:#000;letter-spacing:-0.203px;">*BASE</div>
<svg style="position:absolute;left:564px;top:805px;" width="16" height="16" viewBox="0 0 16 16"><rect x="0.5" y="0.5" width="15" height="15" fill="#f8e800" stroke="#806c00" stroke-width="1"/>
<text x="8" y="9.6" font-family="Liberation Sans" font-weight="bold" font-size="9.5" text-anchor="middle" fill="#000" textLength="12" lengthAdjust="spacingAndGlyphs">55</text>
<text x="8" y="14" font-family="Liberation Sans" font-weight="bold" font-size="3.6" text-anchor="middle" fill="#5a5000" textLength="10" lengthAdjust="spacing">MPH</text></svg>
<div style="position:absolute;left:583.00px;top:812.84px;font:bold 12px 'Liberation Sans';line-height:0;white-space:pre;color:#000;letter-spacing:-0.203px;">*BASE</div>
<svg style="position:absolute;left:671px;top:805px;" width="16" height="16" viewBox="0 0 16 16"><path d="M0.5 9.5 Q0.5 5.5 3.5 4.5 Q4.5 1 8 0.8 Q12 1 13 4 Q16.5 5.5 16.5 9.5 Q15.5 12.8 12 12.2 Q8 11.5 4 12.5 Q1 13 0.5 9.5 Z" fill="#111"/>
<path d="M2 8.5 Q2.5 6 5 5.5 Q6 2.2 8.5 2.2 Q11.5 2.4 12 5 Q14.8 6 15 8.6 Q12.5 9.4 9.5 8.5 Q6 7.8 2 8.5 Z" fill="#e01a1a"/><path d="M5 5.5 Q9 6.5 12 5 Q9 7.5 5 5.5 Z" fill="#a00000"/>
<path d="M8.5 12 L10 14.5 L11.5 12.2" fill="none" stroke="#888" stroke-width="0.8"/></svg>
<div style="position:absolute;left:698.00px;top:813.84px;font:bold 12px 'Liberation Sans';line-height:0;white-space:pre;color:#000;">REVSOFT_QANDA_REDHAT_EL_P</div>
<div style="position:absolute;left:952.00px;top:813.84px;font:bold 12px 'Liberation Sans';line-height:0;white-space:pre;color:#000;">IF 10=NC</div>
<div style="position:absolute;left:69px;top:823px;width:35px;height:21px;background:#f0f0f0;"></div>
<div style="position:absolute;left:69px;top:844px;width:1083px;height:1px;background:#a0a0a0;"></div>
<div style="position:absolute;left:104px;top:823px;width:1px;height:21px;background:#a0a0a0;"></div>
<div style="position:absolute;left:145px;top:823px;width:1px;height:21px;background:#a0a0a0;"></div>
<div style="position:absolute;left:176px;top:823px;width:1px;height:21px;background:#a0a0a0;"></div>
<div style="position:absolute;left:207px;top:823px;width:1px;height:21px;background:#a0a0a0;"></div>
<div style="position:absolute;left:248px;top:823px;width:1px;height:21px;background:#a0a0a0;"></div>
<div style="position:absolute;left:289px;top:823px;width:1px;height:21px;background:#a0a0a0;"></div>
<div style="position:absolute;left:330px;top:823px;width:1px;height:21px;background:#a0a0a0;"></div>
<div style="position:absolute;left:489px;top:823px;width:1px;height:21px;background:#a0a0a0;"></div>
<div style="position:absolute;left:563px;top:823px;width:1px;height:21px;background:#a0a0a0;"></div>
<div style="position:absolute;left:664px;top:823px;width:1px;height:21px;background:#a0a0a0;"></div>
<div style="position:absolute;left:695px;top:823px;width:1px;height:21px;background:#a0a0a0;"></div>
<div style="position:absolute;left:947px;top:823px;width:1px;height:21px;background:#a0a0a0;"></div>
<div style="position:absolute;left:948px;top:823px;width:1px;height:21px;background:#a0a0a0;"></div>
<div style="position:absolute;left:82.66px;top:834.84px;font:bold 12px 'Liberation Sans';line-height:0;white-space:pre;color:#000;">3</div>
<div style="position:absolute;left:128.64px;top:834.84px;font:bold 12px 'Liberation Sans';line-height:0;white-space:pre;color:#000;">30</div>
<div style="position:absolute;left:333.00px;top:834.84px;font:bold 12px 'Liberation Sans';line-height:0;white-space:pre;color:#000;">WIN_CHILD_01</div>
<div style="position:absolute;left:492.00px;top:834.84px;font:bold 12px 'Liberation Sans';line-height:0;white-space:pre;color:#000;letter-spacing:-0.203px;">*BASE</div>
<svg style="position:absolute;left:564px;top:826px;" width="16" height="16" viewBox="0 0 16 16"><rect x="0.5" y="0.5" width="15" height="15" fill="#f8e800" stroke="#806c00" stroke-width="1"/>
<text x="8" y="9.6" font-family="Liberation Sans" font-weight="bold" font-size="9.5" text-anchor="middle" fill="#000" textLength="12" lengthAdjust="spacingAndGlyphs">55</text>
<text x="8" y="14" font-family="Liberation Sans" font-weight="bold" font-size="3.6" text-anchor="middle" fill="#5a5000" textLength="10" lengthAdjust="spacing">MPH</text></svg>
<div style="position:absolute;left:583.00px;top:833.84px;font:bold 12px 'Liberation Sans';line-height:0;white-space:pre;color:#000;letter-spacing:-0.203px;">*BASE</div>
<svg style="position:absolute;left:671px;top:826px;" width="16" height="16" viewBox="0 0 16 16"><path d="M2.2 2.6 Q4.5 1 7.6 2.2 L6.9 7.2 Q4 6.1 1.4 7.6 Z" fill="#f05a28"/><path d="M8.6 2.4 Q11.6 3.6 15.6 1.6 L14.9 6.6 Q11.2 8.6 7.9 7.4 Z" fill="#7cc242"/>
<path d="M1.2 8.7 Q4 7.1 6.7 8.2 L6 13.2 Q3.1 12.1 0.4 13.6 Z" fill="#3a8ef0"/><path d="M7.7 8.5 Q11 9.7 14.7 7.7 L14 12.7 Q10.6 14.6 7 13.4 Z" fill="#f8c020"/>
<path d="M2.2 2.6 Q4.5 1 7.6 2.2 L7.4 3.5 Q4.5 2.5 2 4 Z M8.6 2.4 Q11.6 3.6 15.6 1.6 L15.4 3 Q11.5 5 8.4 3.8 Z" fill="#fff" opacity="0.3"/></svg>
<div style="position:absolute;left:698.00px;top:834.84px;font:bold 12px 'Liberation Sans';line-height:0;white-space:pre;color:#000;">AUTONOE</div>
<div style="position:absolute;left:952.00px;top:834.84px;font:bold 12px 'Liberation Sans';line-height:0;white-space:pre;color:#000;">IF 10=NC OR 20=NC</div>
<div style="position:absolute;left:69px;top:844px;width:35px;height:21px;background:#f0f0f0;"></div>
<div style="position:absolute;left:69px;top:865px;width:1083px;height:1px;background:#a0a0a0;"></div>
<div style="position:absolute;left:104px;top:844px;width:1px;height:21px;background:#a0a0a0;"></div>
<div style="position:absolute;left:145px;top:844px;width:1px;height:21px;background:#a0a0a0;"></div>
<div style="position:absolute;left:176px;top:844px;width:1px;height:21px;background:#a0a0a0;"></div>
<div style="position:absolute;left:207px;top:844px;width:1px;height:21px;background:#a0a0a0;"></div>
<div style="position:absolute;left:248px;top:844px;width:1px;height:21px;background:#a0a0a0;"></div>
<div style="position:absolute;left:289px;top:844px;width:1px;height:21px;background:#a0a0a0;"></div>
<div style="position:absolute;left:330px;top:844px;width:1px;height:21px;background:#a0a0a0;"></div>
<div style="position:absolute;left:489px;top:844px;width:1px;height:21px;background:#a0a0a0;"></div>
<div style="position:absolute;left:563px;top:844px;width:1px;height:21px;background:#a0a0a0;"></div>
<div style="position:absolute;left:664px;top:844px;width:1px;height:21px;background:#a0a0a0;"></div>
<div style="position:absolute;left:695px;top:844px;width:1px;height:21px;background:#a0a0a0;"></div>
<div style="position:absolute;left:947px;top:844px;width:1px;height:21px;background:#a0a0a0;"></div>
<div style="position:absolute;left:948px;top:844px;width:1px;height:21px;background:#a0a0a0;"></div>
<div style="position:absolute;left:82.66px;top:855.84px;font:bold 12px 'Liberation Sans';line-height:0;white-space:pre;color:#000;">4</div>
<div style="position:absolute;left:128.64px;top:855.84px;font:bold 12px 'Liberation Sans';line-height:0;white-space:pre;color:#000;">40</div>
<div style="position:absolute;left:333.00px;top:855.84px;font:bold 12px 'Liberation Sans';line-height:0;white-space:pre;color:#000;">GROUP_ISONOE_01</div>
<div style="position:absolute;left:492.00px;top:855.84px;font:bold 12px 'Liberation Sans';line-height:0;white-space:pre;color:#000;letter-spacing:-0.203px;">*BASE</div>
<svg style="position:absolute;left:564px;top:847px;" width="16" height="16" viewBox="0 0 16 16"><rect x="0.5" y="0.5" width="15" height="15" fill="#f8e800" stroke="#806c00" stroke-width="1"/>
<text x="8" y="9.6" font-family="Liberation Sans" font-weight="bold" font-size="9.5" text-anchor="middle" fill="#000" textLength="12" lengthAdjust="spacingAndGlyphs">55</text>
<text x="8" y="14" font-family="Liberation Sans" font-weight="bold" font-size="3.6" text-anchor="middle" fill="#5a5000" textLength="10" lengthAdjust="spacing">MPH</text></svg>
<div style="position:absolute;left:583.00px;top:854.84px;font:bold 12px 'Liberation Sans';line-height:0;white-space:pre;color:#000;letter-spacing:-0.203px;">*BASE</div>
<svg style="position:absolute;left:671px;top:847px;" width="16" height="16" viewBox="0 0 16 16"><path d="M2.2 2.6 Q4.5 1 7.6 2.2 L6.9 7.2 Q4 6.1 1.4 7.6 Z" fill="#f05a28"/><path d="M8.6 2.4 Q11.6 3.6 15.6 1.6 L14.9 6.6 Q11.2 8.6 7.9 7.4 Z" fill="#7cc242"/>
<path d="M1.2 8.7 Q4 7.1 6.7 8.2 L6 13.2 Q3.1 12.1 0.4 13.6 Z" fill="#3a8ef0"/><path d="M7.7 8.5 Q11 9.7 14.7 7.7 L14 12.7 Q10.6 14.6 7 13.4 Z" fill="#f8c020"/>
<path d="M2.2 2.6 Q4.5 1 7.6 2.2 L7.4 3.5 Q4.5 2.5 2 4 Z M8.6 2.4 Q11.6 3.6 15.6 1.6 L15.4 3 Q11.5 5 8.4 3.8 Z" fill="#fff" opacity="0.3"/></svg>
<div style="position:absolute;left:698.00px;top:855.84px;font:bold 12px 'Liberation Sans';line-height:0;white-space:pre;color:#000;">ISONOE</div>
<div style="position:absolute;left:952.00px;top:855.84px;font:bold 12px 'Liberation Sans';line-height:0;white-space:pre;color:#000;">IF 30=NC</div>
<div style="position:absolute;left:69px;top:865px;width:35px;height:21px;background:#f0f0f0;"></div>
<div style="position:absolute;left:69px;top:886px;width:1083px;height:1px;background:#a0a0a0;"></div>
<div style="position:absolute;left:104px;top:865px;width:1px;height:21px;background:#a0a0a0;"></div>
<div style="position:absolute;left:145px;top:865px;width:1px;height:21px;background:#a0a0a0;"></div>
<div style="position:absolute;left:176px;top:865px;width:1px;height:21px;background:#a0a0a0;"></div>
<div style="position:absolute;left:207px;top:865px;width:1px;height:21px;background:#a0a0a0;"></div>
<div style="position:absolute;left:248px;top:865px;width:1px;height:21px;background:#a0a0a0;"></div>
<div style="position:absolute;left:289px;top:865px;width:1px;height:21px;background:#a0a0a0;"></div>
<div style="position:absolute;left:330px;top:865px;width:1px;height:21px;background:#a0a0a0;"></div>
<div style="position:absolute;left:489px;top:865px;width:1px;height:21px;background:#a0a0a0;"></div>
<div style="position:absolute;left:563px;top:865px;width:1px;height:21px;background:#a0a0a0;"></div>
<div style="position:absolute;left:664px;top:865px;width:1px;height:21px;background:#a0a0a0;"></div>
<div style="position:absolute;left:695px;top:865px;width:1px;height:21px;background:#a0a0a0;"></div>
<div style="position:absolute;left:947px;top:865px;width:1px;height:21px;background:#a0a0a0;"></div>
<div style="position:absolute;left:948px;top:865px;width:1px;height:21px;background:#a0a0a0;"></div>
<div style="position:absolute;left:82.66px;top:876.84px;font:bold 12px 'Liberation Sans';line-height:0;white-space:pre;color:#000;">5</div>
<div style="position:absolute;left:128.64px;top:876.84px;font:bold 12px 'Liberation Sans';line-height:0;white-space:pre;color:#000;">50</div>
<div style="position:absolute;left:333.00px;top:876.84px;font:bold 12px 'Liberation Sans';line-height:0;white-space:pre;color:#000;">GROUP_CHILD_01D</div>
<div style="position:absolute;left:492.00px;top:876.84px;font:bold 12px 'Liberation Sans';line-height:0;white-space:pre;color:#000;letter-spacing:-0.203px;">*BASE</div>
<svg style="position:absolute;left:564px;top:868px;" width="16" height="16" viewBox="0 0 16 16"><rect x="0.5" y="0.5" width="15" height="15" fill="#f8e800" stroke="#806c00" stroke-width="1"/>
<text x="8" y="9.6" font-family="Liberation Sans" font-weight="bold" font-size="9.5" text-anchor="middle" fill="#000" textLength="12" lengthAdjust="spacingAndGlyphs">55</text>
<text x="8" y="14" font-family="Liberation Sans" font-weight="bold" font-size="3.6" text-anchor="middle" fill="#5a5000" textLength="10" lengthAdjust="spacing">MPH</text></svg>
<div style="position:absolute;left:583.00px;top:875.84px;font:bold 12px 'Liberation Sans';line-height:0;white-space:pre;color:#000;letter-spacing:-0.203px;">*BASE</div>
<svg style="position:absolute;left:671px;top:868px;" width="16" height="16" viewBox="0 0 16 16"><circle cx="8" cy="8" r="8" fill="#3a82cc"/><circle cx="8" cy="4.2" r="1.3" fill="#fff"/><rect x="7" y="6.3" width="2" height="5.2" fill="#fff"/><path d="M3 12.2 Q8 13.2 13 12" stroke="#fff" stroke-width="0.9" fill="none"/></svg>
<div style="position:absolute;left:698.00px;top:876.84px;font:bold 12px 'Liberation Sans';line-height:0;white-space:pre;color:#000;">*LOCAL</div>
<div style="position:absolute;left:952.00px;top:876.84px;font:bold 12px 'Liberation Sans';line-height:0;white-space:pre;color:#000;">IF 40=NC</div>
<div style="position:absolute;left:69px;top:781px;width:1083px;height:22px;box-sizing:border-box;border:1px dotted #000;border-right:none;"></div>
<div style="position:absolute;left:69px;top:887px;width:1083px;height:7px;background:#e6e6f6;"></div>
<div style="position:absolute;left:69px;top:894px;width:1083px;height:16px;background:#f0f0f0;"></div>
<svg style="position:absolute;left:75px;top:898px;" width="5" height="8" viewBox="0 0 5 8"><path d="M5 0 L0 4 L5 8 Z" fill="#555"/></svg>
<div style="position:absolute;left:87px;top:895px;width:865px;height:15px;box-sizing:border-box;border:1px solid #a8a8a8;border-radius:2px;background:linear-gradient(#f4f4f4,#e4e4e4 50%,#d4d4d4);"></div>
<svg style="position:absolute;left:516px;top:899px;" width="8" height="7" viewBox="0 0 8 7"><path d="M0.5 0 V7 M3.5 0 V7 M6.5 0 V7" stroke="#666" stroke-width="1"/></svg>
<svg style="position:absolute;left:1141px;top:898px;" width="5" height="8" viewBox="0 0 5 8"><path d="M0 0 L5 4 L0 8 Z" fill="#555"/></svg>
<div style="position:absolute;left:55px;top:916px;width:1114px;height:23px;background:linear-gradient(#424653,#3e424e 35%,#333333 37%,#323232 92%,#3a3a3a);"></div>
<div style="position:absolute;left:67px;top:917px;width:1px;height:21px;background:#111;"></div>
<div style="position:absolute;left:68px;top:917px;width:1px;height:21px;background:#4a4a4a;"></div>
<div style="position:absolute;left:1047px;top:916px;width:121px;height:23px;box-sizing:border-box;background:linear-gradient(#cacaca,#bcbcbc 25%,#9ea2a8 45%,#5a626c 92%,#3a3a3a);border-left:1px solid #111;border-radius:0 0 4px 0;"></div>
<svg style="position:absolute;left:1051px;top:920px;" width="18" height="18" viewBox="0 0 18 18"><circle cx="5" cy="5" r="4" fill="none" stroke="#d0d0e8" stroke-width="2"/><path d="M5 9 L5 17 M5 12 L7 12 M5 15 L7 15" stroke="#d0d0e8" stroke-width="1.6"/>
<path d="M7 3 Q11 1 13 5 L17 12 L16 13 L12 7 Q9 8 7 5" fill="#e8a030"/></svg>
<div style="position:absolute;left:1071.00px;top:927.84px;font:normal 12px 'Liberation Sans';line-height:0;white-space:pre;color:#1a1a70;letter-spacing:-0.778px;">WINUPDJOB</div>
<svg style="position:absolute;left:1154px;top:926px;" width="13" height="13" viewBox="0 0 13 13"><rect x="10" y="2" width="2" height="2" fill="#f0f0f0"/><rect x="9" y="1" width="2" height="2" fill="#111"/><rect x="6" y="6" width="2" height="2" fill="#f0f0f0"/><rect x="5" y="5" width="2" height="2" fill="#111"/><rect x="10" y="6" width="2" height="2" fill="#f0f0f0"/><rect x="9" y="5" width="2" height="2" fill="#111"/><rect x="2" y="10" width="2" height="2" fill="#f0f0f0"/><rect x="1" y="9" width="2" height="2" fill="#111"/><rect x="6" y="10" width="2" height="2" fill="#f0f0f0"/><rect x="5" y="9" width="2" height="2" fill="#111"/><rect x="10" y="10" width="2" height="2" fill="#f0f0f0"/><rect x="9" y="9" width="2" height="2" fill="#111"/></svg>
</body></html>
